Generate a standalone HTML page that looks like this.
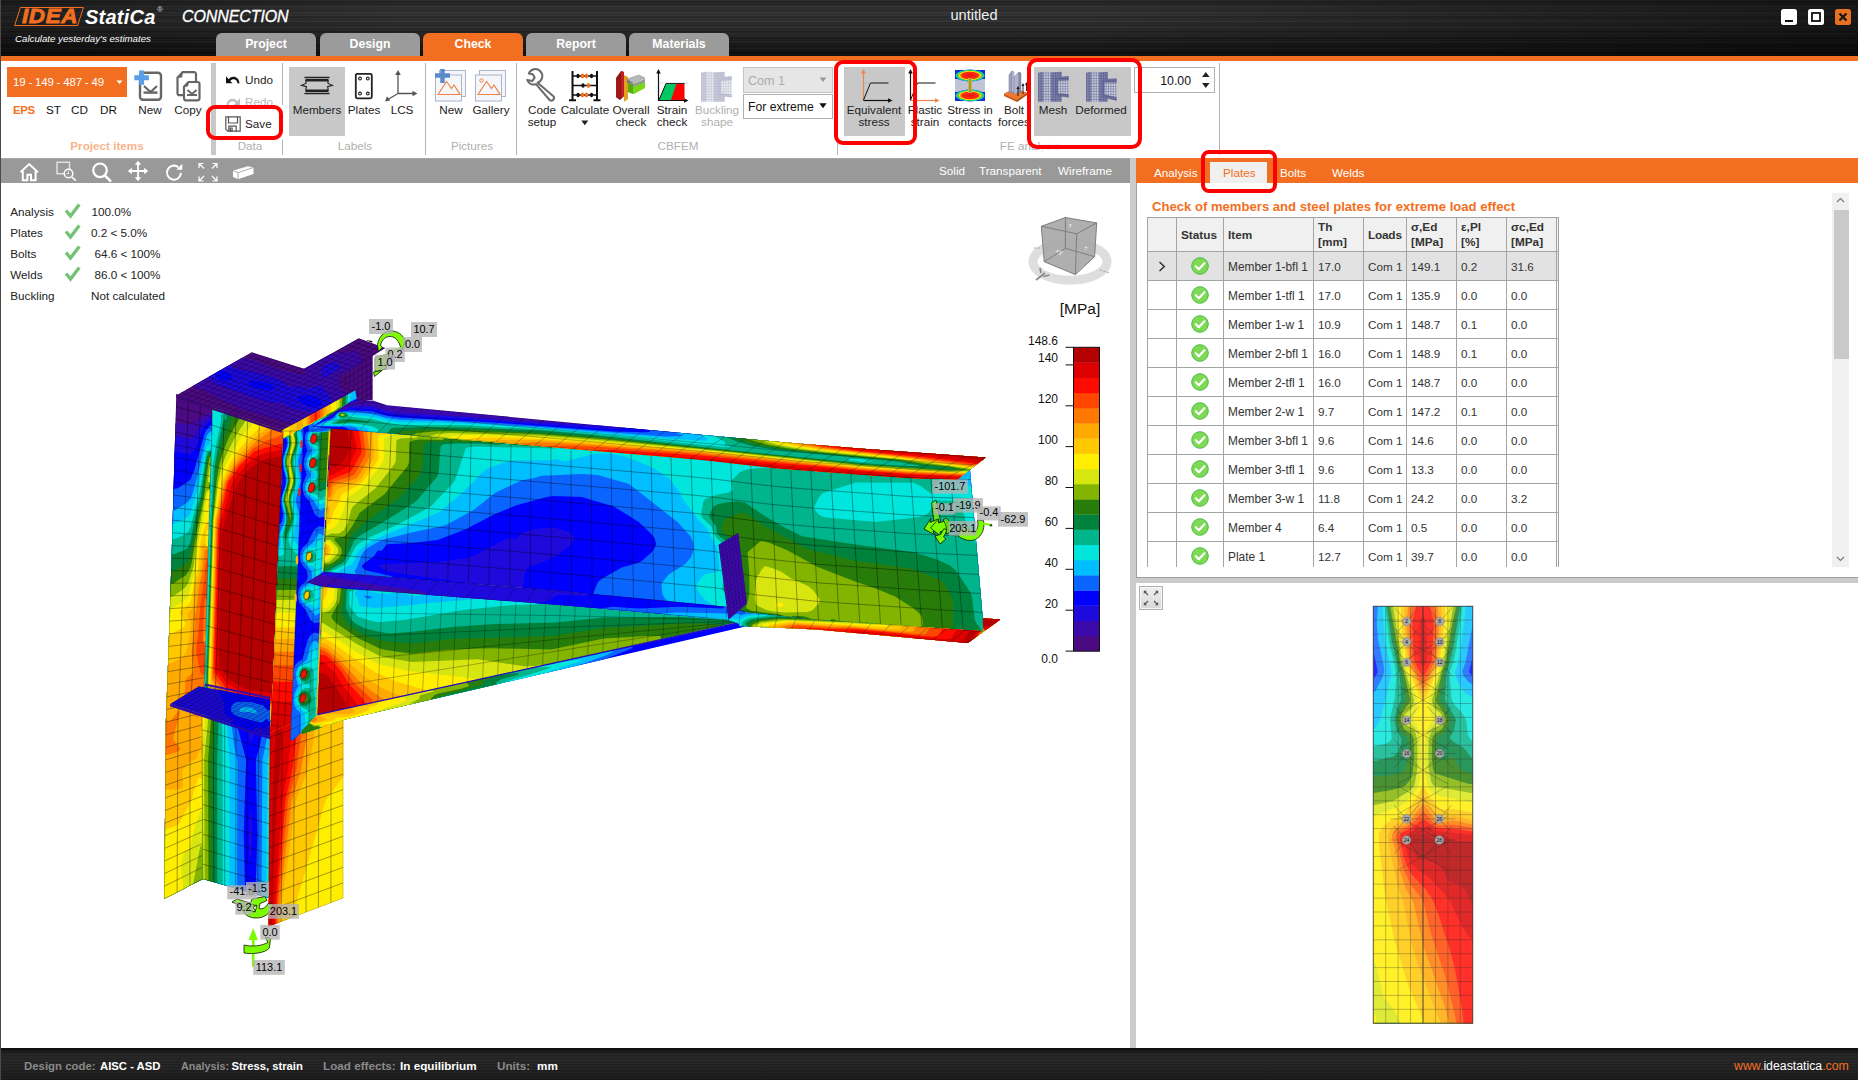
<!DOCTYPE html>
<html><head><meta charset="utf-8"><title>IDEA StatiCa Connection</title>
<style>
*{box-sizing:border-box;margin:0;padding:0}
html,body{width:1858px;height:1080px;overflow:hidden;background:#fff;font-family:"Liberation Sans",sans-serif;font-size:11.7px;color:#222}
.abs,.a{position:absolute}
svg{position:absolute;overflow:visible}
#titlebar{position:absolute;left:0;top:0;width:1858px;height:57px;background:
 linear-gradient(90deg,rgba(0,0,0,.35) 0,rgba(0,0,0,0) 22%,rgba(0,0,0,0) 58%,rgba(0,0,0,.5) 100%),
 repeating-linear-gradient(180deg,rgba(255,255,255,.05) 0,rgba(255,255,255,0) 1px,rgba(0,0,0,.16) 2px,rgba(255,255,255,.03) 3px),
 repeating-linear-gradient(180deg,rgba(255,255,255,.03) 0,rgba(0,0,0,.1) 3.5px,rgba(255,255,255,.04) 7px),
 linear-gradient(180deg,#222 0,#303030 18%,#2a2a2a 45%,#1b1b1b 70%,#080808 100%)}
#oline{position:absolute;left:0;top:56px;width:1858px;height:5px;background:#f26f21}
.mtab{position:absolute;top:33px;width:100px;height:24px;border-radius:6px 6px 0 0;background:#9b9b9b;color:#fff;font-weight:bold;font-size:12.3px;text-align:center;line-height:23px}
.mtab.act{background:#f26f21}
#ribbon{position:absolute;left:0;top:61px;width:1858px;height:97px;background:#fff}
#vtool{position:absolute;left:0;top:158px;width:1130px;height:25px;background:#999;border-top:1px solid #a8a8a8}
#view{position:absolute;left:0;top:183px;width:1130px;height:865px;background:#fff;overflow:hidden}
#vsplit{position:absolute;left:1130px;top:158px;width:6px;height:890px;background:#cbcbcb}
#rtabs{position:absolute;left:1136px;top:158px;width:722px;height:25px;background:#f26f21}
#rpanel{position:absolute;left:1136px;top:183px;width:722px;height:394px;background:#fff;border-left:1px solid #a0a0a0;overflow:hidden}
#hsplit{position:absolute;left:1136px;top:577px;width:722px;height:6px;background:#cbcbcb;border-top:1px solid #a0a0a0}
#rbottom{position:absolute;left:1136px;top:583px;width:722px;height:465px;background:#fff}
#status{position:absolute;left:0;top:1048px;width:1858px;height:32px;background:
 repeating-linear-gradient(180deg,rgba(255,255,255,.04) 0,rgba(255,255,255,0) 1px,rgba(0,0,0,.14) 2px,rgba(255,255,255,.03) 3px),
 linear-gradient(180deg,#0a0a0a 0,#262626 20%,#222 60%,#1a1a1a 100%)}
#leftedge{position:absolute;left:0;top:0;width:1px;height:1080px;background:#4a4a4a}
/* ribbon */
.lb{position:absolute;transform:translateX(-50%);text-align:center;white-space:nowrap;line-height:12px;font-size:11.7px;color:#222}
.gl{position:absolute;transform:translateX(-50%);white-space:nowrap;line-height:12px;font-size:11.7px;color:#b0b0b0;top:140px}
.vs{position:absolute;top:63px;width:1px;height:92px;background:#b4b4b4}
.pb{position:absolute;top:67px;height:69px;background:#c8c8c8}
.rbox{position:absolute;border:4px solid #fe0000;border-radius:9px}
.t{position:absolute;white-space:nowrap;line-height:12px}
</style></head><body>
<div id="titlebar"></div>
<div class="mtab" style="left:216px">Project</div>
<div class="mtab" style="left:320px">Design</div>
<div class="mtab act" style="left:423px">Check</div>
<div class="mtab" style="left:526px">Report</div>
<div class="mtab" style="left:629px">Materials</div>
<div id="oline"></div>
<div id="ribbon"></div>
<div id="vtool"></div>
<div id="view">
<!--VIEW-->
</div>
<div id="vsplit"></div>
<div id="rtabs"></div>
<div id="rpanel"></div>
<div id="hsplit"></div>
<div id="rbottom"></div>
<div id="status"></div>
<!-- title bar content -->
<div class="a" style="left:17px;top:7px;width:64px;height:19px;border:1.6px solid #f26f21;transform:skewX(-18deg);border-radius:1px"></div>
<div class="a" style="left:19px;top:5px;width:62px;height:22px;line-height:22px;font-size:20px;font-weight:bold;font-style:italic;color:#f26f21;letter-spacing:0.6px;text-align:center;-webkit-text-stroke:0.8px #f26f21;transform:scaleX(1.12);transform-origin:50% 50%">IDEA</div>
<div class="a" style="left:85px;top:5px;line-height:24px;font-size:20px;font-weight:bold;font-style:italic;color:#fff;white-space:nowrap;letter-spacing:0.25px">StatiCa</div>
<div class="a" style="left:157px;top:6px;line-height:8px;font-size:8px;color:#ddd">®</div>
<div class="a" style="left:182px;top:7px;line-height:20px;font-size:16px;font-style:italic;color:#fff;white-space:nowrap;letter-spacing:-0.1px;-webkit-text-stroke:0.3px #fff">CONNECTION</div>
<div class="a" style="left:15px;top:33px;line-height:12px;font-size:9.7px;font-style:italic;color:#fff;white-space:nowrap">Calculate yesterday's estimates</div>
<div class="a" style="left:924px;top:7px;width:100px;text-align:center;line-height:16px;font-size:14.6px;color:#f0f0f0">untitled</div>
<svg style="left:1780px;top:8px" width="74" height="18" viewBox="0 0 74 18">
<rect x="1" y="1" width="16" height="16" rx="2.5" fill="#fff"/><rect x="5" y="12" width="8" height="2" fill="#111"/>
<rect x="28" y="1" width="16" height="16" rx="2.5" fill="#fff"/><rect x="32" y="5" width="8" height="8" fill="none" stroke="#111" stroke-width="1.8"/>
<rect x="55" y="1" width="16" height="16" rx="2.5" fill="#e8701f"/><path d="M59.5 5.500l7 7M66.500 5.500l-7 7" stroke="#151515" stroke-width="2.200"/>
</svg>
<!-- ribbon: project items -->
<div class="a" style="left:7px;top:67px;width:120px;height:30px;background:#f26f21"></div>
<div class="t" style="left:13px;top:76px;color:#fff;font-size:11.4px;letter-spacing:-0.15px">19 - 149 - 487 - 49</div>
<svg style="left:116px;top:80px" width="8" height="5"><path d="M0.5 0.5h6l-3 3.6z" fill="#fff"/></svg>
<div class="t" style="left:13px;top:104px;color:#f26f21;font-weight:bold;font-size:11.3px;letter-spacing:-0.3px">EPS</div>
<div class="t" style="left:46px;top:104px;color:#111">ST</div>
<div class="t" style="left:71px;top:104px;color:#111">CD</div>
<div class="t" style="left:100px;top:104px;color:#111">DR</div>
<!-- New icon -->
<svg style="left:133px;top:69px" width="32" height="34" viewBox="0 0 32 34">
<rect x="7" y="3.8" width="21" height="27" rx="3" fill="#fff" stroke="#666" stroke-width="2.4"/>
<path d="M11 17l6.5 6 6.5-6" fill="none" stroke="#666" stroke-width="2.2"/><path d="M10.5 23.6h14" stroke="#666" stroke-width="2.4"/>
<path d="M1.3 8.7h14.6M8.6 1.6v14.2" stroke="#5b9ee8" stroke-width="5"/>
</svg>
<div class="lb" style="left:150px;top:104px">New</div>
<!-- Copy icon -->
<svg style="left:174px;top:69px" width="30" height="34" viewBox="0 0 30 34">
<path d="M8.5 3.2h11.5a2 2 0 0 1 2 2v19a2 2 0 0 1-2 2h-14.5a2 2 0 0 1-2-2v-15.5z" fill="#fff" stroke="#666" stroke-width="2.2" stroke-linejoin="round"/>
<path d="M3.5 8.7l5-5.5v3.5a2 2 0 0 1-2 2z" fill="#666"/>
<path d="M14.5 13h9a2 2 0 0 1 2 2v14.3a2 2 0 0 1-2 2h-11.5a2 2 0 0 1-2-2v-11.5z" fill="#fff" stroke="#666" stroke-width="2.2" stroke-linejoin="round"/>
<path d="M10 17.8l4.5-4.8v2.8a2 2 0 0 1-2 2z" fill="#666"/>
<path d="M13.5 21l4.5 4 4.5-4" fill="none" stroke="#666" stroke-width="1.8"/><path d="M13 26h10" stroke="#666" stroke-width="2"/>
</svg>
<div class="lb" style="left:188px;top:104px">Copy</div>
<div class="gl" style="left:107px;color:#f8b48c;font-weight:bold">Project items</div>
<div class="a" style="left:211px;top:63px;width:5px;height:92px;background:#c8c8c8"></div>
<!-- data -->
<svg style="left:225px;top:75px" width="16" height="10" viewBox="0 0 16 10"><path d="M1 1.2v7h6.6l-2.4-2.3c2.6-2.6 6.6-2.2 7.4 2.6l1.9-.2c-.6-7-7.4-8.200-10.800-4.100z" fill="#111"/></svg>
<div class="t" style="left:245px;top:74px">Undo</div>
<svg style="left:225px;top:97px" width="16" height="10" viewBox="0 0 16 10"><path d="M15 1.200v7h-6.600l2.400-2.300c-2.600-2.600-6.600-2.200-7.400 2.600l-1.900-.2c.6-7 7.400-8.200 10.800-4.100z" fill="#bdbdbd"/></svg>
<div class="t" style="left:245px;top:96px;color:#b8b8b8">Redo</div>
<div class="rbox" style="left:206px;top:105px;width:77px;height:35px"></div>
<svg style="left:225px;top:116px" width="16" height="16" viewBox="0 0 16 16"><path d="M.8.800h14.400v14.400h-12.400l-2-2z" fill="#fff" stroke="#555" stroke-width="1.200"/><path d="M3.500.8v6.200h9v-6.200M3.800 15.200v-5h7.400v5M5.300 12h1.800v3h-1.800z" fill="none" stroke="#555" stroke-width="1.200"/></svg>
<div class="t" style="left:245px;top:118px">Save</div>
<div class="gl" style="left:250px">Data</div>
<div class="vs" style="left:282px;top:140px;height:15px"></div>
<div class="vs" style="left:282px;height:42px"></div>
<!-- labels -->
<div class="pb" style="left:289px;width:56px"></div>
<svg style="left:300px;top:75px" width="34" height="22" viewBox="0 0 34 22"><path d="M4.500 2.500h25M4.500 18.500h25" stroke="#222" stroke-width="1.600"/><path d="M5.500 5.300h23M5.500 15.700h23" stroke="#222" stroke-width="2.600"/><path d="M6 5v3.500l-4.500 1.800 5 1.400-.5 1.500v2.500M28 5v3.500l4.500 1.800-5 1.400.5 1.500v2.500" fill="none" stroke="#222" stroke-width="1.100"/></svg>
<div class="lb" style="left:317px;top:104px">Members</div>
<svg style="left:354px;top:72px" width="20" height="28" viewBox="0 0 20 28"><rect x="1.800" y="1.800" width="16" height="24.500" rx="1.500" fill="#fff" stroke="#222" stroke-width="1.800"/><g fill="#fff" stroke="#222" stroke-width="1.100"><circle cx="6" cy="6.500" r="1.400"/><circle cx="13.800" cy="6.500" r="1.400"/><circle cx="6" cy="21.500" r="1.400"/><circle cx="13.800" cy="21.500" r="1.400"/></g></svg>
<div class="lb" style="left:364px;top:104px">Plates</div>
<svg style="left:384px;top:70px" width="34" height="32" viewBox="0 0 34 32"><path d="M14 3v20.500M14 23.500h17M14 23.500l-11 6.500" stroke="#555" stroke-width="1.300" fill="none"/><path d="M14 0l-2.800 5h5.600zM33.500 23.500l-5-2.800v5.600zM1 31.500l2-5.300 3.200 4.400z" fill="#555"/></svg>
<div class="lb" style="left:402px;top:104px">LCS</div>
<div class="gl" style="left:355px">Labels</div>
<div class="vs" style="left:425px"></div>
<!-- pictures -->
<svg style="left:434px;top:69px" width="34" height="34" viewBox="0 0 34 34"><rect x="5.500" y="1.500" width="26" height="26" fill="#f4f6fa" stroke="#aab4cc" stroke-width="1"/><rect x="1.500" y="6" width="26" height="26" fill="#f4f6fa" stroke="#aab4cc" stroke-width="1"/><path d="M4 25.500l8.500-13 5 7 2.500-3.500 6 9.500z" fill="none" stroke="#f0824a" stroke-width="1.200"/><path d="M1 6.500h15M8.500 0v14" stroke="#4d83c9" stroke-width="4.500" opacity=".92"/></svg>
<div class="lb" style="left:451px;top:104px">New</div>
<svg style="left:474px;top:69px" width="34" height="34" viewBox="0 0 34 34"><rect x="5.500" y="1.500" width="26" height="26" fill="#f4f6fa" stroke="#aab4cc" stroke-width="1"/><rect x="1.500" y="6" width="26" height="26" fill="#f4f6fa" stroke="#aab4cc" stroke-width="1"/><path d="M4 25.500l8.500-13 5 7 2.500-3.500 6 9.500z" fill="none" stroke="#f0824a" stroke-width="1.200"/><circle cx="7.500" cy="11.500" r="1.700" fill="none" stroke="#f0824a" stroke-width="1"/></svg>
<div class="lb" style="left:491px;top:104px">Gallery</div>
<div class="gl" style="left:472px">Pictures</div>
<div class="vs" style="left:516px"></div>
<svg width="0" height="0" style="left:0;top:0"><defs>
<pattern id="gm" width="1.700" height="2.650" patternUnits="userSpaceOnUse"><path d="M0 .2H1.700M.2 0V2.650" stroke="#474b76" stroke-width=".5" fill="none"/></pattern>
</defs></svg>
<!-- CBFEM -->
<svg style="left:526px;top:69px" width="34" height="34" viewBox="0 0 34 34"><path d="M2.800 4.500a7 7 0 1 1 8.800 9.200l15.800 13.500a2.700 2.700 0 0 1-3.800 3.800l-13.600-15.800a7 7 0 0 1-8.800-4.300l5.200 1 2.300-3.300-2-3.300z" fill="#fff" stroke="#6a6a6a" stroke-width="2" stroke-linejoin="round"/></svg>
<div class="lb" style="left:542px;top:104px">Code<br>setup</div>
<svg style="left:569px;top:70px" width="32" height="32" viewBox="0 0 32 32"><path d="M3.500 1v29M28 1v29M0 30.300h7M24.500 30.300h7" stroke="#111" stroke-width="2"/><path d="M3.500 6h24.500M3.500 15.500h24.500M3.500 25h24.500" stroke="#111" stroke-width="1.300"/><g fill="#111"><ellipse cx="9" cy="6" rx="1.600" ry="2.300"/><ellipse cx="22.500" cy="6" rx="1.600" ry="2.300"/><ellipse cx="14" cy="15.500" rx="1.600" ry="2.300"/><ellipse cx="9" cy="25" rx="1.600" ry="2.300"/><ellipse cx="22.500" cy="25" rx="1.600" ry="2.300"/></g><g fill="#f26f21"><ellipse cx="13.500" cy="6" rx="1.700" ry="2.400"/><ellipse cx="17.500" cy="6" rx="1.700" ry="2.400"/><ellipse cx="19.500" cy="15.500" rx="1.700" ry="2.400"/><ellipse cx="13.500" cy="25" rx="1.700" ry="2.400"/><ellipse cx="17.500" cy="25" rx="1.700" ry="2.400"/></g></svg>
<div class="lb" style="left:585px;top:104px">Calculate</div>
<svg style="left:581px;top:120px" width="8" height="6"><path d="M0.300 0.500h7l-3.500 4.800z" fill="#222"/></svg>
<svg style="left:615px;top:69px" width="32" height="34" viewBox="0 0 32 34"><path d="M1 9l5-7 3 1v24l-4 4-4-3z" fill="#8c1414"/><path d="M6 2l3 1v24l-3 3z" fill="#c02020"/><path d="M9 6l4 2v22l-4 3z" fill="#e0a020"/><path d="M1 9l4 2v20l-4-3z" fill="#a01818"/><path d="M12 10l12-4 6 3-12 5z" fill="#b8b8b8" stroke="#888" stroke-width=".5"/><path d="M13 14l5 1 12-5v9l-11 6-6-2z" fill="#78d818"/><path d="M13 14l5 1v10l-5-2z" fill="#58a810"/><path d="M18 15l12-5v3l-12 5z" fill="#999"/><path d="M12 10v4l6 1v-1z" fill="#7a7a7a"/></svg>
<div class="lb" style="left:631px;top:104px">Overall<br>check</div>
<svg style="left:655px;top:69px" width="34" height="34" viewBox="0 0 34 34"><path d="M3.500 3v28.500h28" fill="none" stroke="#111" stroke-width="1.200"/><path d="M3.500 0l-2.300 4.500h4.600zM33.500 31.500l-4.500-2.300v4.600z" fill="#111"/><path d="M4 31l7-16.500h18.500v16.500z" fill="#fe0000"/><path d="M4 31l7-16.500h10.500l-5.500 16.500z" fill="#00c864"/><path d="M4 31l7-16.500h18.500" fill="none" stroke="#111" stroke-width="1"/><path d="M3.500 14h30" stroke="#999" stroke-width=".7" stroke-dasharray="1 1"/></svg>
<div class="lb" style="left:672px;top:104px">Strain<br>check</div>
<svg style="left:701px;top:70px" width="32" height="32" viewBox="0 0 32 32" opacity=".42"><path d="M0 2.700L5.400 1.800V31.800H0z" fill="#8a8eb6"/><path d="M5.400 1.600L12.900 2V31.800H5.400z" fill="#cfd2e2"/><path d="M12.900 2.400L23.700 1.800V31.800H12.900z" fill="#8286b0"/><path d="M19.900 10.200H30.700V23.600H19.900z" fill="#d4d7e6"/><path d="M17.200 7.500L30.700 6V10.300L19.900 10.800V23.200L30.700 24.200V27.600L17.200 25.600z" fill="#7478a4"/><path d="M0 2.700L5.400 1.800L12.900 2.200L23.700 1.800V6.800L30.700 6V27.600L23.700 26.600V31.800H0z" fill="url(#gm)"/></svg>
<div class="lb" style="left:717px;top:104px;color:#b0b0b0">Buckling<br>shape</div>
<div class="a" style="left:743px;top:67px;width:90px;height:26px;background:#e6e6e6;border:1px solid #c4c4c4"></div>
<div class="t" style="left:748px;top:74px;font-size:12.6px;line-height:14px;color:#ababab">Com 1</div>
<svg style="left:819px;top:77px" width="9" height="6"><path d="M0.500 0.500h7l-3.500 4.500z" fill="#9a9a9a"/></svg>
<div class="a" style="left:743px;top:94px;width:90px;height:25px;background:#fff;border:1px solid #b0b0b0"></div>
<div class="t" style="left:748px;top:100px;font-size:12.200px;line-height:14px;color:#111">For extreme</div>
<svg style="left:819px;top:103px" width="9" height="6"><path d="M0.300 0.300h7.400l-3.700 5z" fill="#111"/></svg>
<div class="gl" style="left:678px">CBFEM</div>
<div class="vs" style="left:837px"></div>
<!-- FE analysis -->
<div class="gl" style="left:1030px">FE anal<span style="color:#ececec">ysis</span></div>
<svg style="left:906px;top:69px" width="34" height="34" viewBox="0 0 34 34"><path d="M4.500 3v28.500" stroke="#111" stroke-width="1.200"/><path d="M4.500 0l-2.300 4.500h4.600z" fill="#111"/><path d="M4.500 31.500h27" stroke="#f0824a" stroke-width="1.200"/><path d="M33.500 31.500l-4.500-2.300v4.600z" fill="#f0824a"/><path d="M4.500 31l7-17h18" fill="none" stroke="#111" stroke-width="1"/></svg>
<div class="lb" style="left:925px;top:104px">Plastic<br>strain</div>
<svg style="left:955px;top:70px" width="30" height="31" viewBox="0 0 30 31"><defs><radialGradient id="sc1" cx="50%" cy="50%" r="50%"><stop offset="0" stop-color="#f01010"/><stop offset=".55" stop-color="#f83010"/><stop offset=".7" stop-color="#f8e010"/><stop offset=".82" stop-color="#30d030"/><stop offset=".92" stop-color="#10c8e8"/><stop offset="1" stop-color="#1028d8"/></radialGradient></defs><rect width="30" height="31" fill="#1030d0"/><rect x="0" y="9" width="30" height="13" fill="#c0c4d4"/><ellipse cx="15" cy="5.500" rx="15" ry="6" fill="url(#sc1)"/><ellipse cx="15" cy="25.500" rx="15" ry="6" fill="url(#sc1)"/><rect x="13" y="8" width="4" height="15" fill="#40d8a0"/><rect x="13.700" y="8" width="2.600" height="15" fill="#f8e010"/><rect x="14.400" y="7" width="1.200" height="17" fill="#f03010"/></svg>
<div class="lb" style="left:970px;top:104px">Stress in<br>contacts</div>
<svg style="left:1003px;top:69px" width="26" height="34" viewBox="0 0 26 34"><path d="M1 25l10-5 13 4-10 7z" fill="#f07828" stroke="#c05010" stroke-width=".5"/><path d="M1 25v2l13 6v-2z" fill="#c85818"/><path d="M14 31v2l10-7v-2z" fill="#a84808"/><path d="M6 6l3-4v21l-3 1z" fill="#a0a4c0" stroke="#707490" stroke-width=".5"/><path d="M9 2l2 1v20l-2 .500z" fill="#c8cce0" stroke="#707490" stroke-width=".5"/><path d="M11 8l5-5v20l-5 3z" fill="#b0b4d0" stroke="#707490" stroke-width=".5"/><path d="M16 3l2 1v20l-2-1z" fill="#8c90b0" stroke="#707490" stroke-width=".5"/><path d="M15 27v-8M20 25v-9M23.500 22v-7" stroke="#111" stroke-width=".9"/><path d="M15 17l-1.500 3h3zM20 14l-1.500 3h3zM23.500 13l-1.500 3h3z" fill="#111"/></svg>
<div class="lb" style="left:1014px;top:104px">Bolt<br>forces</div>
<div class="a" style="left:1134px;top:67px;width:81px;height:26px;background:#fff;border:1px solid #b0b0b0"></div>
<div class="t" style="left:1150px;top:74px;width:41px;text-align:right;font-size:12.300px;line-height:14px;color:#111">10.00</div>
<svg style="left:1201px;top:70px" width="10" height="20"><path d="M1 7h7.600l-3.800-5zM1 13h7.600l-3.800 5z" fill="#222"/></svg>
<div class="vs" style="left:1219px"></div>
<!-- red boxes -->
<div class="rbox" style="left:834px;top:60px;width:83px;height:85px;border-radius:9px"></div>
<div class="pb" style="left:844px;width:61px"></div>
<svg style="left:859px;top:69px" width="34" height="34" viewBox="0 0 34 34"><path d="M4.500 3v28.500" stroke="#f0824a" stroke-width="1.200"/><path d="M4.500 0l-2.300 4.500h4.600z" fill="#f0824a"/><path d="M4.500 31.500h27" stroke="#111" stroke-width="1.200"/><path d="M33.500 31.500l-4.500-2.300v4.600z" fill="#111"/><path d="M4.500 31l7-17h18" fill="none" stroke="#111" stroke-width="1"/><path d="M4.500 14h8" stroke="#999" stroke-width=".7" stroke-dasharray="1 1"/></svg>
<div class="lb" style="left:874px;top:104px">Equivalent<br>stress</div>
<div class="rbox" style="left:1027px;top:58px;width:115px;height:91px;border-radius:10px"></div>
<div class="pb" style="left:1034px;width:97px"></div>
<svg style="left:1038px;top:70px" width="32" height="32" viewBox="0 0 32 32"><path d="M0 2.700L5.400 1.800V31.800H0z" fill="#8a8eb6"/><path d="M5.400 1.600L12.900 2V31.800H5.400z" fill="#cfd2e2"/><path d="M12.900 2.400L23.700 1.800V31.800H12.900z" fill="#8286b0"/><path d="M19.900 10.200H30.700V23.600H19.900z" fill="#d4d7e6"/><path d="M17.200 7.500L30.700 6V10.300L19.900 10.800V23.200L30.700 24.200V27.600L17.200 25.600z" fill="#7478a4"/><path d="M0 2.700L5.400 1.800L12.900 2.200L23.700 1.800V6.800L30.700 6V27.600L23.700 26.600V31.800H0z" fill="url(#gm)"/></svg>
<div class="lb" style="left:1053px;top:104px">Mesh</div>
<svg style="left:1086px;top:70px" width="32" height="32" viewBox="0 0 32 32"><path d="M0 2.700L5.400 1.800V31.800H0z" fill="#8a8eb6"/><path d="M5.400 1.600L12.900 2V31.800H5.400z" fill="#cfd2e2"/><path d="M12.900 2.400L22 1.800L21.500 31.800H12.900z" fill="#8286b0"/><path d="M18.400 12H30.700V27H18.400z" fill="#d4d7e6"/><path d="M15.500 9.500L30.700 8.500V12.800L18.400 12.500V24.500L30.700 27.200V30.700L15.700 27z" fill="#7478a4"/><path d="M0 2.700L5.400 1.800L12.900 2.200L22 1.800V8.800L30.700 8.500V30.700L21.600 28.500V31.800H0z" fill="url(#gm)"/></svg>
<div class="lb" style="left:1101px;top:104px">Deformed</div>
<!-- viewer toolbar -->
<svg style="left:0;top:158px" width="270" height="25" viewBox="0 158 270 25" fill="none" stroke="#fff">
<path d="M20.500 172.200l8.700-8.200 8.700 8.200M22.800 171v9.200h4.600v-5.400h3.600v5.400h4.600v-9.200" stroke-width="2"/>
<rect x="57" y="162.200" width="12.500" height="11.500" stroke-width="1.400" stroke="#e4e4e4"/><circle cx="68.500" cy="173.500" r="4.300" stroke-width="1.500" fill="#999"/><path d="M71.800 177l4 3.600" stroke-width="1.600"/><path d="M68.500 171.500v2.200h-2" stroke-width=".9"/>
<circle cx="100" cy="170.300" r="6.800" stroke-width="2.200"/><path d="M105 175.700l6 6" stroke-width="2.600"/>
<path d="M138 163.500v15M130.500 171h15" stroke-width="1.800"/><path d="M138 160.800l-3.200 4h6.400zM138 181.200l-3.200-4h6.400zM127.800 171l4-3.200v6.400zM148.200 171l-4-3.200v6.400z" fill="#fff" stroke="none"/>
<path d="M181 172.800a7 7 0 1 1-2.600-5.600" stroke-width="2"/><path d="M182.300 163.800v6h-6z" fill="#fff" stroke="none"/>
<path d="M199 168v-4.500h4.500M199.500 164l4.500 4.500M217 168v-4.500h-4.500M216.500 164l-4.500 4.500M199 176.500v4.500h4.500M199.500 180.500l4.500-4.500M217 176.500v4.500h-4.500M216.500 180.500l-4.500-4.500" stroke-width="1.200"/>
<path d="M233 170.500l15-4.200 5.500 1.200v6.500l-15.500 5.200-5-2.200z" fill="#fff" stroke="none"/><path d="M238 179.200v-6.500l-5-2.200M238 172.700l15.500-5.200" stroke="#999" stroke-width=".8"/>
</svg>
<div class="t" style="left:939px;top:165px;color:#fff">Solid</div>
<div class="t" style="left:979px;top:165px;color:#fff">Transparent</div>
<div class="t" style="left:1058px;top:165px;color:#fff">Wireframe</div>
<!-- right tabs -->
<div class="t" style="left:1154px;top:167px;color:#fff">Analysis</div>
<div class="a" style="left:1210px;top:162px;width:57px;height:21px;background:#f0f0f0"></div>
<div class="t" style="left:1223px;top:167px;color:#f26f21">Plates</div>
<div class="t" style="left:1280px;top:167px;color:#fff">Bolts</div>
<div class="t" style="left:1332px;top:167px;color:#fff">Welds</div>
<div class="rbox" style="left:1201px;top:150px;width:76px;height:43px;border-radius:8px"></div>
<!-- plates table -->
<div class="t" style="left:1152px;top:200px;color:#f26f21;font-weight:bold;font-size:13.1px;line-height:13px" id="hd">Check of members and steel plates for extreme load effect</div>
<div class="a" style="left:1147px;top:217px;width:412px;height:35px;background:#f0f0f0"></div>
<div class="a" style="left:1147px;top:252px;width:412px;height:29px;background:#e2e2e2"></div>
<div class="a" style="left:1140px;top:190px;width:430px;height:377px;overflow:hidden">
<div class="a" style="left:7px;top:27px;width:1px;height:400px;background:#a4a4a4"></div>
<div class="a" style="left:36px;top:27px;width:1px;height:400px;background:#a4a4a4"></div>
<div class="a" style="left:83px;top:27px;width:1px;height:400px;background:#a4a4a4"></div>
<div class="a" style="left:173px;top:27px;width:1px;height:400px;background:#a4a4a4"></div>
<div class="a" style="left:223px;top:27px;width:1px;height:400px;background:#a4a4a4"></div>
<div class="a" style="left:266px;top:27px;width:1px;height:400px;background:#a4a4a4"></div>
<div class="a" style="left:316px;top:27px;width:1px;height:400px;background:#a4a4a4"></div>
<div class="a" style="left:366px;top:27px;width:1px;height:400px;background:#a4a4a4"></div>
<div class="a" style="left:416px;top:27px;width:1px;height:400px;background:#a4a4a4"></div>
<div class="a" style="left:418px;top:27px;width:1px;height:400px;background:#a4a4a4"></div>
<div class="a" style="left:7px;top:27px;width:412px;height:1px;background:#a4a4a4"></div>
<div class="a" style="left:7px;top:61px;width:412px;height:1px;background:#a4a4a4"></div>
<div class="a" style="left:7px;top:90px;width:412px;height:1px;background:#a4a4a4"></div>
<div class="a" style="left:7px;top:119px;width:412px;height:1px;background:#a4a4a4"></div>
<div class="a" style="left:7px;top:148px;width:412px;height:1px;background:#a4a4a4"></div>
<div class="a" style="left:7px;top:177px;width:412px;height:1px;background:#a4a4a4"></div>
<div class="a" style="left:7px;top:206px;width:412px;height:1px;background:#a4a4a4"></div>
<div class="a" style="left:7px;top:235px;width:412px;height:1px;background:#a4a4a4"></div>
<div class="a" style="left:7px;top:264px;width:412px;height:1px;background:#a4a4a4"></div>
<div class="a" style="left:7px;top:293px;width:412px;height:1px;background:#a4a4a4"></div>
<div class="a" style="left:7px;top:322px;width:412px;height:1px;background:#a4a4a4"></div>
<div class="a" style="left:7px;top:351px;width:412px;height:1px;background:#a4a4a4"></div>
<div class="a" style="left:7px;top:380px;width:412px;height:1px;background:#a4a4a4"></div>
<div class="a" style="left:7px;top:409px;width:412px;height:1px;background:#a4a4a4"></div>
<div class="t" style="left:41px;top:38px;font-weight:bold;color:#333;font-size:11.800px;line-height:15px">Status</div>
<div class="t" style="left:88px;top:38px;font-weight:bold;color:#333;font-size:11.800px;line-height:15px">Item</div>
<div class="t" style="left:178px;top:30px;font-weight:bold;color:#333;font-size:11.800px;line-height:15px">Th<br>[mm]</div>
<div class="t" style="left:228px;top:38px;font-weight:bold;color:#333;font-size:11.800px;line-height:15px;letter-spacing:-0.2px">Loads</div>
<div class="t" style="left:271px;top:30px;font-weight:bold;color:#333;font-size:11.800px;line-height:15px">σ,Ed<br>[MPa]</div>
<div class="t" style="left:321px;top:30px;font-weight:bold;color:#333;font-size:11.800px;line-height:15px">ε,Pl<br>[%]</div>
<div class="t" style="left:371px;top:30px;font-weight:bold;color:#333;font-size:11.800px;line-height:15px">σc,Ed<br>[MPa]</div>
<svg style="left:18px;top:71px" width="9" height="11"><path d="M1.500 1l4.800 4.500-4.800 4.500" fill="none" stroke="#333" stroke-width="1.500"/></svg>
<svg style="left:51px;top:67px" width="18" height="18" viewBox="0 0 18 18"><circle cx="9" cy="9" r="8.300" fill="#7ed957" stroke="#3fb53a" stroke-width=".9"/><path d="M4.800 9.200l3 3 5.600-6" fill="none" stroke="#fff" stroke-width="2.200" stroke-linecap="round" stroke-linejoin="round"/></svg>
<div class="t" style="left:88px;top:71px;color:#333;font-size:11.9px">Member 1-bfl 1</div>
<div class="t" style="left:178px;top:71px;color:#333">17.0</div>
<div class="t" style="left:228px;top:71px;color:#333">Com 1</div>
<div class="t" style="left:271px;top:71px;color:#333">149.1</div>
<div class="t" style="left:321px;top:71px;color:#333">0.2</div>
<div class="t" style="left:371px;top:71px;color:#333">31.6</div>
<svg style="left:51px;top:96px" width="18" height="18" viewBox="0 0 18 18"><circle cx="9" cy="9" r="8.300" fill="#7ed957" stroke="#3fb53a" stroke-width=".9"/><path d="M4.800 9.200l3 3 5.600-6" fill="none" stroke="#fff" stroke-width="2.200" stroke-linecap="round" stroke-linejoin="round"/></svg>
<div class="t" style="left:88px;top:100px;color:#333;font-size:11.9px">Member 1-tfl 1</div>
<div class="t" style="left:178px;top:100px;color:#333">17.0</div>
<div class="t" style="left:228px;top:100px;color:#333">Com 1</div>
<div class="t" style="left:271px;top:100px;color:#333">135.9</div>
<div class="t" style="left:321px;top:100px;color:#333">0.0</div>
<div class="t" style="left:371px;top:100px;color:#333">0.0</div>
<svg style="left:51px;top:125px" width="18" height="18" viewBox="0 0 18 18"><circle cx="9" cy="9" r="8.300" fill="#7ed957" stroke="#3fb53a" stroke-width=".9"/><path d="M4.800 9.200l3 3 5.600-6" fill="none" stroke="#fff" stroke-width="2.200" stroke-linecap="round" stroke-linejoin="round"/></svg>
<div class="t" style="left:88px;top:129px;color:#333;font-size:11.9px">Member 1-w 1</div>
<div class="t" style="left:178px;top:129px;color:#333">10.9</div>
<div class="t" style="left:228px;top:129px;color:#333">Com 1</div>
<div class="t" style="left:271px;top:129px;color:#333">148.7</div>
<div class="t" style="left:321px;top:129px;color:#333">0.1</div>
<div class="t" style="left:371px;top:129px;color:#333">0.0</div>
<svg style="left:51px;top:154px" width="18" height="18" viewBox="0 0 18 18"><circle cx="9" cy="9" r="8.300" fill="#7ed957" stroke="#3fb53a" stroke-width=".9"/><path d="M4.800 9.200l3 3 5.600-6" fill="none" stroke="#fff" stroke-width="2.200" stroke-linecap="round" stroke-linejoin="round"/></svg>
<div class="t" style="left:88px;top:158px;color:#333;font-size:11.9px">Member 2-bfl 1</div>
<div class="t" style="left:178px;top:158px;color:#333">16.0</div>
<div class="t" style="left:228px;top:158px;color:#333">Com 1</div>
<div class="t" style="left:271px;top:158px;color:#333">148.9</div>
<div class="t" style="left:321px;top:158px;color:#333">0.1</div>
<div class="t" style="left:371px;top:158px;color:#333">0.0</div>
<svg style="left:51px;top:183px" width="18" height="18" viewBox="0 0 18 18"><circle cx="9" cy="9" r="8.300" fill="#7ed957" stroke="#3fb53a" stroke-width=".9"/><path d="M4.800 9.200l3 3 5.600-6" fill="none" stroke="#fff" stroke-width="2.200" stroke-linecap="round" stroke-linejoin="round"/></svg>
<div class="t" style="left:88px;top:187px;color:#333;font-size:11.9px">Member 2-tfl 1</div>
<div class="t" style="left:178px;top:187px;color:#333">16.0</div>
<div class="t" style="left:228px;top:187px;color:#333">Com 1</div>
<div class="t" style="left:271px;top:187px;color:#333">148.7</div>
<div class="t" style="left:321px;top:187px;color:#333">0.0</div>
<div class="t" style="left:371px;top:187px;color:#333">0.0</div>
<svg style="left:51px;top:212px" width="18" height="18" viewBox="0 0 18 18"><circle cx="9" cy="9" r="8.300" fill="#7ed957" stroke="#3fb53a" stroke-width=".9"/><path d="M4.800 9.200l3 3 5.600-6" fill="none" stroke="#fff" stroke-width="2.200" stroke-linecap="round" stroke-linejoin="round"/></svg>
<div class="t" style="left:88px;top:216px;color:#333;font-size:11.9px">Member 2-w 1</div>
<div class="t" style="left:178px;top:216px;color:#333">9.7</div>
<div class="t" style="left:228px;top:216px;color:#333">Com 1</div>
<div class="t" style="left:271px;top:216px;color:#333">147.2</div>
<div class="t" style="left:321px;top:216px;color:#333">0.1</div>
<div class="t" style="left:371px;top:216px;color:#333">0.0</div>
<svg style="left:51px;top:241px" width="18" height="18" viewBox="0 0 18 18"><circle cx="9" cy="9" r="8.300" fill="#7ed957" stroke="#3fb53a" stroke-width=".9"/><path d="M4.800 9.200l3 3 5.600-6" fill="none" stroke="#fff" stroke-width="2.200" stroke-linecap="round" stroke-linejoin="round"/></svg>
<div class="t" style="left:88px;top:245px;color:#333;font-size:11.9px">Member 3-bfl 1</div>
<div class="t" style="left:178px;top:245px;color:#333">9.6</div>
<div class="t" style="left:228px;top:245px;color:#333">Com 1</div>
<div class="t" style="left:271px;top:245px;color:#333">14.6</div>
<div class="t" style="left:321px;top:245px;color:#333">0.0</div>
<div class="t" style="left:371px;top:245px;color:#333">0.0</div>
<svg style="left:51px;top:270px" width="18" height="18" viewBox="0 0 18 18"><circle cx="9" cy="9" r="8.300" fill="#7ed957" stroke="#3fb53a" stroke-width=".9"/><path d="M4.800 9.200l3 3 5.600-6" fill="none" stroke="#fff" stroke-width="2.200" stroke-linecap="round" stroke-linejoin="round"/></svg>
<div class="t" style="left:88px;top:274px;color:#333;font-size:11.9px">Member 3-tfl 1</div>
<div class="t" style="left:178px;top:274px;color:#333">9.6</div>
<div class="t" style="left:228px;top:274px;color:#333">Com 1</div>
<div class="t" style="left:271px;top:274px;color:#333">13.3</div>
<div class="t" style="left:321px;top:274px;color:#333">0.0</div>
<div class="t" style="left:371px;top:274px;color:#333">0.0</div>
<svg style="left:51px;top:299px" width="18" height="18" viewBox="0 0 18 18"><circle cx="9" cy="9" r="8.300" fill="#7ed957" stroke="#3fb53a" stroke-width=".9"/><path d="M4.800 9.200l3 3 5.600-6" fill="none" stroke="#fff" stroke-width="2.200" stroke-linecap="round" stroke-linejoin="round"/></svg>
<div class="t" style="left:88px;top:303px;color:#333;font-size:11.9px">Member 3-w 1</div>
<div class="t" style="left:178px;top:303px;color:#333">11.8</div>
<div class="t" style="left:228px;top:303px;color:#333">Com 1</div>
<div class="t" style="left:271px;top:303px;color:#333">24.2</div>
<div class="t" style="left:321px;top:303px;color:#333">0.0</div>
<div class="t" style="left:371px;top:303px;color:#333">3.2</div>
<svg style="left:51px;top:328px" width="18" height="18" viewBox="0 0 18 18"><circle cx="9" cy="9" r="8.300" fill="#7ed957" stroke="#3fb53a" stroke-width=".9"/><path d="M4.800 9.200l3 3 5.600-6" fill="none" stroke="#fff" stroke-width="2.200" stroke-linecap="round" stroke-linejoin="round"/></svg>
<div class="t" style="left:88px;top:332px;color:#333;font-size:11.9px">Member 4</div>
<div class="t" style="left:178px;top:332px;color:#333">6.4</div>
<div class="t" style="left:228px;top:332px;color:#333">Com 1</div>
<div class="t" style="left:271px;top:332px;color:#333">0.5</div>
<div class="t" style="left:321px;top:332px;color:#333">0.0</div>
<div class="t" style="left:371px;top:332px;color:#333">0.0</div>
<svg style="left:51px;top:357px" width="18" height="18" viewBox="0 0 18 18"><circle cx="9" cy="9" r="8.300" fill="#7ed957" stroke="#3fb53a" stroke-width=".9"/><path d="M4.800 9.200l3 3 5.600-6" fill="none" stroke="#fff" stroke-width="2.200" stroke-linecap="round" stroke-linejoin="round"/></svg>
<div class="t" style="left:88px;top:361px;color:#333;font-size:11.9px">Plate 1</div>
<div class="t" style="left:178px;top:361px;color:#333">12.7</div>
<div class="t" style="left:228px;top:361px;color:#333">Com 1</div>
<div class="t" style="left:271px;top:361px;color:#333">39.7</div>
<div class="t" style="left:321px;top:361px;color:#333">0.0</div>
<div class="t" style="left:371px;top:361px;color:#333">0.0</div>
</div>
<div class="a" style="left:1832px;top:193px;width:17px;height:374px;background:#f0f0f0"></div>
<div class="a" style="left:1834px;top:210px;width:15px;height:149px;background:#c9c9c9"></div>
<svg style="left:1836px;top:197px" width="10" height="6"><path d="M1 5l3.500-3.500 3.500 3.500" fill="none" stroke="#777" stroke-width="1.100"/></svg>
<svg style="left:1836px;top:556px" width="10" height="6"><path d="M1 1l3.500 3.500 3.500-3.500" fill="none" stroke="#777" stroke-width="1.100"/></svg>
<div class="a" style="left:1139px;top:586px;width:24px;height:24px;border:1px solid #b0b0b0;background:linear-gradient(180deg,#f0f0f0,#d8d8d8);box-shadow:inset 0 0 0 1px #f6f6f6"></div>
<svg style="left:1139px;top:586px" width="24" height="24" viewBox="0 0 24 24" stroke="#555" stroke-width="1.200" fill="#555"><path d="M5.500 5.500l3.500 3.500M18.500 5.500l-3.500 3.500M5.500 18.500l3.500-3.500M18.500 18.500l-3.500-3.500" fill="none"/><path d="M4.800 4.800h3.200l-3.200 3.200zM19.200 4.800h-3.200l3.200 3.200zM4.800 19.200h3.200l-3.200-3.200zM19.200 19.200h-3.200l3.200-3.200z" stroke="none"/></svg>
<div class="t" style="left:24px;top:1060px;color:#8a8a8a;font-weight:bold;font-size:11.4px">Design code:</div>
<div class="t" style="left:100px;top:1060px;color:#fff;font-weight:bold;font-size:11.3px">AISC - ASD</div>
<div class="t" style="left:181px;top:1060px;color:#8a8a8a;font-weight:bold;font-size:10.8px">Analysis:</div>
<div class="t" style="left:231.5px;top:1060px;color:#fff;font-weight:bold;font-size:11.25px">Stress, strain</div>
<div class="t" style="left:323px;top:1060px;color:#8a8a8a;font-weight:bold;font-size:11.700px">Load effects:</div>
<div class="t" style="left:400px;top:1060px;color:#fff;font-weight:bold;font-size:11.700px">In equilibrium</div>
<div class="t" style="left:497px;top:1060px;color:#8a8a8a;font-weight:bold;font-size:11.700px">Units:</div>
<div class="t" style="left:537px;top:1060px;color:#fff;font-weight:bold;font-size:11.700px">mm</div>
<div class="t" style="left:1734px;top:1060px;color:#f26f21;font-size:12.3px">www.<span style="color:#fff">ideastatica</span>.com</div>
<!-- 3D model -->
<div class="a" style="left:0;top:183px;width:1130px;height:865px;overflow:hidden"><div class="a" style="left:0;top:-183px"><svg style="left:0;top:183px" width="1130" height="865" viewBox="0 183 1130 865" font-family="Liberation Sans, sans-serif"><clipPath id="c4"><path d="M176.3 394 171.5 560 167.8 670 165.9 720 164.2 898.9 202.8 879 201.9 714.5 204.4 683 212.6 405z"/></clipPath>
<g clip-path="url(#c4)">
<path d="M176.3 394 171.5 560 167.8 670 165.9 720 164.2 898.9 202.8 879 201.9 714.5 204.4 683 212.6 405z" fill="#4b0a82" stroke="#4b0a82" stroke-width=".6"/>
<path d="M205.6 414 210.2 412.9 220.2 413.2 220.2 906 158.2 906 158.2 420.1 170.2 420.8 171.2 422 176.2 423.5 190.2 423.7 194.2 422.5 202.2 415.9 205.6 414z" fill="#3c0aaa" fill-rule="evenodd"/>
<path d="M208.7 418 212.2 417 220.2 417 220.2 906 158.2 906 158.2 436 178.2 436 190.2 438.9 192.2 438.6 194.2 436.6 198.5 428 204.2 421.5 208.7 418z" fill="#1e0adc" fill-rule="evenodd"/>
<path d="M209.4 422 212.2 421 220.2 421 220.2 906 158.2 906 158.2 462 166.2 462 166.2 452 176.2 451.9 190.2 454.5 192.2 453.5 196.2 446.7 202.7 430 206.2 424.8 209.4 422z" fill="#0000ff" fill-rule="evenodd"/>
<path d="M209.9 426 212.2 425.1 220.2 425 220.2 906 158.2 906 158.2 492 164.2 492 166.2 490 174.2 489.1 178.2 488 190.2 479.9 194.2 470.4 204.5 434 206.2 430.6 209.9 426z" fill="#0a64ff" fill-rule="evenodd"/>
<path d="M209.7 432 214.2 430.1 220.2 430 220.2 906 158.2 906 158.2 509 166.2 509.1 166.9 510 170.2 510.8 174.2 510.7 186.2 503.3 190.2 499.2 192.2 494.7 198.2 473 206.2 437.6 207.7 434 209.7 432z" fill="#00beff" fill-rule="evenodd"/>
<path d="M210.2 436 212.2 435.2 220.2 435 220.2 906 158.2 906 158.2 524 170.2 523.9 176.2 522.9 186.2 517.8 188.2 516.4 190.2 513.5 196.9 492 200.2 477.8 205.2 450 206.2 446.8 210.2 444.1 209.2 440 209.2 438 210.2 436z" fill="#00e6dc" fill-rule="evenodd"/>
<path d="M214.2 442 216.2 440.1 220.2 440 220.2 906 158.2 906 158.2 539 174.2 539 184.2 534.9 188.2 532.3 190.2 528.1 199.8 492 206 454 206.8 452 210.8 450 212.2 445.3 214.2 442z" fill="#00b48c" fill-rule="evenodd"/>
<path d="M213.9 446 216.2 445 220.2 445 220.2 906 158.2 906 158.2 555 166.2 555 174.2 553.9 184.2 550.3 188.2 547.6 190.2 542.6 195.1 518 201 496 206.4 458 208.2 453.3 212.7 450 213.9 446z" fill="#00823c" fill-rule="evenodd"/>
<path d="M214.3 452 216.2 450.3 220.2 450 220.2 906 158.2 906 158.2 571 164.2 571.1 168.2 572.2 172.2 571.8 184.2 564.9 188.2 561.1 190.2 555.3 197 520 202.2 499 207.8 458 210.1 454 214.3 452zM212.2 485.7 211.2 486 212.2 487.2 212.9 486 212.2 485.7z" fill="#287d0a" fill-rule="evenodd"/>
<path d="M210.8 456 214.2 455 220.2 455 220.2 906 158.2 906 158.2 585 168.2 584.8 174.2 583.1 186.2 574.9 190.2 568 191.8 562 196.2 534 203.9 498 208.2 464.2 209.5 458 210.8 456zM210.2 484.2 208.8 486 209.1 488 210.2 488.9 214.2 488 215.2 486 214.2 485 210.2 484.2z" fill="#82b400" fill-rule="evenodd"/>
<path d="M214.2 462 220.2 461.4 220.2 844.6 202.2 845 200.9 846 200 848 193 884 204.8 906 158.2 906 158.2 597 170.2 597 174.2 595.6 184.2 588.5 188.2 583.5 193.6 566 195.9 546 206.2 491.9 208.2 489.7 210.2 490.3 214.2 489 216.9 486 216.2 484.5 214.2 483.3 208.2 482.1 207.8 480 209.5 468 210.2 466.1 214.2 462z" fill="#d8e610" fill-rule="evenodd"/>
<path d="M220.1 484 220.2 794 212.2 794 212.2 806 210.2 806.8 210.1 808 208.2 808.5 207.4 810 200.2 811.2 194 830 190.2 847.7 188.2 849.7 184.3 852 183 856 181.1 866 182.9 886 184.2 891.8 190.2 902 190.2 906 158.2 906 158.2 612 164.2 611.7 165.1 610 174.2 607.1 186.2 598.9 188.2 595.9 195.7 568 197.8 546 202.9 522 207.5 494 208.7 492 212.2 491.1 216.2 488.9 220.1 484zM208.2 537.1 207.5 542 207.5 544 208.2 544.9 208.7 544 208.2 537.1zM210.2 511.9 208.7 514 208.6 516 209.2 518 210.2 518.6 213.5 516 213.1 514 210.2 511.9z" fill="#ffee00" fill-rule="evenodd"/>
<path d="M217.2 490 220.2 488.2 220.2 764 216.2 764 214.2 766 212.2 766 212.2 776 210.2 776.6 210 778 208.2 778.4 207.3 780 204.2 781 202.2 780.1 200.2 777.3 198.2 778.6 193.4 792 192 800 178.8 824 175.7 826 166.2 829.4 158.2 830.2 158.2 640 160.2 640 160.2 636 162.2 634.1 168.2 633.9 172.2 633 182.2 628 184.6 626 185 624 184.6 622 180.1 614 179.8 612 181.3 610 188.2 605.1 190.6 602 194.5 582 197.8 570 199.9 546 204.2 527.7 205.5 526 206.2 523.2 210.2 520.8 215.8 516 215.9 514 214.1 512 212.2 510.2 208.2 508.9 207.7 508 209.4 496 210.2 493.8 217.2 490zM204.2 727.6 202.2 736 202.8 738 204.2 739.2 206 738 206.5 736 204.2 727.6zM208.2 528.5 206.4 532 205.7 542 206.2 544.7 208.2 546.5 209.8 544 209.8 542 209.7 536 208.2 528.5z" fill="#ffc800" fill-rule="evenodd"/>
<path d="M218.2 516 220.2 514.4 220.2 726 218.2 726 216.2 728 214.2 728 214.2 726 212.2 725.1 212.1 724 210.2 723.6 209.4 722 208.2 721.8 204.2 717.6 202.2 722 199.5 738 202.2 742.3 204.2 743.7 208.2 744.7 214.2 744 214.2 742 218.2 746 214.2 746 213.8 748 212.2 749.2 211.2 752 209.4 754 206.2 756.3 204.2 756.6 202.9 756 201.4 754 201.1 752 202.8 748 202.2 746.9 200.2 747.9 196.2 758.7 190.2 762 182.5 770 182 772 183 786 182.2 788.2 178.2 789.2 164.2 789.4 158.2 788 158.2 674 160.2 674 160.2 666 162.2 664.3 168.2 663.9 174.2 661.7 184.2 655.8 186.2 651.9 188.2 644.3 191.2 626 190.9 622 187.5 616 187.2 614 192.2 608.8 193.9 604 196.6 584 199.9 572 202.4 546 204.2 542.9 205 546 206.2 546.9 208.2 547.6 210.2 546 211.2 536 210.2 524 211.3 522 218.2 516zM206.2 634.2 205 640 206.2 642.4 207.6 640 206.2 634.2z" fill="#ffaa00" fill-rule="evenodd"/>
<path d="M217.8 532 218.2 530 220.2 530 220.2 717 212.2 717.1 208.2 717.9 206.2 715.3 204.2 701.1 202.2 705.5 200.2 714.1 198.2 717.5 196.2 717 194.2 714.8 184.2 702 185.5 682 186.4 678 192.2 673.4 193.3 670 193 662 191.5 652 195.2 624 194.3 616 196.2 610 199.5 584 202 574 204.7 550 210.2 547.8 211.5 546 212.2 538.8 214.2 534.9 215.9 534 216.2 532.3 217.8 532zM206.2 624.3 203.8 640 204.3 642 206.2 643.7 208.2 642.8 208.9 640 206.2 624.3zM177.6 712 178.2 711.1 180.2 710.9 180.2 712.1 173.1 738 173.3 740 179.8 748 180.1 750 176.6 752 168.2 754.8 158.2 755 158.2 719.8 165.6 720 170.2 721.2 177.6 712z" fill="#ff7800" fill-rule="evenodd"/>
<path d="M210.2 556 214.2 554.1 220.2 554 220.2 684 214.2 684 204.2 675.4 202.2 675.5 200.2 672 196.1 652 199.1 624 200.2 606.1 204.4 578 205.4 566 206.2 562.1 208.2 558.2 209.1 558 210.2 556zM206.2 596.1 205 600 204.2 608 202.7 640 202.9 642 206.2 645.6 208.2 645.4 210.5 642 209 634 206.2 596.1z" fill="#ff4600" fill-rule="evenodd"/>
<path d="M176.3 394L212.6 405M175.9 406.6L212.3 416.9M175.6 419.2L211.9 428.7M175.2 431.9L211.6 440.6M174.8 444.5L211.2 452.4M174.5 457.1L210.9 464.3M174.1 469.7L210.5 476.1M173.7 482.4L210.2 488M173.4 495L209.8 499.8M173 507.6L209.5 511.7M172.7 520.2L209.1 523.5M172.3 532.8L208.8 535.4M171.9 545.5L208.4 547.2M171.6 558.1L208.1 559.1M171.1 570.7L207.7 570.9M170.7 583.3L207.4 582.8M170.3 595.9L207 594.6M169.9 608.6L206.7 606.5M169.4 621.2L206.3 618.3M169 633.8L206 630.2M168.6 646.4L205.6 642M168.2 659L205.3 653.9M167.7 671.7L204.9 665.7M167.3 684.3L204.6 677.6M166.8 696.9L203.9 689.4M166.3 709.5L203 701.2M165.9 722.1L202 713M165.8 734.8L202 724.9M165.6 747.4L202 736.7M165.5 760L202.1 748.6M165.4 772.6L202.2 760.4M165.3 785.3L202.2 772.3M165.2 797.9L202.3 784.2M165 810.5L202.3 796M164.9 823.1L202.4 807.9M164.8 835.8L202.5 819.7M164.7 848.4L202.5 831.6M164.6 861L202.6 843.4M164.4 873.6L202.7 855.3M164.3 886.3L202.7 867.1M164.2 898.9L202.8 879M176.3 394L171.6 558.1L165.9 722.1L164.2 898.9M188.4 397.7L180.5 657.3L179.7 682L177.9 719.1L177.1 892.3M200.5 401.3L192.1 679.8L190 716.1L189.9 885.6M212.6 405L204.6 677.6L202 713L202.8 879" fill="none" stroke="#000" stroke-opacity="0.6" stroke-width="0.6"/>
</g>
<clipPath id="c5"><path d="M212.6 405 204.4 683 201.9 706 270.5 722 272.2 702 279.6 520 283 429z"/></clipPath>
<g clip-path="url(#c5)">
<path d="M212.6 405 204.4 683 201.9 706 270.5 722 272.2 702 279.6 520 283 429z" fill="#00e6dc" stroke="#00e6dc" stroke-width=".6"/>
<path d="M231.6 399 289.9 399 289.9 728 195.9 728 195.9 686 199.9 686 199.9 695 200.9 695.9 202.9 695.2 203.9 693.5 203.9 691 204.9 689.4 205.2 687 205.6 678 205.1 672 206.9 642.4 208.9 585.4 210.3 518 211.7 496 211.2 492 211.9 488.1 213 465 216.5 443 220.9 422 221.1 417 220.3 415 223.9 414.2 228.9 409.2 230.6 405 231.6 399zM206.9 443 208.9 443 208.9 463 207.9 464 207.9 490 206.9 492 205.9 491 200.9 491 199.9 490 195.9 490 195.9 445 202.9 445 206.9 443zM205.9 507 206.9 507 206.9 516 205.9 517 205.9 542 204.9 543 204.9 568 203.9 569 203.9 594 202.9 595 202.9 613 201.9 612 195.9 612 195.9 509 204.9 508 205.9 507zM195.9 627 201.9 627 201.9 647 200.9 648 200.9 673 195.9 673 195.9 627z" fill="#00b48c" fill-rule="evenodd"/>
<path d="M232.3 399 289.9 399 289.9 728 202.7 728 208.6 706 208.8 703 208.8 702 205.8 700 205 698 206.2 691 211.6 520 214.7 467 219.9 436.7 223.3 422 223.9 420.4 226.7 418 226 415 227.9 413.8 228.9 411.8 231.1 406 232.3 399z" fill="#00823c" fill-rule="evenodd"/>
<path d="M232.9 399 289.9 399 289.9 728 203.2 728 209 707 209.6 702 207.3 699 206.7 697 207.4 693 206.9 689 212.3 520 215.1 480 216.8 465 220.8 448 225.3 433 229.4 423 232.3 419 230.5 416 230.4 411 232.7 402 232.9 399z" fill="#287d0a" fill-rule="evenodd"/>
<path d="M235.9 399 289.9 399 289.9 728 203.6 728 209.4 707 209.8 703 211 701 208.5 697 208.7 693 207.5 689 212.8 521 214.6 501 216.6 481 219.4 464 223.8 450 229 437 239.8 418 238.9 415 237.9 414 235.9 414 233.9 413 233.9 410 234.9 409 234.9 406 235.9 405 235.9 399z" fill="#82b400" fill-rule="evenodd"/>
<path d="M246.9 399 289.9 399 289.9 728 204.2 728 206.9 719 210.2 704 210.9 702.7 212.9 703.3 214.4 703 210.3 696 208.1 689 213.4 521 217.9 483 221.6 466 227.6 452 236.4 435 246.7 419 245.9 416 245.9 407 246.9 406 246.9 399z" fill="#d8e610" fill-rule="evenodd"/>
<path d="M257.9 399 289.9 399 289.9 728 207.9 728 207.9 726 209.9 722 209.9 719 210.9 718 210.9 715 211.9 714 211.9 711 212.9 710 212.9 708 214.9 708 215.9 709 217.9 709 218.9 710 220.9 710 221.9 711 223.9 711 224.9 712 226.9 712 230.9 714 234.9 714 235 713 234.3 710 217.9 703 212.8 696 209 689 214 521 218.9 486.6 219.9 480.9 224.9 466.4 232.9 451.2 241.9 435.8 254.4 422 254.9 419 253.9 419 254.9 418 254.9 415 255.9 414 255.9 410 256.9 409 256.9 406 257.9 405 257.9 399z" fill="#ffee00" fill-rule="evenodd"/>
<path d="M270.9 399 289.9 399 289.9 714.6 269.9 713 245.9 709.3 221.9 700.9 219.9 699.9 218.3 698 210.9 687.8 210.1 685 214.7 521 221.4 483 228.3 467 237.9 451 249.8 437 260.6 427 261.9 422.9 263.9 422 264.9 417 266.9 414 266.9 412 267.9 411 267.9 409 268.9 408 268.9 406 270.9 402 270.9 399z" fill="#ffc800" fill-rule="evenodd"/>
<path d="M275.4 399 289.9 399 289.9 713.3 275.9 710.5 271.9 710.4 244.9 705.9 221.9 697.8 219.9 696 212.8 686 210.8 680 215.5 521 223.1 483 231.5 466 239.9 453.9 253.5 439 266.9 427.9 275.4 399z" fill="#ffaa00" fill-rule="evenodd"/>
<path d="M278.9 399 289.9 399 289.9 709 286.9 709 285.9 708 274.9 707.5 245.9 703.1 222.9 695.1 215.8 686 212 679 216.5 521 224.7 483 234 466 244.9 453 257.1 441 271.2 430 272.9 427.3 273.9 427 273.9 426 275.9 426 274.9 425 272.9 425 272.9 421 273.9 420 273.9 418 275.9 414 275.9 411 276.9 410 276.9 408 278.9 404 278.9 399z" fill="#ff7800" fill-rule="evenodd"/>
<path d="M289.9 424 289.9 704.5 272.9 704.4 244.9 699.9 224.9 691.8 223 690 214.4 678 212.9 673 212.8 670 217.1 529 218 520 226.5 482 235.8 467 252.9 448.6 267.9 440 277.9 436.7 280.9 435 280.9 434.4 283.9 434 282.9 432 283.9 430 289.9 424z" fill="#ff4600" fill-rule="evenodd"/>
<path d="M289.9 441 289.9 701.5 274.9 701.5 244.9 696.8 227.9 688.9 224.9 686.6 214.4 672 214.2 660 218.1 531 222.9 504.5 228 483 238.9 466.6 254.8 451 268.9 446.7 284.9 442.9 286.9 443 289.9 441z" fill="#ff0a00" fill-rule="evenodd"/>
<path d="M280.5 450 289.9 449.5 289.9 698.5 272.9 698.4 243.9 693 226.9 683.7 217.9 671.9 215.8 666 215.6 663 219.5 530 225.1 507 231.7 484 233.6 480 242.4 469 248.1 463 256.9 456.5 265.9 452.8 280.5 450zM272.9 681.5 272.3 685 272.9 686.3 273.6 685 272.9 681.5zM273.9 660.6 273.9 662.6 273.9 660.6z" fill="#dc0000" fill-rule="evenodd"/>
<path d="M286.9 453 289.9 453 289.9 695 275.9 695 274.9 694 246.1 689 240.2 686 228.9 678.9 221.9 670.1 219.1 665 218.9 632.1 221.9 533.6 223.9 524.2 229.9 505.2 236.9 484.9 239.9 480 249.9 468.6 253 466 265.9 458.9 281.4 456 285.9 456.5 286.9 456 286.9 453zM274.9 611.9 274.4 617 275.9 617.8 276.8 617 276.7 614 275.9 611 274.9 611.9zM279.9 523.7 278.8 525 278.9 526 279.9 526.3 279.9 523.7zM274.9 632.8 273.8 634 273.2 639 273.9 640.8 274.9 640.9 276 639 274.9 632.8zM278.9 545.5 277.8 547 277.9 548 278.9 548.3 278.9 545.5zM273.9 654.6 272.8 656 272.2 662 272.9 663.9 273.9 664 275.1 662 273.9 654.6zM277.9 567.3 276.9 568.3 276.6 570 276.9 571.3 277.9 571.6 278.6 570 277.9 567.3zM273.9 674.6 272.9 675.1 271.6 678 271 686 272.9 688.6 274.9 689 275.9 690 276.9 689 276.9 676 273.9 674.6zM276.9 589.2 275.9 590.1 275.4 593 275.9 594.5 276.9 594.7 277.8 593 276.9 589.2z" fill="#b40000" fill-rule="evenodd"/>
<path d="M212.6 405L283 429M212 425.1L282.3 448.5M211.4 445.2L281.5 468.1M210.8 465.2L280.8 487.6M210.2 485.3L280.1 507.2M209.6 505.4L279.3 526.7M209 525.5L278.5 546.2M208.5 545.5L277.7 565.8M207.9 565.6L276.9 585.3M207.3 585.7L276.2 604.8M206.7 605.8L275.4 624.4M206.1 625.8L274.6 643.9M205.5 645.9L273.8 663.4M204.9 666L273 683M204.1 686L272.2 702.5M201.9 706L270.5 722M212.6 405L204.9 666L204.1 686L201.9 706M224.3 409L216.2 668.8L215.4 688.8L213.3 708.7M236.1 413L227.6 671.6L226.8 691.5L224.8 711.3M247.8 417L238.9 674.5L238.1 694.3L236.2 714M259.5 421L250.3 677.3L249.5 697L247.6 716.7M271.3 425L261.6 680.1L260.8 699.8L259.1 719.3M283 429L279.3 526.7L272.2 702.5L270.5 722" fill="none" stroke="#000" stroke-opacity="0.6" stroke-width="0.6"/>
</g>
<clipPath id="c6"><path d="M201.9 700 202.8 879 268.6 898 270 737 270.3 720z"/></clipPath>
<g clip-path="url(#c6)">
<path d="M201.9 700 202.8 879 268.6 898 270 737 270.3 720z" fill="#1e0adc" stroke="#1e0adc" stroke-width=".6"/>
<path d="M195.9 694 244.3 694 244.3 719.5 249.9 739.5 251.4 742.4 259.2 719.5 259.2 694 276.9 694 276.9 904 195.9 904 195.9 694zM249.9 813.4 249 836.5 249.9 859.5 251.4 853.9 252.1 833.5 251.4 812.9 249.9 813.4z" fill="#0000ff" fill-rule="evenodd"/>
<path d="M195.9 694 235.9 694 236.1 721 246.1 760 243.7 833.5 245.3 904 195.9 904 195.9 694zM265.2 694 276.9 694 276.9 904 255.1 904 257.4 833.5 255.8 760 258.9 749.8 265 721 265.2 694z" fill="#0a64ff" fill-rule="evenodd"/>
<path d="M195.9 694 231.1 694 231.5 724 234.3 746.5 237.4 760 237 904 195.9 904 195.9 694zM270.6 721 270.9 719.5 276.9 719.5 276.9 904 261.4 904 262.4 760 270.6 721z" fill="#00beff" fill-rule="evenodd"/>
<path d="M195.9 694 226.5 694 226.6 721 229.5 760 229.4 904 195.9 904 195.9 694zM270.3 748 270.9 746.7 276.9 746.7 276.9 904 266.3 904 267.5 760 270.3 748z" fill="#00e6dc" fill-rule="evenodd"/>
<path d="M195.9 694 222.4 694 222.9 904 195.9 904 195.9 694z" fill="#00b48c" fill-rule="evenodd"/>
<path d="M195.9 694 218.4 694 218.5 721 217.1 760 217.3 904 195.9 904 195.9 694z" fill="#00823c" fill-rule="evenodd"/>
<path d="M195.9 694 214.6 694 214.6 721 211.8 760 212.1 904 195.9 904 195.9 694z" fill="#287d0a" fill-rule="evenodd"/>
<path d="M195.9 694 210.9 694 211 719.5 208.1 760 208.5 904 195.9 904 195.9 694z" fill="#82b400" fill-rule="evenodd"/>
<path d="M195.9 694 208 694 208 721 204.2 760 204.8 904 195.9 904 195.9 694z" fill="#d8e610" fill-rule="evenodd"/>
<path d="M195.9 694 205.1 694 205.1 719.5 201.9 746.7 195.9 746.7 195.9 694z" fill="#ffee00" fill-rule="evenodd"/>
<path d="M201.9 700L270.3 720M202 714.9L270.2 734.8M202.1 729.8L270 749.7M202.1 744.8L269.9 764.5M202.2 759.7L269.7 779.3M202.3 774.6L269.6 794.2M202.4 789.5L269.5 809M202.4 804.4L269.3 823.8M202.5 819.3L269.2 838.7M202.6 834.2L269 853.5M202.7 849.2L268.9 868.3M202.7 864.1L268.7 883.2M202.8 879L268.6 898M201.9 700L202.8 879M213.3 703.3L213.8 882.2M224.7 706.7L224.7 885.3M236.1 710L235.7 888.5M247.5 713.3L246.7 891.7M258.9 716.7L257.6 894.8M270.3 720L268.6 898" fill="none" stroke="#000" stroke-opacity="0.6" stroke-width="0.6"/>
</g>
<clipPath id="c7"><path d="M283.5 428 302 417.5 304.5 417 303.3 431 301.2 482 293.6 665 290.5 740 270 737 272.2 702 279.6 520z"/></clipPath>
<g clip-path="url(#c7)">
<path d="M283.5 428 302 417.5 304.5 417 303.3 431 301.2 482 293.6 665 290.5 740 270 737 272.2 702 279.6 520z" fill="#1e0adc" stroke="#1e0adc" stroke-width=".6"/>
<path d="M264 411 310.8 411 310.8 747 264 747 264 508 279.6 507.9 279.7 497.4 283.3 485.4 283.9 480.6 283.5 475.8 281.4 468.6 280.3 461.4 281.4 455.4 284.5 445.8 284.4 438.6 283.2 438.6 280.8 441 279.6 441 273.6 444.6 272.4 444.6 268.8 447 267.6 447 265.2 449.4 264 449.4 264 411z" fill="#0000ff" fill-rule="evenodd"/>
<path d="M264 411 310.8 411 310.8 747 264 747 264 524 279.6 524 280.8 523.5 282.2 520.2 283 514.2 281.2 503.4 281.2 498.6 285.6 484.2 285.8 480.6 285.6 476.4 283.3 468.6 282.5 461.4 283.3 456.6 286.5 447 287 442.2 286.4 437.4 285.6 437.3 284.4 438.5 283.2 438.5 280.8 440.9 277.2 442.1 273.6 444.5 272.4 444.5 268.8 446.9 267.6 446.9 265.2 449.3 264 449.3 264 411z" fill="#0a64ff" fill-rule="evenodd"/>
<path d="M264 411 310.8 411 310.8 424.1 309.6 424.1 307.2 426.5 306 426.5 304.8 427.7 301.2 429 300.9 430.2 303.1 438.6 303.4 443.4 302.4 448.2 298.9 457.8 298.2 462.6 301 480.6 295.8 499.8 296.6 504.6 300.3 516.6 300 526.7 310.8 526.7 310.8 747 264 747 264 539.8 276 539.8 277.2 539.3 284.5 521.4 284.7 514.2 282.6 505.8 282 499.8 282.7 495 286 485.4 286.7 479.4 283.7 466.2 283.5 461.4 283.9 457.8 288 445.1 288.2 442.2 287.5 437.4 285.6 437.2 284.4 438.4 283.2 438.3 280.8 440.7 279.6 440.7 273.6 444.3 272.4 444.3 268.8 446.7 267.6 446.7 265.2 449.1 264 449.1 264 411z" fill="#00beff" fill-rule="evenodd"/>
<path d="M264 411 310.8 411 310.8 424 309.6 424 307.2 426.4 306 426.4 300 430.1 298.8 430.2 300.6 438.6 300.8 443.4 296.4 457.8 295.7 462.6 298.6 480.6 293.5 499.8 294 504.6 296.6 514.2 296.9 519 292.7 537 293.5 540.6 297.6 544.7 310.8 545 310.8 747 264 747 264 548 278.4 548 280.8 545.4 281.1 534.6 285 522.6 285.7 517.8 285.2 513 282.8 503.4 282.6 498.6 286.5 485.4 287.3 480.6 286.9 475.8 284.4 466.2 284.1 461.4 285 456.6 288.2 447 288.8 442.2 288 436.6 285.6 437.1 284.4 438.2 283.2 438.2 280.8 440.6 279.6 440.6 273.6 444.2 272.4 444.2 268.8 446.6 267.6 446.6 265.2 449 264 449 264 411z" fill="#00e6dc" fill-rule="evenodd"/>
<path d="M264 411 310.8 411 310.8 423.9 309.6 423.9 307.2 426.3 306 426.3 304.8 427.5 303.6 427.5 302.4 428.7 301.2 428.7 300 430 296.7 431.4 298.5 438.6 298.8 443.4 297.8 448.2 294.4 457.8 293.7 462.6 296.6 480.6 295.7 485.4 292.3 495 291.5 499.8 291.8 504.6 293.8 513 294 519 293.4 522.6 289.2 533.4 288.4 539.4 290.4 546.8 295.2 552.7 300 555 310.8 555 310.8 747 264 747 264 556 280.8 555.8 283.2 554.9 284 552.6 282.3 535.8 285.9 522.6 286.5 517.8 283.1 499.8 287.9 480.6 287.4 475.8 284.9 466.2 284.6 461.4 285.5 456.6 288.7 447 289.3 442.2 288 436.1 284.4 438.1 283.2 438.1 280.8 440.5 279.6 440.5 271.2 445.3 270 445.3 268.8 446.5 267.6 446.5 265.2 448.9 264 448.9 264 411z" fill="#00b48c" fill-rule="evenodd"/>
<path d="M264 411 310.8 411 310.8 423.8 309.6 423.8 307.2 426.2 306 426.1 302.4 428.6 301.2 428.6 300 429.9 296.4 431.2 295.2 432.6 297 439.8 297.1 443.4 295.8 449.4 292.8 457.2 292.2 462.6 292.8 468.6 294.8 475.8 295 481.8 290.1 499.8 292.9 517.8 292 522.6 287.7 533.4 285.6 540.9 284.4 536.4 284.4 532.2 287.1 521.4 287.4 517.8 283.7 499.8 284.4 495 288.3 481.8 288.2 477 285.1 462.6 285.7 457.8 289.5 445.8 289.5 438.6 289 436.2 288 435.9 286.8 436.9 285.6 436.8 284.4 438 283.2 438 280.8 440.4 277.2 441.6 273.6 444 272.4 444 268.8 446.4 267.6 446.4 265.2 448.8 264 448.8 264 411zM264 567 264 566.2 310.8 566.2 310.8 747 264 747 264 567z" fill="#00823c" fill-rule="evenodd"/>
<path d="M264 411 310.8 411 310.8 423.7 309.6 423.7 307.2 426.1 306 426 300 429.7 298.8 429.8 297.6 431 296.4 431.1 294.7 433.8 296.1 439.8 296 444.6 292.3 456.6 291.3 462.6 294.2 477 294.3 481.8 290.2 495 289.5 499.8 291.9 517.8 290.9 522.6 288 529.3 287.4 528.6 288.5 517.8 284.2 499.8 285.3 493.8 288.9 481.8 288.6 475.8 285.7 462.6 286.6 456.6 290.2 444.6 289.6 436.2 288 435.7 284.4 437.9 283.2 437.8 280.8 440.2 279.6 440.2 273.6 443.8 272.4 443.8 268.8 446.2 267.6 446.2 265.2 448.6 264 448.6 264 411zM264 579 310.8 578.8 310.8 747 264 747 264 579z" fill="#287d0a" fill-rule="evenodd"/>
<path d="M264 411 310.8 411 310.8 423.6 309.6 423.6 307.2 425.9 306 425.9 300 429.6 296.4 430.9 294 433.8 295.4 439.8 295.4 444.6 291.3 457.8 290.6 462.6 293.5 477 293.6 481.8 289.6 495 288.8 499.8 291 514.2 290.4 520.2 289.7 515.4 285.9 504.6 285.1 499.8 285.8 495 289 485.4 289.8 480.6 286.5 462.6 286.9 457.8 291 444.6 290.2 436.2 288 435.5 286.8 436.6 285.6 436.6 284.4 437.7 283.2 437.7 280.8 440.1 277.2 441.3 273.6 443.7 272.4 443.7 268.8 446.1 267.6 446.1 265.2 448.5 264 448.5 264 411zM264 591 264 590 310.8 590 310.8 747 264 747 264 591z" fill="#82b400" fill-rule="evenodd"/>
<path d="M264 411 310.8 411 310.8 423.5 309.6 423.5 307.2 425.8 306 425.8 300 429.5 296.4 430.7 293.4 433.8 294.7 439.8 294.7 444.6 290.6 457.8 290 462.6 293.1 480.6 292.2 485.4 288.8 495 288 506.8 286.6 502.2 286.3 498.6 290.4 484.2 290.9 479.4 287.9 466.2 287.6 461.4 292 444.6 291.3 436.2 290.4 434.8 288 435.3 284.4 437.6 283.2 437.6 280.8 440 279.6 440 273.6 443.6 272.4 443.6 268.8 446 267.6 446 265.2 448.4 264 448.4 264 411zM264 600.6 264 600 310.8 600 310.8 747 264 747 264 600.6z" fill="#d8e610" fill-rule="evenodd"/>
<path d="M264 411 310.8 411 310.8 423.4 309.6 423.4 307.2 425.7 306 425.6 300 429.4 296.4 430.5 292.7 433.8 292.8 437.7 292.2 435 290.4 434.3 289.2 435.3 288 435.2 284.4 437.5 283.2 437.5 280.8 439.9 277.2 441.1 273.6 443.5 272.4 443.5 268.8 445.9 267.6 445.9 265.2 448.3 264 448.3 264 411zM293.7 439.8 294 444.9 293.7 439.8zM292.8 447 292.8 449.6 292.8 447zM291.2 451.8 291.6 450.8 291.6 452.7 291.2 451.8zM290.4 454.2 290.4 456.2 290.4 454.2zM289 459 289.2 466.7 289 459zM290.3 469.8 290.4 471.2 290.3 469.8zM291.4 474.6 291.6 475.7 291.4 474.6zM264 613.8 264 612.7 310.8 612.7 310.8 747 264 747 264 613.8z" fill="#ffee00" fill-rule="evenodd"/>
<path d="M289 411 310.8 411 310.8 423.3 309.6 423.3 307.2 425.6 303.6 426.7 300 429.2 296.4 430.4 294 432.7 291.6 434 290.4 433.9 289 435 289 411zM264 628.2 264 627.4 310.8 627.4 310.8 747 264 747 264 628.2z" fill="#ffc800" fill-rule="evenodd"/>
<path d="M296.7 411 302.8 411 302.8 426.6 302.4 427.8 301.2 427.9 297.6 430.2 296.7 430.2 296.7 411zM306.4 411 310.8 411 310.8 423.2 309.6 423.2 307.2 425.5 306.4 425.4 306.4 411zM264 640.2 264 639.1 310.8 639.1 310.8 747 264 747 264 640.2z" fill="#ffaa00" fill-rule="evenodd"/>
<path d="M264 652.2 264 651.7 310.8 651.7 310.8 747 264 747 264 652.2z" fill="#ff7800" fill-rule="evenodd"/>
<path d="M264 665.4 310.8 665.1 310.8 747 264 747 264 665.4z" fill="#ff4600" fill-rule="evenodd"/>
<path d="M264 682.2 264 681.7 310.8 681.7 310.8 747 264 747 264 682.2z" fill="#ff0a00" fill-rule="evenodd"/>
<path d="M264 701.4 310.8 701.4 310.8 747 264 747 264 701.4z" fill="#dc0000" fill-rule="evenodd"/>
<path d="M264 732.6 264 731.7 310.8 731.7 310.8 747 264 747 264 732.6z" fill="#b40000" fill-rule="evenodd"/>
<path d="M283.5 431L303.3 431M283 442.8L302.8 442.9M282.5 454.5L302.3 454.8M282 466.3L301.8 466.7M281.4 478.1L301.3 478.5M280.9 489.8L300.9 490.4M280.4 501.6L300.4 502.3M279.9 513.4L299.9 514.2M279.4 525.2L299.4 526.1M278.9 536.9L298.9 538M278.4 548.7L298.4 549.8M278 560.5L297.9 561.7M277.5 572.2L297.4 573.6M277 584L296.9 585.5M276.5 595.8L296.4 597.4M276 607.6L295.9 609.3M275.6 619.3L295.4 621.2M275.1 631.1L294.9 633M274.6 642.9L294.4 644.9M274.1 654.6L293.9 656.8M273.6 666.4L293.4 668.7M273.2 678.2L293 680.6M272.7 690L292.5 692.5M272.2 701.7L292 704.3M271.5 713.5L291.5 716.2M270.7 725.2L291 728.1M270 737L290.5 740M283.5 431L272.2 701.7L270 737M290.1 431L278.8 702.6L276.8 738M296.7 431L285.4 703.5L283.7 739M303.3 431L290.5 740" fill="none" stroke="#000" stroke-opacity="0.6" stroke-width="0.5"/>
</g>
<clipPath id="c8"><path d="M270 733 318 712 343.3 712 343.3 898.3 268.6 926.5z"/></clipPath>
<g clip-path="url(#c8)">
<path d="M270 733 318 712 343.3 712 343.3 898.3 268.6 926.5z" fill="#ffee00" stroke="#ffee00" stroke-width=".6"/>
<path d="M262.6 706 349.6 706 349.6 768.4 325.5 800.5 297.2 899.5 292.4 925 292.3 932.5 262.6 932.5 262.6 706z" fill="#ffc800" fill-rule="evenodd"/>
<path d="M262.6 706 314.4 706 314.2 737.5 307.4 770.5 297.1 797.4 295.6 803.5 282.1 901 280.6 917.5 280.2 932.5 262.6 932.5 262.6 706z" fill="#ffaa00" fill-rule="evenodd"/>
<path d="M262.6 706 306.7 706 306.6 737.5 300.9 770.5 291.7 800.5 280.6 895 278 932.5 262.6 932.5 262.6 706z" fill="#ff7800" fill-rule="evenodd"/>
<path d="M262.6 706 300.9 706 300.8 737.5 296.3 769 288.1 800.5 278.3 899.5 276.5 932.5 262.6 932.5 262.6 706z" fill="#ff4600" fill-rule="evenodd"/>
<path d="M262.6 706 296.4 706 296.3 737.5 292.1 770.5 285.4 800.5 276.9 899.5 275.3 932.5 262.6 932.5 262.6 706z" fill="#ff0a00" fill-rule="evenodd"/>
<path d="M262.6 706 291.3 706 291.2 737.5 287.8 770.5 282.3 800.5 275.3 899.5 274 932.5 262.6 932.5 262.6 706z" fill="#dc0000" fill-rule="evenodd"/>
<path d="M275.3 706 281.5 706 281.4 737.5 279.5 770.5 276.4 800.5 271.3 932.5 270 932.5 272.7 800.5 275.3 737.5 275.3 706z" fill="#b40000" fill-rule="evenodd"/>
<path d="M270 737L343.3 712M269.9 752.8L343.3 727.5M269.8 768.6L343.3 743M269.6 784.4L343.3 758.6M269.5 800.2L343.3 774.1M269.4 816L343.3 789.6M269.3 831.8L343.3 805.1M269.2 847.5L343.3 820.7M269.1 863.3L343.3 836.2M269 879.1L343.3 851.7M268.8 894.9L343.3 867.2M268.7 910.7L343.3 882.8M268.6 926.5L343.3 898.3M270 737L268.6 926.5M282.2 732.8L281.1 921.8M294.4 728.7L293.5 917.1M306.6 724.5L306 912.4M318.9 720.3L318.4 907.7M331.1 716.2L330.9 903M343.3 712L343.3 898.3" fill="none" stroke="#000" stroke-opacity="0.6" stroke-width="0.6"/>
</g>
<clipPath id="c9"><path d="M170.2 704 198.9 686.3 270 699.6 270 737z"/></clipPath>
<g clip-path="url(#c9)">
<path d="M170.2 704 198.9 686.3 270 699.6 270 737z" fill="#1e0adc" stroke="#1e0adc" stroke-width=".6"/>
<path d="M219.5 680.3 276.7 680.3 276.7 723.1 268.6 725.3 264.7 728.8 257.2 727.7 254.2 728.2 253.6 732.8 249.2 743.3 225.7 743.3 230.9 723.8 231.7 722.5 235.5 720.8 227.2 716.1 224.4 713.3 224.6 702.8 222 698.3 220.9 693.8 218.2 691.3 217.6 689.3 219.5 680.3zM236.2 721.6 235.5 722.3 238.6 722.3 236.2 721.6z" fill="#0000ff" fill-rule="evenodd"/>
<path d="M234.2 702.8 237.7 702.1 251.2 702 263.2 705.5 267.4 710.3 270.7 709.9 276.7 711.2 276.7 720.5 270.7 721.7 268.2 720.8 266.2 718.4 263.2 722 260.2 722.4 239.2 717.1 234.4 714.8 231.3 711.8 231 708.8 231.7 706 234.2 702.8z" fill="#0a64ff" fill-rule="evenodd"/>
<path d="M243.3 707.3 251.2 707.2 255.3 710.3 257.9 713.3 255.7 713.8 249.7 712.1 240.7 711.9 239.4 710.3 239.9 708.8 243.3 707.3zM271.7 716.3 272.2 715.2 273.7 715 276.7 715.6 276.7 716.9 273.7 717.9 272.1 717.8 271.7 716.3z" fill="#00beff" fill-rule="evenodd"/>
<path d="M142.6 749L270.1 791.1M143.4 746.8L270.9 788.8M144.1 744.5L271.6 786.6M144.8 742.3L272.3 784.4M145.6 740.1L273.1 782.2M146.3 737.9L273.8 780M147 735.7L274.5 777.8M147.8 733.5L275.3 775.5M148.5 731.2L276 773.3M149.2 729L276.7 771.1M149.9 726.8L277.5 768.9M150.7 724.6L278.2 766.7M151.4 722.4L278.9 764.5M152.1 720.2L279.7 762.2M152.9 717.9L280.4 760M153.6 715.7L281.1 757.8M154.3 713.5L281.9 755.6M155.1 711.3L282.6 753.4M155.8 709.1L283.3 751.2M156.5 706.9L284 748.9M157.3 704.6L284.8 746.7M158 702.4L285.5 744.5M158.7 700.2L286.2 742.3M159.5 698L287 740.1M160.2 695.8L287.7 737.9M160.9 693.6L288.4 735.6M161.6 691.3L289.2 733.4M162.4 689.1L289.9 731.2M163.1 686.9L290.6 729M163.8 684.7L291.4 726.8M164.6 682.5L292.1 724.6M165.3 680.3L292.8 722.3M166 678L293.6 720.1M166.8 675.8L294.3 717.9M167.5 673.6L295 715.7M168.2 671.4L295.7 713.5M169 669.2L296.5 711.3M169.7 667L297.2 709M170.4 664.7L297.9 706.8M171.2 662.5L298.7 704.6M171.9 660.3L299.4 702.4M172.6 658.1L300.1 700.2M173.4 655.9L300.9 698M174.1 653.7L301.6 695.7M174.8 651.4L302.3 693.5M175.5 649.2L303.1 691.3M176.3 647L303.8 689.1M177 644.8L304.5 686.9M177.7 642.6L305.3 684.7M178.5 640.4L306 682.4M179.2 638.1L306.7 680.2M179.9 635.9L307.5 678M180.7 633.7L308.2 675.8M181.4 631.5L308.9 673.6M182.1 629.3L309.6 671.4M182.9 627.1L310.4 669.1M183.6 624.8L311.1 666.9M184.3 622.6L311.8 664.7M136.3 687L250.7 616.7M138.4 690.5L252.8 620.1M140.5 693.9L254.9 623.5M142.7 697.3L257 626.9M144.8 700.7L259.1 630.4M146.9 704.2L261.2 633.8M149 707.6L263.3 637.2M151.1 711L265.5 640.7M153.2 714.5L267.6 644.1M155.3 717.9L269.7 647.5M157.4 721.3L271.8 650.9M159.5 724.7L273.9 654.4M161.6 728.2L276 657.8M163.8 731.6L278.1 661.2M165.9 735L280.2 664.7M168 738.5L282.3 668.1M170.1 741.9L284.4 671.5M172.2 745.3L286.6 674.9M174.3 748.7L288.7 678.4M176.4 752.2L290.8 681.8M178.5 755.6L292.9 685.2M180.6 759L295 688.7M182.7 762.5L297.1 692.1M184.8 765.9L299.2 695.5M187 769.3L301.3 698.9M189.1 772.7L303.4 702.4M191.2 776.2L305.5 705.8M193.3 779.6L307.6 709.2M195.4 783L309.8 712.7M197.5 786.5L311.9 716.1M199.6 789.9L314 719.5M201.7 793.3L316.1 722.9M203.8 796.7L318.2 726.4" fill="none" stroke="#000" stroke-opacity="0.55" stroke-width="0.45"/>
</g>
<path d="M170.2 704L270 737l0 2.3L170 706.3z" fill="#2408b0"/><path d="M205 684.500L270 698" stroke="#3c0aaa" stroke-width="2" fill="none"/>
<clipPath id="c10"><path d="M302 417.5 357.3 386.5 357.3 403 331 428.5 323.7 572 323 587 317.7 714.7 293.5 740.3 290.5 740 293.6 665 301.2 482 303.3 431z"/></clipPath>
<g clip-path="url(#c10)">
<path d="M302 417.5 357.3 386.5 357.3 403 331 428.5 323.7 572 323 587 317.7 714.7 293.5 740.3 290.5 740 293.6 665 301.2 482 303.3 431z" fill="#0000ff" stroke="#0000ff" stroke-width=".6"/>
<path d="M284.5 380.5 363.5 380.5 363.5 395.3 360.5 396.3 358.5 398.3 349.5 402.3 345.7 405.5 345.7 410.5 347.5 411 349.5 409 363.5 402 363.5 516.3 326.5 516.3 319.5 517.8 316.5 516 314.4 513.5 309 500.5 305.8 497.5 303.9 494.5 302.6 488.5 303 483.5 306.6 474.5 304.3 467.5 303.7 463.5 304.3 458.5 307.4 450.5 305.1 442.5 304.9 436.5 305.9 432.5 308.6 431.5 309 425.5 307.5 425.5 303.5 427.4 301.5 429.4 292.5 433.4 290.5 435.4 284.5 438.4 284.5 380.5zM318.5 526.5 319.5 526.2 326.5 527.7 363.5 527.7 363.5 621.7 321.5 621.7 314.5 623.2 310.5 619.9 305.2 609.5 299.3 602.5 297.8 596.5 298.7 589.5 301 585.5 305.8 581.5 307.3 578.5 307.7 575.5 306.1 569.5 302.6 565.5 300.7 561.5 299.9 557.5 300.4 552.5 302.6 547.5 306.5 544.2 308.3 541.5 313.6 530.5 315.5 528.4 318.5 526.5zM312.7 633.5 314.5 632.6 321.5 634.3 363.5 634.3 363.5 746.5 284.5 746.5 284.5 680 287.5 679.8 289.5 678.9 294.9 665.5 297.5 662.4 301.5 660.1 302.6 658.5 307.9 639.5 310.3 635.5 312.7 633.5z" fill="#0a64ff" fill-rule="evenodd"/>
<path d="M284.5 380.5 363.5 380.5 363.5 395 360.5 396 356.5 399 353.5 399.6 352.5 400.7 349.5 402 347.5 404.1 344.5 405.4 343.2 406.5 343.2 412.5 336.5 417.4 327.5 421.4 325.5 423.3 315.5 427.9 314 427.5 314 422.5 313.5 422.5 303.5 427.4 301.5 429.4 292.5 433.3 290.5 435.3 284.5 438.3 284.5 380.5zM361.6 409.5 363.5 408.6 363.5 506.8 327.5 506.8 320.5 510.8 318.5 508.9 313.5 500.3 307 494.5 305 489.5 305.1 485.5 306 482.5 311 475.5 310.6 473.5 307.3 468.5 306.2 464.5 306.9 458.5 311.2 452.5 311.8 450.5 307.4 441.5 307.2 437.5 307.8 434.5 308.8 432.5 310.5 431.9 326.5 431.6 330.5 428.6 331.5 428.6 333.5 426.6 336.5 425.6 341.5 421.6 349.5 417.6 351.5 415.6 357.5 412.6 361.6 409.5zM318.7 533.5 320.5 533.8 325.5 537.2 363.5 537.2 363.5 611.2 322.5 611.2 315.5 615.8 310 608.5 305.5 605.4 301.8 601.5 300.2 596.5 301.1 590.5 303.5 587.1 310.5 582.4 311.7 579.5 312.1 575.5 311.2 570.5 303.4 561.5 302.4 557.5 302.7 553.5 305.5 548.5 312.2 543.5 318.7 533.5zM314.2 640.5 321.5 644.8 363.5 644.8 363.5 746.5 300.6 746.5 300.9 716.5 299.5 711.8 296.7 709.5 295 706.5 293.7 700.5 294.3 694.5 298.1 685.5 295.9 677.5 295.9 672.5 298.5 666.2 307 659.5 310 647.5 311.8 643.5 314.2 640.5z" fill="#00beff" fill-rule="evenodd"/>
<path d="M284.5 380.5 350.2 380.5 350.2 401.5 347.5 403.8 342.4 406.5 341.8 407.5 341.6 413.5 338.5 415.1 336.5 417.2 327.5 421.1 325.5 423 319.5 425.7 318 425.5 318 420.5 316.5 420.5 312.5 423.4 303.5 427.3 301.5 429.3 292.5 433.2 290.5 435.2 284.5 438.2 284.5 380.5zM356 380.5 363.5 380.5 363.5 394.7 360.5 395.7 356.5 398.6 356 398.5 356 380.5zM361.8 409.5 363.5 408.8 363.5 501.6 327.5 501.6 320.5 504.5 318.2 502.5 315.1 497.5 309.5 494.5 307.5 491.9 306.7 489.5 306.8 485.5 308.1 482.5 311.5 479.4 314.5 478.7 315.6 475.5 314.6 472.5 311.5 470.9 309.5 468.5 307.8 464.5 308 460.5 309.5 457.5 312.5 454.7 315.5 453.8 316.6 451.5 316.5 449.2 312.5 446.7 309.5 442.5 308.7 438.5 309.5 434.9 311.3 432.5 312.5 432.2 326.5 431.8 330.5 428.8 331.5 428.8 333.5 426.8 339.5 423.8 341.5 421.8 349.5 417.8 354.5 413.8 357.5 412.8 361.8 409.5zM318.3 540.5 319.5 540.5 321.1 542.5 321.1 557.5 319.5 574.5 318.4 605.5 315.5 608.6 312.5 605.2 307.5 604 304.5 601.9 302.3 598.5 301.8 594.5 303.1 590.5 305.5 588 307.5 587 313.3 586.5 314.8 584.5 315.8 575.5 315.2 568.5 313.5 566.5 308.5 564.9 306.5 563.1 304.4 559.5 304 555.5 304.8 552.5 307.5 549.2 309.5 548 314.5 547.4 315.9 546.5 318.3 540.5zM313.6 648.5 314.5 648.2 316.4 650.5 319.5 674.6 363.5 675 363.5 746.5 305.2 746.5 305.1 714.5 304.3 712.5 297.8 705.5 296 700.5 296.9 693.5 301.1 687.5 301.5 685.5 298 678.5 297.5 673.5 298.5 669.5 300.5 666.8 303.5 664.7 308.6 663.5 310.5 661.9 313.6 648.5z" fill="#00e6dc" fill-rule="evenodd"/>
<path d="M284.5 380.5 348 380.5 348 402.5 347.5 403.6 340.5 407.5 340.5 413.5 336.5 416.9 327.5 420.8 323.5 423.6 322 423.5 322 418.5 320.5 418.5 315.5 421.4 314.5 421.3 312.5 423.3 303.5 427.2 301.5 429.2 292.5 433.1 290.5 435.1 284.5 438.1 284.5 380.5zM362 409.5 363.5 409 363.5 494.9 327.5 494.9 320.5 499.4 316.5 494.6 310.5 493.3 309.1 491.5 308 488.5 308.5 485.1 310.5 482.3 312.5 481.4 314.5 481.8 315.5 481.3 317 475.5 316.2 470.5 315.5 469.6 313.5 469.6 311.5 468.5 309.3 464.5 309.3 461.5 310.1 459.5 312.5 457 316.5 456.6 318.1 451.5 317.8 447.5 316.9 445.5 313.5 444.9 310.7 441.5 310.2 438.5 311 435.5 312.5 433.5 314.5 432.5 326.5 432 328.5 431 333.5 427 336.5 426 341.5 422 349.5 418 351.5 416 357.5 413 362 409.5zM308.6 550.5 310.5 550.1 312.5 550.6 314.9 552.5 316.1 554.5 316 559.5 312.5 562.9 308.5 562.7 306.5 560.6 305.7 558.5 306 553.5 308.6 550.5zM306.4 589.5 308.5 589.1 310.5 589.8 312.4 591.5 313.6 594.5 313.7 596.5 312.4 599.5 310.5 601.2 308.5 601.8 305.5 600.7 303.3 596.5 303.8 592.5 306.4 589.5zM303.8 666.5 307.1 666.5 312.5 668.4 313.8 671.5 313.5 686.5 315 697.5 315.5 709.5 315.2 746.5 309 746.5 309.2 717.5 308.5 711.5 306.9 709.5 302.5 707.7 300.5 706 298.1 702.5 297.4 699.5 298.1 694.5 301.5 690 304.5 688.2 309.5 688 310.6 686.5 310.5 685.1 309.5 684.2 305.5 684.2 303.5 683.4 300.8 680.5 299.2 677.5 298.8 673.5 299.5 670.7 301 668.5 303.8 666.5z" fill="#00b48c" fill-rule="evenodd"/>
<path d="M284.5 380.5 346 380.5 346 403.5 345.5 404.6 342.5 405.9 339.2 408.5 339.2 414.5 336.5 416.7 328.5 420.6 327 420.5 327 415.5 326.5 415.5 315.5 421.3 314.5 421.3 312.5 423.2 303.5 427.1 301.5 429.1 292.5 433 290.5 435 284.5 438 284.5 380.5zM362.2 409.5 363.5 409.2 363.5 488.1 328.5 488.1 324.5 489.3 320.5 491.7 319.5 491.3 317.5 487.5 313.8 491.5 311.5 491.7 309.6 488.5 310.7 484.5 312.5 483.6 316.5 486.5 317.5 486.3 318.5 472.5 317.5 467 316.5 466.4 313.5 467.3 312.5 466.9 311.3 465.5 310.7 462.5 312.5 459.2 314.5 459 316.5 460.3 318 459.5 319.2 455.5 319.7 449.5 318.5 442.1 317.5 441.8 314.5 442.9 312.4 441.5 311.7 438.5 312.5 436 314.5 434.7 318.5 436.4 320.2 432.5 326.5 432.2 328.5 431.2 333.5 427.2 336.5 426.2 341.5 422.2 349.5 418.2 351.5 416.2 357.5 413.2 362.2 409.5zM308.9 552.5 311.5 552.8 313.3 555.5 312.6 559.5 310.5 560.9 308.5 560.5 306.9 557.5 307.2 554.5 308.9 552.5zM306.8 591.5 308.5 591.4 309.5 592.1 310.8 594.5 310.4 597.5 308.5 599.4 306.5 599.1 304.9 596.5 305.1 593.5 306.8 591.5zM303 668.5 305.5 668 307.5 668.9 309 670.5 310.2 673.5 309.3 678.5 307.5 680.5 305.5 681.3 302.5 680.3 300 675.5 300.5 671.5 303 668.5zM302.1 691.5 304.5 690.8 307.5 692 309.9 694.5 311.4 697.5 311.1 702.5 306.5 705.9 303.5 706 301.5 705 298.8 700.5 299.1 695.5 302.1 691.5z" fill="#00823c" fill-rule="evenodd"/>
<path d="M284.5 380.5 344 380.5 344 404.5 343.5 405.6 338.5 408.4 336.5 410.5 327.5 414.3 325.5 416.3 314.5 421.2 312.5 423.1 303.5 427 301.5 429 292.5 432.9 290.5 434.9 284.5 437.9 284.5 380.5zM362.5 409.5 363.5 409.5 363.5 481.4 320.5 481.8 320.2 474.5 322.1 432.5 326.5 432.5 328.5 431.5 333.5 427.5 336.5 426.5 341.5 422.5 349.5 418.5 351.5 416.5 357.5 413.5 362.5 409.5zM309.5 555.5 310.5 556.5 309.5 557.6 309.5 555.5zM302.7 670.5 305.5 669.9 307.9 672.5 307.9 676.5 305.5 679.2 303.5 679 301.5 676.5 301.2 673.5 302.7 670.5zM301.9 693.5 303.5 692.7 305.5 693.1 308.1 696.5 308.2 700.5 307.2 702.5 305.5 703.9 302.5 703.8 300.1 700.5 300 696.5 301.9 693.5z" fill="#287d0a" fill-rule="evenodd"/>
<path d="M284.5 380.5 342 380.5 342 405.5 341.5 406.6 338.5 408 336.5 410.1 327.5 414.2 323.5 417.2 314.5 421.1 312.5 423 303.5 426.9 301.5 428.9 292.5 432.8 290.5 434.8 284.5 437.8 284.5 380.5zM303.2 672.5 304.5 671.8 306.2 673.5 306.1 675.5 304.5 677 302.8 675.5 303.2 672.5zM302 695.5 303.5 694.5 304.5 694.7 306.2 696.5 306.5 699.5 304.5 702.1 302.5 701.8 301.4 700.5 301.1 697.5 302 695.5z" fill="#82b400" fill-rule="evenodd"/>
<path d="M284.5 380.5 339.8 380.5 339.5 407.5 338.5 407.6 334.5 410.9 327.5 414 325.5 416 314.5 421 312.5 423 303.5 426.8 301.5 428.8 292.5 432.7 290.5 434.7 284.5 437.7 284.5 380.5zM303.3 698.5 303.5 698 303.3 698.5z" fill="#d8e610" fill-rule="evenodd"/>
<path d="M284.5 380.5 336 380.5 336 409.5 327.5 413.8 325.5 415.9 314.5 420.9 312.5 422.9 303.5 426.7 301.5 428.7 292.5 432.6 290.5 434.6 284.5 437.6 284.5 380.5z" fill="#ffee00" fill-rule="evenodd"/>
<path d="M289 380.5 331 380.5 331 411.5 330.5 412.5 327.5 413.6 323.5 416.8 314.5 420.8 312.5 422.8 303.5 426.6 301.5 428.6 292.5 432.5 290.5 434.5 289 434.5 289 380.5z" fill="#ffc800" fill-rule="evenodd"/>
<path d="M296.7 380.5 302.8 380.5 302.8 426.5 301.5 428.5 297.5 430.5 296.7 430.5 296.7 380.5zM306.4 380.5 326.5 380.5 326.5 414.5 306.5 425.5 306.4 380.5z" fill="#ffaa00" fill-rule="evenodd"/>
<path d="M308.2 380.5 323.5 380.5 323.5 416.5 314.5 420.7 312.5 422.6 308.5 424.5 308.2 380.5z" fill="#ff7800" fill-rule="evenodd"/>
<path d="M310.2 380.5 320.3 380.5 320.3 417.5 310.5 423.5 310.2 380.5z" fill="#ff4600" fill-rule="evenodd"/>
<path d="M314.6 380.5 317 380.5 317 419.5 315.5 420.5 314.6 420.5 314.6 380.5z" fill="#ff0a00" fill-rule="evenodd"/>
<path d="M303.3 431L331 428.5M302.9 441.3L330.5 438.5M302.5 451.6L330 448.4M302 461.9L329.5 458.4M301.6 472.2L329 468.3M301.2 482.5L328.5 478.3M300.8 492.8L328 488.2M300.3 503.1L327.5 498.2M299.9 513.4L327 508.1M299.5 523.7L326.4 518.1M299 534L325.9 528M298.6 544.3L325.4 538M298.2 554.6L324.9 547.9M297.8 564.9L324.4 557.9M297.3 575.2L323.9 567.8M296.9 585.5L323.5 577.8M296.5 595.8L323 587.7M296 606.1L322.6 597.7M295.6 616.4L322.2 607.6M295.2 626.7L321.8 617.6M294.8 637L321.4 627.6M294.3 647.3L320.9 637.5M293.9 657.6L320.5 647.5M293.5 667.9L320.1 657.4M293.1 678.2L319.7 667.4M292.6 688.5L319.3 677.3M292.2 698.8L318.9 687.3M291.8 709.1L318.4 697.2M291.4 719.4L318 707.2M290.9 729.7L317.4 717.1M290.5 740L316 727M303.3 431L290.5 740M312.5 430.2L300.2 715.3L299 735.7M321.8 429.3L315.1 570.3L309.1 711.3L308.6 721.3L307.5 731.3M331 428.5L323.9 567.8L318 707.2L317.4 717.1L316 727" fill="none" stroke="#000" stroke-opacity="0.5" stroke-width="0.45"/>
</g>
<path d="M329.500 431L322.800 571" stroke="#e8d800" stroke-width="1.600" fill="none"/><path d="M329.500 455L328 487M326 520l-.8 22" stroke="#1010e0" stroke-width="1.800" fill="none"/>
<path d="M321.600 588L316.800 714" stroke="#e8c000" stroke-width="1.300" fill="none"/>
<clipPath id="c2"><path d="M334 376 372.7 353 372.7 399.8 357.3 402.6 355 389z"/></clipPath>
<g clip-path="url(#c2)">
<path d="M334 376 372.7 353 372.7 399.8 357.3 402.6 355 389z" fill="#4b0a82" stroke="#4b0a82" stroke-width=".6"/>
<path d="M316 339.8L316 428.3M320.2 339.8L320.2 428.3M324.4 339.8L324.4 428.3M328.6 339.8L328.6 428.3M332.8 339.8L332.8 428.3M337 339.8L337 428.3M341.2 339.8L341.2 428.3M345.4 339.8L345.4 428.3M349.6 339.8L349.6 428.3M353.8 339.8L353.8 428.3M358 339.8L358 428.3M362.2 339.8L362.2 428.3M366.4 339.8L366.4 428.3M370.6 339.8L370.6 428.3M374.8 339.8L374.8 428.3M379 339.8L379 428.3M383.2 339.8L383.2 428.3M387.4 339.8L387.4 428.3M391.6 339.8L391.6 428.3M395.8 339.8L395.8 428.3M400 339.8L400 428.3M298.7 370.3L374.7 325.1M301.3 374.7L377.3 329.5M303.9 379.2L380 333.9M306.6 383.6L382.6 338.4M309.2 388L385.2 342.8M311.9 392.5L387.9 347.2M314.5 396.9L390.5 351.6M317.1 401.3L393.2 356.1M319.8 405.8L395.8 360.5M322.4 410.2L398.4 364.9M325 414.6L401.1 369.4M327.7 419.1L403.7 373.8M330.3 423.5L406.3 378.2M332.9 427.9L409 382.7M335.6 432.3L411.6 387.1M338.2 436.8L414.2 391.5M340.9 441.2L416.9 395.9" fill="none" stroke="#000" stroke-opacity="0.6" stroke-width="0.5"/>
</g>
<clipPath id="c3"><path d="M176.1 395.6 251.7 352.2 304.1 368.7 358.7 338.2 385.3 348 372.7 356 337 377.5 357.3 389.3 281.7 430.6z"/></clipPath>
<g clip-path="url(#c3)">
<path d="M176.1 395.6 251.7 352.2 304.1 368.7 358.7 338.2 385.3 348 372.7 356 337 377.5 357.3 389.3 281.7 430.6z" fill="#4b0a82" stroke="#4b0a82" stroke-width=".6"/>
<path d="M170.1 332.2 226.5 332.2 227.3 336.2 230.1 342.2 236.1 351.1 242.1 357.6 254.1 360.1 276.1 368.4 302.1 374.8 304.9 374.2 306.3 372.2 305.7 370.2 296.2 364.2 297.1 362.2 304.1 359.8 334.1 353.4 346.1 352.7 354.1 350.3 356.1 350.9 360.1 355.1 361.5 360.2 360.5 364.2 356.1 374.9 354.1 377.9 352.1 379.2 344.1 378.7 340.3 380.2 338.8 382.2 338.5 384.2 340.1 387.5 346.2 392.2 358.1 416.2 372.3 436.2 373.2 438.2 306.1 438.2 300.1 429.3 296.1 425.4 292.1 422.9 280.1 420.6 244.1 409.8 232.1 404.7 202.1 389.5 194.1 387.5 192.1 386.4 188.9 382.2 182.7 378.2 170.1 364.6 170.1 332.2zM295.9 332.2 315.7 332.2 320.2 340.2 320.8 342.2 320.3 344.2 318.1 345.8 316.1 346.3 304.1 347.3 302.1 346.8 300.1 345.2 298.5 342.2 295.9 332.2z" fill="#3c0aaa" fill-rule="evenodd"/>
<path d="M202.1 356.2 204.1 354.2 214.1 354.3 221.9 362.2 228.4 366.2 242.1 370.2 256.1 372.4 274.1 377.7 280.4 380.2 283.5 382.2 288.1 387.2 296.1 386.1 306.1 388.2 310.1 388.3 320.1 385.1 322.1 386.5 331.4 398.2 334.1 413.4 335.1 414.2 336.1 418 337.8 418.2 338.1 420 340 420.2 340.1 424.2 334.1 424 332.1 422.2 330.1 421.5 329.9 420.2 328.1 419.7 327.7 418.2 326.1 417.8 325 416.2 321.3 414.2 294.1 409 286.7 406.2 282.1 402.9 274.1 403 258.1 398.9 246.1 395 238.1 391.4 218.1 385.1 210.9 380.2 202.3 366.2 202.1 364.5 200.4 364.2 200.1 358.2 202.1 356.2zM326.7 364.2 334.1 362.3 339 364.2 340.1 366.2 339.4 368.2 334.4 372.2 324.1 377.4 322.1 377.4 321.3 372.2 321.9 368.2 326.7 364.2z" fill="#1e0adc" fill-rule="evenodd"/>
<path d="M220.1 370.2 224.1 370.9 230.2 374.2 231.6 376.2 231.3 378.2 228.1 380 224.1 380.7 220.1 380.1 218.1 378.9 216.3 376.2 216.2 374.2 218.1 371 220.1 370.2zM248.8 382.2 250.1 380.9 252.1 380.4 264.7 382.2 271.5 384.2 273.5 386.2 273.6 388.2 272.1 389.9 270.1 390.3 256.1 388.2 250.4 386.2 248.8 384.2 248.8 382.2zM299.3 396.2 308.1 395.4 314.1 396.5 320.5 400.2 322 402.2 322 404.2 319.6 406.2 316.1 407.3 312.1 407.5 308.1 406.6 298 400.2 297.7 398.2 299.3 396.2z" fill="#0000ff" fill-rule="evenodd"/>
<path d="M125.1 466.7L409.2 560.9M126.6 462.3L410.6 556.5M128.1 457.9L412.1 552M129.5 453.5L413.5 547.6M131 449.1L415 543.2M132.4 444.7L416.5 538.8M133.9 440.3L417.9 534.4M135.4 435.9L419.4 530M136.8 431.5L420.8 525.6M138.3 427.1L422.3 521.2M139.7 422.7L423.8 516.8M141.2 418.3L425.2 512.4M142.7 413.9L426.7 508M144.1 409.5L428.1 503.6M145.6 405L429.6 499.2M147 400.6L431.1 494.8M148.5 396.2L432.5 490.4M150 391.8L434 486M151.4 387.4L435.4 481.6M152.9 383L436.9 477.1M154.3 378.6L438.4 472.7M155.8 374.2L439.8 468.3M157.3 369.8L441.3 463.9M158.7 365.4L442.7 459.5M160.2 361L444.2 455.1M161.6 356.6L445.7 450.7M163.1 352.2L447.1 446.3M164.6 347.8L448.6 441.9M166 343.4L450 437.5M167.5 339L451.5 433.1M168.9 334.6L453 428.7M170.4 330.1L454.4 424.3M171.9 325.7L455.9 419.9M173.3 321.3L457.3 415.5M174.8 316.9L458.8 411.1M176.3 312.5L460.3 406.7M177.7 308.1L461.7 402.3M179.2 303.7L463.2 397.8M180.6 299.3L464.6 393.4M182.1 294.9L466.1 389M183.6 290.5L467.6 384.6M185 286.1L469 380.2M186.5 281.7L470.5 375.8M187.9 277.3L471.9 371.4M189.4 272.9L473.4 367M190.9 268.5L474.9 362.6M192.3 264.1L476.3 358.2M193.8 259.7L477.8 353.8M195.2 255.2L479.2 349.4M196.7 250.8L480.7 345M198.2 246.4L482.2 340.6M199.6 242L483.6 336.2M201.1 237.6L485.1 331.8M202.5 233.2L486.5 327.4M204 228.8L488 322.9M205.5 224.4L489.5 318.5M206.9 220L490.9 314.1M208.4 215.6L492.4 309.7M209.8 211.2L493.8 305.3M211.3 206.8L495.3 300.9M212.8 202.4L496.8 296.5M214.2 198L498.2 292.1M215.7 193.6L499.7 287.7M217.1 189.2L501.1 283.3M218.6 184.8L502.6 278.9M110.2 318.7L369.7 169.7M112.3 322.3L371.8 173.3M114.3 325.9L373.8 176.9M116.4 329.5L375.9 180.5M118.5 333.1L378 184.1M120.5 336.7L380 187.7M122.6 340.3L382.1 191.3M124.7 343.8L384.2 194.9M126.7 347.4L386.2 198.5M128.8 351L388.3 202.1M130.9 354.6L390.3 205.7M132.9 358.2L392.4 209.3M135 361.8L394.5 212.9M137.1 365.4L396.5 216.5M139.1 369L398.6 220.1M141.2 372.6L400.7 223.7M143.2 376.2L402.7 227.2M145.3 379.8L404.8 230.8M147.4 383.4L406.9 234.4M149.4 387L408.9 238M151.5 390.6L411 241.6M153.6 394.2L413.1 245.2M155.6 397.8L415.1 248.8M157.7 401.4L417.2 252.4M159.8 405L419.2 256M161.8 408.6L421.3 259.6M163.9 412.2L423.4 263.2M166 415.8L425.4 266.8M168 419.4L427.5 270.4M170.1 423L429.6 274M172.1 426.6L431.6 277.6M174.2 430.2L433.7 281.2M176.3 433.7L435.8 284.8M178.3 437.3L437.8 288.4M180.4 440.9L439.9 292M182.5 444.5L442 295.6M184.5 448.1L444 299.2M186.6 451.7L446.1 302.8M188.7 455.3L448.1 306.4M190.7 458.9L450.2 310M192.8 462.5L452.3 313.6M194.9 466.1L454.3 317.1M196.9 469.7L456.4 320.7M199 473.3L458.5 324.3M201 476.9L460.5 327.9M203.1 480.5L462.6 331.5M205.2 484.1L464.7 335.1M207.2 487.7L466.7 338.7M209.3 491.3L468.8 342.3M211.4 494.9L470.9 345.9M213.4 498.5L472.9 349.5M215.5 502.1L475 353.1M217.6 505.7L477 356.7M219.6 509.3L479.1 360.3M221.7 512.9L481.2 363.9M223.8 516.5L483.2 367.5M225.8 520.1L485.3 371.1M227.9 523.6L487.4 374.7M229.9 527.2L489.4 378.3M232 530.8L491.5 381.9M234.1 534.4L493.6 385.5M236.1 538L495.6 389.1M238.2 541.6L497.7 392.7M240.3 545.2L499.8 396.3M242.3 548.8L501.8 399.9M244.4 552.4L503.9 403.5M246.5 556L505.9 407M248.5 559.6L508 410.6M250.6 563.2L510.1 414.2M252.7 566.8L512.1 417.8M254.7 570.4L514.2 421.4M256.8 574L516.3 425" fill="none" stroke="#000" stroke-opacity="0.55" stroke-width="0.5"/>
</g>
<path d="M176.1 395.6L281.7 430.6L281.7 432.8L176.6 398.1z" fill="#3a0870"/>
<clipPath id="c11"><path d="M323 584 560 602 726.7 616.5 737.5 622 317.7 714.7z"/></clipPath>
<g clip-path="url(#c11)">
<path d="M323 584 560 602 726.7 616.5 737.5 622 317.7 714.7z" fill="#0a64ff" stroke="#0a64ff" stroke-width=".6"/>
<path d="M311.7 578 363.2 578 360.5 586 361.7 588.2 373.7 587.1 375.7 586.4 377.1 584 378.6 578 743.7 578 743.7 722 311.7 722 311.7 578zM363.7 595.8 366 598 367.7 598.4 372.4 598 369.6 596 363.7 595.8z" fill="#00beff" fill-rule="evenodd"/>
<path d="M311.7 578 356.5 578 356 582 358.3 588 357.8 590 355.5 592 355 594 357.8 598 358.7 604 361.7 606.4 375.7 608 407.7 605.6 429.7 603 473.7 599.2 479 598 480.1 596 487.7 592.6 489.6 594 487.9 598 494.1 598 500.6 596 501.7 594.4 503.2 594 505.7 588 509.7 588 511.7 586 511.7 584 513.7 582 513.7 580 515.7 578 743.7 578 743.7 722 311.7 722 311.7 578zM377.9 588 381.7 586.9 385.7 586.9 388.8 588 391.7 591 395.7 591.6 401.7 591.2 409.7 589.4 419.7 589.2 421.7 589.6 424.3 592 424.5 594 421.7 595.5 413.7 595.7 409.7 595.3 399.7 592.8 393.7 592.8 387.7 593.9 379.7 593.4 371.8 592 369.8 590 373.7 589.8 377.9 588zM432.9 590 433.7 589.1 443.7 592.2 453.7 592.2 456.7 594 453.7 596.5 451.7 596.9 437.7 596.4 431.5 594 431.1 592 432.9 590zM467.3 594 467.9 594 467.3 594z" fill="#00e6dc" fill-rule="evenodd"/>
<path d="M311.7 578 350.7 578 350.7 584 355.7 586.8 356.3 588 354 590 349.4 592 349.2 604 350.7 608 357.7 616.6 368.1 620 377.7 622.2 403.7 619.9 463.7 610 507.7 605.4 549.7 603.7 553.7 603 573.7 606 603.7 609.2 649.7 611 665.3 610 668.3 608 669.6 606 669.7 604.3 671 604 671.7 602 685.7 602 688.7 606 689.7 606.1 693.9 610 697 612 701.7 613 705.5 612 709.6 610 711.7 608.1 713.6 610 715.7 610 716.4 610 717.7 608 721.2 608 721.7 606 723.7 604 723.7 602 725.7 600 725.7 598 729.7 594 729.7 592 731.7 590 731.7 588 735.7 584 743.7 584 743.7 722 311.7 722 311.7 578zM379.7 590 383.7 589.2 387.5 590 385.7 591.1 379.7 590zM415 592 419.8 592 415 592z" fill="#00b48c" fill-rule="evenodd"/>
<path d="M311.7 578 347.7 578 347.5 584 349 588 347.7 589.1 346.5 592 346 608 351.7 620.1 355.7 623.6 363.7 628.1 377.7 631.6 389.7 633.5 411.7 631.7 451.7 627 493.7 624.1 555.7 622.4 603.7 617.5 681.7 617 727.7 620.2 730.6 618 741.7 598.1 743.7 596 743.7 722 311.7 722 311.7 578z" fill="#00823c" fill-rule="evenodd"/>
<path d="M311.7 578 344.7 578 343.3 600 341 610 342 614 346.2 622 349.7 626 361.7 634 379.7 640 387.7 641.5 411.7 643.4 449.7 639.1 553.7 635.7 603.7 628 681.7 623.2 713.7 623.7 726.3 626 727.7 627.9 728.6 628 729.7 631.6 735.7 632 733.7 634 725.7 634 723.7 636 721.7 636 723.7 638 723.7 644 725.7 646 725.7 650 727.7 652 727.7 658 729.7 660 729.7 668 731.7 670 731.7 678 733.7 680 733.7 688 735.7 690 735.7 702 737.7 704 737.7 722 311.7 722 311.7 578z" fill="#287d0a" fill-rule="evenodd"/>
<path d="M311.7 578 341.7 578 341.6 584 339.4 602 331.3 616 331.8 618 334.9 622 337.4 624 357.7 638.1 379.7 648.4 385.5 650 411.7 653.7 447.7 649.7 477.7 648.6 493.7 648.3 551.7 649.6 603.7 638.4 647.7 635.9 660.4 636 661.7 641.7 663.7 643.6 667.7 645.4 671.6 646 671.7 646.7 673.7 648 673.7 650 675.7 652 675.7 656 677.7 658 677.7 662 679.7 664 679.7 668 681.7 670 681.7 674 683.7 676 683.7 682 685.7 684 685.7 690 687.7 692 687.7 698 689.7 700 689.7 706 691.7 708 691.7 722 311.7 722 311.7 578zM567.7 670 565.7 672 569.7 676 569.7 678 571.7 680 571.7 670 567.7 670z" fill="#82b400" fill-rule="evenodd"/>
<path d="M311.7 578 338.7 578 338.5 586 337 600 333.7 606.3 329.7 610.5 323.7 612.9 311.7 613 311.7 578zM313.7 624 317.7 624 321.7 622.7 323.7 623.4 357.7 644.6 377.7 655.1 383.7 657.3 411.7 662.1 477.7 659.3 525.7 666.5 529.7 665.8 535.7 666.3 539.7 664.8 542.6 666 542.8 672 541.7 676 540.5 676 539.7 678 531.7 678 529.7 680 523.7 680 521.7 682 513.7 682 511.7 684 511.7 686 513.7 688 513.7 690 515.7 692 515.7 696 517.7 698 517.7 702 519.7 704 519.7 708 521.7 710 521.7 722 311.7 722 311.7 624 313.7 624zM603.3 652 611.7 652 613.7 653.9 621.8 666 630.1 682 632.9 692 633.1 696 638.9 722 569.7 722 569.9 716 573.7 715.6 577.7 713.3 580.1 710 580.7 706 581 692 582.7 686 583 680 584.4 676 585.5 668 589.7 656 595.7 653.4 599.7 653.5 603.3 652z" fill="#d8e610" fill-rule="evenodd"/>
<path d="M311.7 578 333.6 578 334.5 588 334 598 331.7 603 329.7 605.9 327.7 607.5 323.7 608.4 311.7 606.7 311.7 578zM313.7 632 323.7 631.8 325.7 632.6 337.7 639.6 355.7 651.4 375.7 662.8 379.7 664.4 411.7 671.5 461.7 676.9 477.7 679.4 479.4 680 481.4 682 481.7 683.6 483.2 684 483.7 686 486 680 487.7 679.6 489 682 487.7 688 486.1 688 485.7 690 479.7 690 477.7 692 469.7 692 467.7 694 463.7 694 463.7 696 465.7 698 465.7 700 467.7 702 467.7 704 469.7 706 469.7 710 471.7 712 471.7 722 311.7 722 311.7 632 313.7 632z" fill="#ffee00" fill-rule="evenodd"/>
<path d="M311.7 578 326.6 578 328.2 586 326.8 594 323.7 600.2 321.7 600.6 315.7 599 311.7 598.9 311.7 578zM311.7 638 321.7 637.9 325.7 638.8 335.7 645 353.7 658.1 375.7 672.6 397.7 681.9 425.6 690 429 694 429.7 697.9 431.7 700 433.7 700 431.7 702 423.7 702 425.7 704 425.7 708 427.7 710 427.7 722 311.7 722 311.7 638z" fill="#ffc800" fill-rule="evenodd"/>
<path d="M311.7 644 311.7 643 321.7 643 325.7 643.7 334.7 650 363.7 675.9 369.7 680.2 381.7 687.7 397.7 695.1 403.7 695.1 405.3 696 406 698 405.7 701.7 404 704 403.7 706 402.7 706 403.7 708 403.7 712 405.7 714 405.7 722 311.7 722 311.7 644z" fill="#ffaa00" fill-rule="evenodd"/>
<path d="M311.7 648 311.7 646.5 321.7 646.7 327.7 649.3 339.6 660 359.7 681.5 371.7 691.3 384.6 700 385.8 704 384.6 708 385.9 718 387.3 722 311.7 722 311.7 648z" fill="#ff7800" fill-rule="evenodd"/>
<path d="M311.7 650 311.7 649.1 321.7 649.5 329.7 654.5 342.9 668 353.7 682.3 371.7 699.1 373.7 702.7 376.2 710 376.8 718 378 722 311.7 722 311.7 650z" fill="#ff4600" fill-rule="evenodd"/>
<path d="M311.7 656 311.7 655 321.7 654.6 325.7 655.6 331.1 660 337.7 667.1 341.7 672 349.1 684 358.6 694 365 702 367.2 708 369.2 722 311.7 722 311.7 656z" fill="#ff0a00" fill-rule="evenodd"/>
<path d="M311.7 662 311.7 661 319.7 661 323.7 661.9 334.4 672 343.7 687 351.1 696 356.6 704 360.2 716 360.7 722 311.7 722 311.7 662z" fill="#dc0000" fill-rule="evenodd"/>
<path d="M311.7 670 311.7 669.5 313.7 669.5 317.7 670.6 319 672 325.7 674.2 329.7 678.2 342.7 698 345.5 704 347.7 716 349.7 716 347.7 718 347.7 722 311.7 722 311.7 670z" fill="#b40000" fill-rule="evenodd"/>
<path d="M323 587L317.7 714.7M337.8 588.1L332.7 711.4M352.7 589.1L347.7 708.2M367.5 590.2L362.7 704.9M382.4 591.2L377.7 701.7M397.2 592.3L392.7 698.4M412.1 593.3L407.7 695.2M426.9 594.4L422.6 691.9M441.8 595.4L437.6 688.6M456.6 596.5L452.6 685.4M471.4 597.5L467.6 682.1M486.3 598.6L482.6 678.9M501.1 599.6L497.6 675.6M516 600.7L512.6 672.4M530.8 601.7L527.6 669.1M545.7 602.8L542.6 665.8M560.5 603.8L557.6 662.6M575.3 605.1L572.6 659.3M590.2 606.4L587.6 656.1M605 607.7L602.6 652.8M619.8 609L617.6 649.6M634.6 610.3L632.5 646.3M649.4 611.6L647.5 643M664.3 612.9L662.5 639.8M679.1 614.2L677.5 636.5M693.9 615.5L692.5 633.3M708.7 616.8L707.5 630M723.6 618.1L722.5 626.8M737.5 623L737.5 623.5M323 587L560.5 603.8L723.6 618.1L737.5 623M321.9 612.5L559.9 615.6L723.4 619.9L737.5 623.1M320.9 638.1L559.3 627.3L723.1 621.6L737.5 623.2M319.8 663.6L558.8 639.1L722.9 623.3L737.5 623.3M318.8 689.2L558.2 650.8L722.7 625L737.5 623.4M317.7 714.7L737.5 623.5" fill="none" stroke="#000" stroke-opacity="0.55" stroke-width="0.5"/>
</g>
<clipPath id="c12"><path d="M301.5 731 317.7 714.7 737.5 623 745.5 626.5 343.8 719.8 302 734z"/></clipPath>
<g clip-path="url(#c12)">
<path d="M301.5 731 317.7 714.7 737.5 623 745.5 626.5 343.8 719.8 302 734z" fill="#0000ff" stroke="#0000ff" stroke-width=".6"/>
<path d="M295.5 617 615.7 617 617.1 625 619.1 631.4 619.5 635.8 623.1 646.9 625.5 647.7 629.1 646.9 633 647 631.5 648.4 625.5 651.1 605.3 659 602.7 661.1 601 661.4 599.1 665 597.9 665 597.9 666.2 600.3 666.2 601.5 665 605.1 665 606.3 663.8 611.1 663.8 612.3 662.6 615.9 662.6 617.1 661.4 621.9 661.4 621.9 663.8 623.1 665 623.1 667.4 625.5 671 625.5 674.6 626.7 675.8 626.7 679.4 627.9 680.6 627.9 685.4 629.1 686.6 629.1 690.2 630.3 691.4 630.3 695 631.5 696.2 631.5 701 632.7 702.2 632.7 705.8 633.9 707 633.9 710.6 635.1 711.8 635.1 715.4 636.3 716.6 636.3 721.4 637.5 722.6 637.5 726.2 638.7 727.4 638.7 731 639.9 732.2 639.9 737 641.1 738.2 641.1 740.6 295.5 740.6 295.5 617z" fill="#0a64ff" fill-rule="evenodd"/>
<path d="M295.5 617 611.1 617 611.1 623 612.3 624.2 612.3 629 613.5 630.2 613.5 633.8 614.7 635 614.7 639.8 615.9 639.8 615.9 641 619.5 642.6 620.7 644 621.5 647 619.5 649 613.5 651 611.1 652.8 605.5 655.4 582.3 664 579.9 664.3 578.4 666.2 573.9 668.9 564.3 673 562.8 674.6 565.2 687.8 569.4 703.4 573.6 723.8 578.1 740.6 295.5 740.6 295.5 617zM596.7 648.2 595.5 649.4 591.9 649.4 590.7 650.6 593.1 650.6 593.3 651.8 594.3 651.9 595 653 597.9 651.8 599.1 653 601 653 599.1 648.2 596.7 648.2z" fill="#00beff" fill-rule="evenodd"/>
<path d="M295.5 617 549.3 617 553.2 636.2 555 642.2 555.6 647 557.4 653 558 657.8 559.5 662.3 576.7 660.2 583.5 660.2 558.2 668.6 558.4 669.8 560.6 672.2 558.3 675.8 558.3 680.6 559.5 681.8 559.5 685.4 560.7 686.6 560.7 691.4 561.9 692.6 561.9 696.2 563.1 697.4 563.1 701 564.3 702.2 564.3 705.8 565.5 707 565.5 711.8 566.7 713 566.7 716.6 567.9 717.8 567.9 721.4 569.1 722.6 569.1 727.4 570.3 728.6 570.3 732.2 571.5 733.4 571.5 737 572.7 738.2 572.7 740.6 295.5 740.6 295.5 617zM554.7 669.6 546.3 672.9 543.4 673.4 542.7 674.4 539.7 674.6 537.9 677 534.5 677 534.3 680.6 539.1 680.6 540.3 679.4 543.9 679.4 545.1 678.2 548.7 678.2 549.9 677 553.5 677 554.7 675.8 555.9 675.8 556.4 669.8 554.7 669.6z" fill="#00e6dc" fill-rule="evenodd"/>
<path d="M295.5 617 545.1 617 545.1 623 546.3 624.2 546.3 629 547.5 630.2 547.5 633.8 548.7 635 548.7 639.8 549.9 641 549.9 644.6 551.1 645.8 551.1 650.6 552.3 651.8 552.3 655.4 553.5 656.6 553.5 657.8 552.3 659 547.5 659 546.3 660.2 542.7 660.2 541.5 661.4 536.7 661.4 535.5 662.6 530.7 662.6 529.5 663.8 530.7 663.8 530.7 665 531.8 666.2 534.3 667.7 545.1 667.1 551.6 667.4 529.9 674.6 515.9 678.2 498.9 684.2 498.2 693.8 505.8 725 506.4 729.8 509.4 740.6 295.5 740.6 295.5 617zM525.9 663.8 524.7 665 530 665 529.5 663.8 525.9 663.8z" fill="#00b48c" fill-rule="evenodd"/>
<path d="M295.5 617 483.7 617 485.9 625.4 487.3 635 489.5 642.2 489.7 645.8 491.9 653 492.1 656.6 494.3 663.8 496 674.6 498.3 675.4 513.9 673.3 519 673.4 518.3 674.6 500.6 679.4 495.5 683 497.5 685.4 497.7 692.6 495.9 696.2 494.7 697.4 493.5 697.4 494.7 698.6 494.7 702.2 495.9 703.4 495.9 707 497.1 708.2 497.1 711.8 498.3 713 498.3 717.8 499.5 719 499.5 722.6 500.7 723.8 500.7 727.4 501.9 728.6 501.9 733.4 503.1 734.6 503.1 738.2 504.3 739.4 504.3 740.6 295.5 740.6 295.5 617zM468.3 693.8 468.3 696.2 471.9 696.2 473.1 695 470.7 695 470.6 693.8 468.3 693.8zM492.3 684.2 493.6 684.2 492.3 684.2z" fill="#00823c" fill-rule="evenodd"/>
<path d="M295.5 617 482.9 617 486.5 632.6 486.7 636.2 488.9 643.4 489.1 647 491.3 654.2 491.5 657.8 493.7 665 495.2 675.8 494.7 677.1 484.7 680.6 483 681.8 483.6 683 482.9 684.2 479.9 685.4 464.7 690.1 449.8 693.8 433.5 699.5 433.6 705.8 434.8 709.4 435.7 719 440.3 735.8 440.5 740.6 295.5 740.6 295.5 617zM433.5 687.8 435.1 687.8 433.5 687.8zM494.6 685.4 495.9 685.1 497.1 686.6 497.3 691.4 495.9 693.4 492.3 692.3 482.7 692.2 474.4 690.2 477.9 689.3 479.1 688.3 483.9 688.1 485.1 687.3 494.6 685.4z" fill="#287d0a" fill-rule="evenodd"/>
<path d="M295.5 617 479.1 617 479.1 623 480.3 624.2 480.3 627.8 481.5 629 481.5 633.8 482.7 635 482.7 639.8 483.9 641 483.9 644.6 485.1 645.8 485.1 650.6 486.3 651.8 486.3 655.4 487.5 656.6 487.5 661.4 488.7 662.6 488.7 666.2 489.9 667.4 489.9 672.2 487.5 672.2 486.3 673.4 481.5 673.4 480.3 674.6 476.7 674.6 475.5 675.8 470.7 675.8 469.5 677 465.9 677 464.7 678.2 465.5 681.8 469.2 685.4 468.1 686.6 459.9 689 437.4 693.8 434.8 695 430.9 698.6 432.7 701 432.9 705.8 434.2 709.4 434.1 714.2 435.1 720.2 439.7 737 439.7 740.6 332.9 740.6 331.9 738.2 331.5 733.9 329.7 732.2 321.9 728.9 318.3 726.2 313.5 726.4 312.3 724.9 295.5 717.5 295.5 617zM433.5 686.5 432.3 687.8 433.5 689.6 441.2 687.8 439.5 686.5 433.5 686.5zM489.2 687.8 495.9 686.9 496.4 690.2 495.9 692.1 492.3 691.2 482.7 691 480.5 690.2 489.2 687.8z" fill="#82b400" fill-rule="evenodd"/>
<path d="M295.5 617 417.3 617 420 630.2 421.8 636.2 423.6 647 425.4 653 426 657.8 427.8 663.8 429.6 674.6 431.8 681.8 432 685.4 431.4 687.8 432.3 690.1 433.8 691.4 420.8 695 419.2 696.2 419.8 698.6 409.9 703.4 411.9 703.7 413.1 702.7 415.5 703.4 417.9 702.4 427.5 701.5 429.9 700.5 431.6 701 433.7 711.8 432.3 716.3 431.2 716.6 431.1 717.8 429.9 717.8 431.1 719 431.1 723.8 432.3 725 432.3 728.6 433.5 729.8 433.5 733.4 434.7 734.6 434.7 738.2 435.9 739.4 435.9 740.6 333.7 740.6 332.5 737 332.3 733.4 331.1 732.2 321.9 728.3 319.5 725.4 313.5 725.3 311.5 723.8 295.5 716.9 295.5 617zM404.7 706.4 403.5 708.2 401.1 709.4 401.1 711.8 404.7 711.8 404.7 706.4z" fill="#d8e610" fill-rule="evenodd"/>
<path d="M295.5 617 413.1 617 413.1 623 414.3 624.2 414.3 627.8 415.5 629 415.5 633.8 416.7 635 416.7 638.6 417.9 639.8 417.9 644.6 419.1 645.8 419.1 650.6 420.3 651.8 420.3 655.4 421.5 656.6 421.5 661.4 422.7 662.6 422.7 666.2 423.9 667.4 423.9 672.2 425.1 673.4 425.1 678.2 426.3 679.4 426.3 683 427.5 684.2 427.5 685.4 426.3 685.4 425.1 686.6 421.5 686.6 420.3 687.8 415.5 687.8 414.3 689 410.7 689 409.5 690.2 404.7 690.2 403.5 691.4 399.9 691.4 398.7 692.6 399.9 692.6 401.1 693.8 402.3 696.2 405.8 699.8 405.2 701 399.9 703.5 386.3 707 382.4 709.4 375.6 711.8 375 713 375.7 715.4 375.6 726.2 373.5 729.7 372.3 729.8 372.3 731 371.1 731 372.3 732.2 372.3 735.8 373.5 737 373.5 740.6 337.5 740.6 337.5 735.8 336.3 734.6 336.3 729.8 335.1 728.6 335.1 729.8 333.9 731 330.3 731.3 326.7 730.3 321.9 727.8 320.5 726.2 320.7 725.5 324.9 723.8 324.3 723.4 313.5 724.5 295.5 716.4 295.5 617zM339.9 721.4 337.5 722.4 335.1 721.9 332 722.6 335.1 727.4 338.7 727.4 339.9 726.2 343.5 726.2 344.7 725 343.5 725 342.1 722.6 339.9 721.4zM347.1 723.8 346.4 723.8 347.1 725 348.3 725 349.5 723.8 347.1 723.8zM377.1 698.6 375.8 699.8 377.1 701.5 379.5 701.3 380.9 699.8 377.1 698.6zM415.8 704.6 423.9 703.5 429.9 703.7 432.4 708.2 432.7 711.8 432.3 712.6 428.7 712 417.9 708.6 410.2 707 410.9 705.8 415.8 704.6z" fill="#ffee00" fill-rule="evenodd"/>
<path d="M295.5 617 358.5 617 358.5 620.6 360 627.8 361.8 633.8 362.4 638.6 366.6 655.4 368.4 666.2 370.2 672.2 370.8 677 375.5 696.2 375.1 701 375.9 702.8 379 703.4 377.9 704.6 370.1 707 368.6 708.2 368.5 710.6 361.5 713.3 348.3 716.9 335.2 717.8 335.4 719 334.3 720.2 314.7 723.8 309.9 722.6 295.5 716 295.5 617zM371.9 714.2 373.5 713.7 374.9 715.4 374.7 725.9 373.5 726 361.5 722 355.4 719 356.7 717 371.9 714.2zM329.6 723.8 330.3 723.4 331.4 725 331.3 729.8 330.3 730.7 324.3 728.6 322 727.4 321.3 726.2 325.5 724.4 329.6 723.8z" fill="#ffc800" fill-rule="evenodd"/>
<path d="M295.5 617 354.3 617 354.3 625.4 355.5 626.6 355.5 631.4 356.7 632.6 356.7 636.2 357.9 637.4 357.9 642.2 359.1 643.4 359.1 647 360.3 648.2 360.3 653 361.5 654.2 361.5 657.8 362.7 659 362.7 663.8 363.9 665 363.9 669.8 365.1 671 365.1 674.6 366.3 675.8 366.3 680.6 367.5 681.8 367.5 685.4 368.7 686.6 368.7 691.4 369.9 692.6 369.9 698.6 366.3 698.6 365.1 699.8 361.5 699.8 360.3 701 355.5 701 354.3 702.2 349.5 702.2 348.3 703.4 349.5 703.4 350.7 704.6 351.6 707 354.5 710.6 354.6 711.8 352.7 713 348.3 714.3 327.9 714.2 319.5 712.6 319.2 714.2 319.9 715.4 325.8 719 325.4 720.2 313.5 723.1 295.5 715.5 295.5 617zM365.3 716.6 367.5 716.2 372.3 716.6 373.5 717.4 374.1 722.6 373.5 724.8 358.1 719 362.7 716.9 365.3 716.6zM326 725 330.3 724.7 330.4 729.8 327.9 729.7 323 727.4 322.8 726.2 326 725z" fill="#ffaa00" fill-rule="evenodd"/>
<path d="M295.5 709.4 315.7 717.8 316.9 719 316.8 720.2 313.5 722 310 721.4 296.7 715.4 295.5 714.6 295.5 709.4zM325.3 726.2 329.1 725.7 329.6 726.2 329.6 728.6 326.8 728.6 324.6 727.4 325.3 726.2z" fill="#ff7800" fill-rule="evenodd"/>
</g>
<path d="M317.700 714.700L737.500 623" stroke="#2808c0" stroke-width="1.300" fill="none"/>
<clipPath id="c1"><path d="M331.1 428.3 445 438 560 447.8 700 459.4 780 468.5 860 474.5 910 478 957.2 479.6 970 470 983.9 631.5 816.7 619.9 744.7 612 727 607 560 591 323.7 571.9z"/></clipPath>
<g clip-path="url(#c1)">
<path d="M331.1 428.3 445 438 560 447.8 700 459.4 780 468.5 860 474.5 910 478 957.2 479.6 970 470 983.9 631.5 816.7 619.9 744.7 612 727 607 560 591 323.7 571.9z" fill="#1e0adc" stroke="#1e0adc" stroke-width=".6"/>
<path d="M317.7 422.3 991.7 422.3 991.7 638.3 539.7 638.3 539.7 632.3 537.7 630.3 537.7 622.3 535.7 620.3 535.7 614.3 533.7 612.3 533.7 610.3 531.7 608.3 531.7 606.3 529.7 604.3 519.7 604.3 518.3 602.3 517.7 602.3 516.9 600.3 515.7 600.2 515.3 598.3 513.7 597.6 513.2 596.3 507.7 594.1 503.7 590.6 491.7 592.6 489.7 592.1 485.7 588.9 473.7 590.6 471.7 590.2 467.7 587.5 455.7 588.7 449.7 585.9 447.7 585.8 437.7 586.8 431.7 586.1 425.7 589.3 413.7 582.5 401.7 582.9 393.7 580.6 387.7 581.1 377.3 584.3 373.7 586.3 371.7 586.3 371.3 620.3 372.1 626.3 371.5 638.3 317.7 638.3 317.7 422.3zM543.7 528.2 533.7 529 523.5 532.3 519.9 534.3 515.7 539.7 512.9 538.3 509.7 538 505.7 538.9 473.7 555.7 467.7 558 437.7 562.1 385.7 563.9 381.7 564.4 377 566.3 379.7 567.1 385.7 570.7 405.1 574.3 479.7 584.6 485.7 586 495.7 586.5 505.7 588.6 521.7 589 523 588.3 524.8 574.3 527.7 566.9 537.7 564.5 557.7 555.3 571.2 544.3 573.9 540.3 574.6 538.3 573.4 536.3 569.5 532.3 565.7 530.4 553.7 527.4 543.7 528.2z" fill="#0000ff" fill-rule="evenodd"/>
<path d="M317.7 422.3 991.7 422.3 991.7 638.3 617.7 638.3 617.7 614.3 607.7 614.3 605.7 612.3 589.7 612.3 587.7 610.3 577.7 610 577.6 608.3 575.8 604.3 576 602.3 576.9 600.3 579.7 598.1 581.7 597.6 585.7 598.3 588.2 600.3 589.7 610.3 590.7 608.3 591.7 608.3 592.4 604.3 594.5 600.3 595 598.3 593.1 594.3 597.7 582.3 602.8 578.3 621.7 567.4 637.7 563 641.7 560.9 651.6 552.3 654.5 548.3 656.2 544.3 654.6 538.3 651.6 534.3 639.1 522.3 613.7 506.4 581.7 497.1 553.7 496.1 547.7 496.8 515.7 505.6 494.5 514.3 465.7 529.2 437.7 540.1 411.7 543.1 386.9 544.3 381.7 550.8 377.7 550.6 373.9 556.3 363.7 563.7 361.7 566.3 363.7 568.9 367.7 570.8 392.2 576.3 389 578.3 383.7 579.2 381.7 578.9 377.7 576.8 363.7 577.3 361.3 578.3 360.8 582.3 362.6 588.3 362.8 596.3 364.6 602.3 364.8 610.3 366.6 616.3 366.8 622.3 368.6 628.3 368.7 638.3 317.7 638.3 317.7 422.3zM398.5 578.3 401.7 577.4 406 578.3 403.9 580.3 401.7 580.5 398.5 578.3zM417.6 580.3 421.8 580.3 423.3 582.3 419.7 582.8 418.6 582.3 417.6 580.3zM562.6 598.3 563.7 597.7 565.7 598.3 563.7 598.8 562.6 598.3z" fill="#0a64ff" fill-rule="evenodd"/>
<path d="M317.7 422.3 991.7 422.3 991.7 638.3 697.7 638.3 697.7 636.3 695.7 634.3 695.7 628.3 693.7 626.3 693.7 624.3 691.7 622.3 683.7 622.3 682 620.3 683.7 620.3 683.7 616.3 683 612.3 681.8 610.3 669.5 602.3 664.6 598.3 662.5 594.3 661.7 588.3 661.6 584.3 662.3 582.3 669 574.3 684.9 564.3 690.4 558.3 692.2 554.3 693.7 548.3 693.1 542.3 690.5 536.3 677.7 522.2 629.7 484.6 625.7 482.9 597.7 474.9 581.7 474 541.7 475.8 533.7 478.2 521.7 480.3 495.7 492.4 473.2 510.3 447.6 524.3 441.7 526.2 411.7 532.6 381.7 540 367.7 547.8 363.7 551.6 361.7 555 356.6 568.3 354.9 570.3 354.6 572.3 356.6 574.3 355.6 582.3 356.5 598.3 359.9 622.3 361.4 628.3 362.3 638.3 317.7 638.3 317.7 422.3zM641.7 616.3 647.8 616.3 647.7 618.3 643.7 618.3 641.7 616.3z" fill="#00beff" fill-rule="evenodd"/>
<path d="M317.7 422.3 581.1 422.3 580.6 436.3 579.4 440.3 580.6 442.3 585.7 445.6 587.7 445.8 596.6 444.3 597.7 442.9 599.4 442.3 599.7 440.8 601.4 440.3 601.7 438.4 617.7 438.3 619.7 440.3 641.7 440.3 641.7 434.3 639.7 432.3 639.7 422.3 950.1 422.3 950.3 438.3 952.1 446.3 952.1 464.3 950.9 472.3 951.7 473.4 956.9 476.3 955.6 480.3 955.7 483 957.3 484.3 959.7 484.8 965.7 484.1 971.7 486.4 973.7 486.5 991.7 476 991.7 493.6 975.7 493.9 972.8 496.3 971.9 500.3 974.4 506.3 976.7 508.3 979.7 508.4 983.7 507.1 991.7 507 991.7 638.3 727.7 638.3 727.7 624.3 725.7 624.3 725 622.3 725 616.3 724.1 612.3 721.7 610 705.7 600.5 698.7 592.3 696.6 588.3 696.4 586.3 697.7 582.3 703.7 574.8 705.7 573.9 717.7 571.7 719.4 568.3 717.1 548.3 707.7 530.2 704.7 526.3 698.4 520.3 693.7 513.2 686.4 504.3 682.4 498.3 679.6 492.3 669 478.3 655.7 469.5 647.7 465.4 624.4 456.3 611.7 453.7 601.7 453.5 592.9 454.3 565.7 461.3 561.7 460.7 557.7 459 551.7 460.2 513.7 460.4 505.7 462.1 489.7 467.4 483.7 471.3 463.7 491.6 439.3 512.3 371.7 540.8 359.3 550.3 356.5 554.3 353.1 562.3 351.5 564.3 340.3 570.3 335.1 574.3 331.7 582.3 329.7 582.3 327.7 584.3 317.7 584.3 317.7 422.3z" fill="#00e6dc" fill-rule="evenodd"/>
<path d="M317.7 422.3 463.7 422.3 463.7 428.3 473.7 428.3 475.7 430.4 476 432.3 477.6 434.3 480.5 436.3 499.7 436.6 505.7 439.6 513.7 438.8 527.7 438.7 531.7 441.2 537.7 441.9 555.7 440.7 559.7 443.8 561.7 444.1 575.7 442.9 581.7 444.7 583.3 446.3 583.2 448.3 581.7 449.3 577.7 449.7 559.7 447.6 553.7 448.5 473.7 446.5 469.7 446.9 465.8 448.3 455 480.3 452 484.3 431.7 505.6 424.2 510.3 398.1 524.3 369.7 537.2 359.7 543 355.7 546.4 347 562.3 345.3 564.3 331.7 571.2 317.7 576.1 317.7 422.3zM766.6 422.3 947.3 422.3 947.4 438.3 949.3 446.3 949.1 466.3 947.7 470.3 945.7 471.9 939.7 470.3 923.7 471.1 919.7 469.6 911.7 462.5 910.1 462.3 909.7 460.8 905.7 460.3 905.7 458.3 903.7 456.3 903.7 454.3 901.7 452.3 901.7 446.3 899.7 444.3 899.7 438.3 897.7 436.3 897.7 432.3 897.7 436.3 895.7 438.3 895.7 440.3 893.7 442.3 893.7 446.3 891.7 448.3 891.7 452.3 889.7 454.3 889.7 456.3 887.7 458.3 883.7 458.7 878.7 462.3 869.7 466.1 861.7 466.5 849.7 464.3 831.7 464.6 825.7 462.1 801.7 463.2 789.7 460.4 781.7 460.6 775.7 461.9 759.7 458.4 753.7 458.6 749.7 459.8 745.7 459.7 741.5 458.3 744.6 456.3 749.8 454.3 761.2 432.3 764.2 428.3 766.6 422.3zM600 446.3 607.7 445.7 609.7 446.3 611.3 448.3 610 450.3 607.7 450.8 597.7 450.1 592.7 448.3 600 446.3zM630.1 448.3 635.7 447.9 637.7 448.6 639 450.3 637.7 452.3 635.7 452.8 625.7 451.7 621.6 450.3 630.1 448.3zM707.4 448.3 709.7 449 710.4 450.3 714.6 452.3 721.7 454.1 722.9 456.3 721.7 457.6 719.7 458.3 713.7 457.7 708.7 456.3 706.6 454.3 706 452.3 705.8 450.3 707.4 448.3zM655.5 450.3 663.7 449.1 666.7 450.3 667.4 452.3 665.7 454.3 663.7 454.9 657.1 454.3 651.5 452.3 655.5 450.3zM683.6 452.3 691.7 451.3 694.5 452.3 695.2 454.3 693.7 456 691.7 456.7 685.7 456 680.1 454.3 683.6 452.3zM755.5 468.3 789.7 467.7 831.7 469.3 899.7 473.6 921.7 473.7 937.7 476.3 939.6 478.3 939.1 480.3 933.7 492.7 931.7 494 919.7 485.4 913.7 482.8 855.7 482.4 823.7 492.7 821.4 494.3 818.2 498.3 813.8 508.3 814.7 510.3 815.7 510.5 816.4 512.3 817.7 512.9 818.4 514.3 821.5 516.3 825.7 517.5 875.7 522 913.7 517.8 922.2 516.3 926.8 514.3 929.1 512.3 933.7 503.8 935.7 501.3 937.7 500.4 957.7 501 959.7 502.4 964.5 516.3 967.7 530.3 969.7 535.2 975.7 543 979.7 547.1 983.7 548.4 987.7 548.7 989.7 550.3 989.7 554.3 991.7 554.3 991.7 638.3 736.4 638.3 735.4 634.3 735.2 614.3 730 608.3 728.7 604.3 727.7 597.2 722.7 590.3 722 588.3 722.9 584.3 727.6 572.3 724.5 546.3 723.3 544.3 717.7 539.3 715.7 536.5 713.4 532.3 711.4 526.3 702.9 518.3 701.6 516.3 701.5 512.3 703.2 502.3 704 500.3 705.7 498.8 717.7 494.6 729.4 492.3 732.4 490.3 732.8 488.3 731 482.3 731.8 480.3 739.7 472.4 743.7 470.2 755.5 468.3z" fill="#00b48c" fill-rule="evenodd"/>
<path d="M317.7 422.3 443.7 422.3 443.7 426.3 445.7 426.3 447.7 428.4 448.4 430.3 449.7 430.8 450.2 432.3 451.7 432.8 453 434.3 455.7 435.2 469.7 435.1 471.7 435.5 475.7 438 481.7 438.7 497.7 437.8 499.7 438.3 503.7 441.7 505.7 442.1 525.7 439.9 527.7 440.5 529.7 442.3 530.2 444.3 525.7 445.7 511.7 444.8 505.7 443.5 497.7 444.7 475.7 443.5 457.7 443.6 443.7 444.3 441.7 445.4 440.7 446.3 440.4 448.3 438.7 472.3 437.6 476.3 417.7 499.6 413.7 503 389.5 518.3 357.7 537.1 353.7 541.3 350.1 550.3 343.5 562.3 329.7 569.9 317.7 574.3 317.7 422.3zM551.3 442.3 555.7 442.7 557.2 444.3 556.4 446.3 553.7 447 544.5 446.3 538.3 444.3 551.3 442.3zM569.8 446.3 575.7 445.1 579.7 445.5 581.1 446.3 579.7 447.6 577.7 447.7 569.8 446.3zM604.2 448.3 608.3 448.3 604.2 448.3zM728.1 502.3 737.7 501.3 745.7 503 765.1 516.3 782.2 526.3 802.1 536.3 853.3 544.3 913.7 552.2 935.7 559 949.7 565.3 955.7 570.2 970.3 592.3 971.8 596.3 974.9 620.3 977.7 625 979.1 626.3 981.7 632.3 982.8 632.3 983.7 634.3 985.7 634.3 983.7 636.3 973.7 636.3 973.7 638.3 738 638.3 736.8 634.3 736.8 618.3 739.4 612.3 735.7 609.3 734.3 606.3 735.7 598.3 735.8 592.3 734.8 588.3 732.5 584.3 732.4 582.3 735.2 572.3 731.8 548.3 730.1 544.3 728.2 542.3 719.7 536.5 717.7 534.3 716.3 530.3 716.1 526.3 710 518.3 709.3 516.3 710.4 512.3 713.8 506.3 717.7 504.3 728.1 502.3z" fill="#00823c" fill-rule="evenodd"/>
<path d="M317.7 422.3 426.2 422.3 425.9 428.3 427.7 428.8 428.1 430.3 429.7 430.8 431 432.3 435.7 433.3 443.7 433.6 447.7 436.1 455.7 437.1 469.7 436.4 471.7 436.9 475.5 440.3 473.7 441.4 469.7 442.1 447.7 441.3 429.7 442 427 442.3 423.8 444.3 422.2 468.3 420.3 474.3 417.5 478.3 398.6 498.3 367.7 520.3 353.7 533.1 349.8 538.3 346.6 544.3 344.9 554.3 341.5 560.3 329.7 567.2 317.7 569 317.7 422.3zM483 440.3 497.7 439 500.5 440.3 500.8 442.3 497.7 443.3 487.7 442.6 485.3 442.3 483 440.3zM515.9 442.3 525.7 441.3 528 442.3 525.7 444.4 515.9 442.3zM549.4 444.3 553.7 443.8 555 444.3 553.7 445.1 549.4 444.3zM736 514.3 741.7 513 745.7 513.3 769.7 529.1 807.7 549 855.7 560.8 911.7 568.7 939.7 579.7 943 582.3 945.7 585.9 953 600.3 953.7 606.3 952.9 628.3 953.7 633.6 955.3 634.3 955.7 638.3 739.5 638.3 738.1 632.3 738.4 618.3 739.7 616.2 748.6 614.3 747.6 612.3 742.4 610.3 740.3 608.3 740.1 606.3 742 600.3 743 592.3 742.6 574.3 741.7 564.3 739 550.3 736.7 544.3 733.7 540.9 722.2 532.3 721.3 530.3 722.3 524.3 723.9 520.3 727.7 517.4 736 514.3zM759.7 614.1 758 614.3 758.6 616.3 765.3 616.3 761.7 614.3 759.7 614.1z" fill="#287d0a" fill-rule="evenodd"/>
<path d="M317.7 422.3 411.7 422.3 411.8 426.3 419.7 434.2 441.7 434.6 443.7 435.1 446.9 438.3 441.7 439.9 419.7 439.6 413.8 440.3 409.4 442.3 408.9 462.3 407.5 466.3 384.4 494.3 359.7 512.7 352.2 526.3 345.7 535.3 343.7 536.4 334.4 538.3 334.8 540.3 341.2 548.3 341.8 552.3 341.2 554.3 338.7 558.3 333.5 562.3 329.7 564.2 317.7 564.1 317.7 422.3zM459.9 438.3 469.7 437.5 471.8 438.3 471.9 440.3 469.7 440.8 461.5 440.3 459.9 438.3zM494.3 440.3 498.1 440.3 497.7 441 494.3 440.3zM759.3 542.3 761.7 540.9 769.7 543 787.2 550.3 817.7 567.1 855.7 581.7 875.7 588.6 894.6 596.3 913.4 608.3 920.3 614.3 921.7 616.6 922.5 620.3 922.9 632.3 921.7 634.3 917.7 634.3 917.7 638.3 745.8 638.3 745.3 628.3 744.1 622.3 745.7 621.3 745.8 620.3 747.8 618.3 751 616.3 753.7 615.9 757.7 618 761.7 618.6 775.7 617.8 784.4 616.3 778.7 614.3 751.7 610.8 746.4 608.3 746.3 606.3 748.8 596.3 749.4 590.3 749.2 572.3 747.6 552.3 759.3 542.3zM793.7 615.7 792.2 616.3 792.3 618.3 795.7 620 810.6 618.3 803.3 616.3 793.7 615.7zM831.7 619 829.9 620.3 831.7 621 837.7 620.3 831.7 619zM865.7 622 864.9 622.3 865.7 622.8 869.2 622.3 865.7 622z" fill="#82b400" fill-rule="evenodd"/>
<path d="M317.7 422.3 397.7 422.3 397.3 426.3 398.1 428.3 399.7 428.9 400.4 430.3 405.7 432.3 413.7 431.7 415.7 432.7 418.5 436.3 415.7 437.8 401.4 438.3 396.4 440.3 395.8 460.3 395.4 462.3 393 466.3 375.5 488.3 353 506.3 351 510.3 347.7 522.7 343.7 530.3 339.7 533 335.7 533.8 331.7 533.2 325.7 536.1 323.7 536.3 317.7 536.3 317.7 422.3zM434.3 436.3 441.7 435.8 443.3 436.3 443 438.3 441.7 438.6 436.8 438.3 434.3 436.3zM326.2 540.3 329.7 539.8 331.7 541.1 338 548.3 338.3 552.3 335.6 556.3 329.7 561.6 327.6 562.3 317.7 562.5 317.7 541.3 326.2 540.3zM763.5 568.3 763.7 566.4 765.7 566.3 773.7 568.5 781.7 572.1 790.7 578.3 808.3 586.3 813.2 590.3 817.6 596.3 817.7 597.8 819.3 598.3 819.6 602.3 812.7 610.3 807.7 611.9 785.7 612.6 773.7 611.6 767.2 610.3 758.4 606.3 755.7 604 754.7 598.3 755.7 581.6 757.7 575.4 759.1 574.3 761.7 569.3 763.5 568.3z" fill="#d8e610" fill-rule="evenodd"/>
<path d="M317.7 422.3 383.8 422.3 384 424.3 385.7 424.8 386.1 426.3 387.7 426.9 391.7 433.6 393.1 434.3 384.3 438.3 383.8 440.3 383.8 458.3 382.7 462.3 381.3 464.3 366 484.3 347 498.3 342.8 512.3 337.4 524.3 332.9 528.3 325.7 530.9 322.3 530.3 317.7 526.3 317.7 422.3zM396.8 434.3 401.5 434.3 396.8 434.3zM406.9 434.3 411.7 433.5 415.4 434.3 413.7 436.5 410.7 436.3 406.9 434.3zM323.6 542.3 328.5 542.3 331.5 544.3 334 548.3 333.9 552.3 331.4 556.3 327.7 559.2 317.7 560.4 317.7 542.6 323.6 542.3zM775.9 604.3 779.7 602.6 781.7 602.4 783.7 604.3 782.6 606.3 777.7 607.4 774.6 606.3 775.9 604.3z" fill="#ffee00" fill-rule="evenodd"/>
<path d="M317.7 422.3 377.5 422.3 376.5 428.3 377.7 431.2 379.7 431.6 385.7 430.5 388.5 432.3 387.3 434.3 379.7 434.8 378.1 436.3 378.6 456.3 378.4 458.3 376.6 462.3 362.3 482.3 357.7 485.5 341.6 494.3 338 504.3 333.7 510.6 330.2 522.3 327.7 524.9 325.5 520.3 325.3 506.3 323.7 505.2 317.7 507.6 317.7 422.3zM317.7 544.3 317.7 543.5 321.7 543.4 327.7 544.3 330 546.3 330.7 548.3 330.6 552.3 329.6 554.3 327.7 555.9 321.7 558 317.7 558.4 317.7 544.3z" fill="#ffc800" fill-rule="evenodd"/>
<path d="M317.7 422.3 375.9 422.3 372.4 436.3 374 454.3 373.8 458.3 361.4 478.3 356.8 482.3 337.7 489.3 335.7 491.7 331.7 500.7 329.7 501.7 325.7 502.1 317.7 505.6 317.7 422.3zM327.1 508.3 327.7 506.6 329.7 506.9 330.1 508.3 327.7 519.5 327.1 508.3zM317.7 546.3 317.7 544.5 323.7 544.7 325.7 545.4 327.1 546.3 328.3 548.3 328.1 552.3 325.7 554.7 321.7 556.3 317.7 556.9 317.7 546.3z" fill="#ffaa00" fill-rule="evenodd"/>
<path d="M317.7 422.3 369.7 422.3 368.8 426.3 367.7 427.8 367.1 432.3 369.7 454.3 369.6 456.3 368 460.3 359.7 474.3 356.6 478.3 351.8 480.3 335.7 484.4 333.4 486.3 332.1 492.3 330.3 496.3 329.7 497.3 327.7 498.1 321.7 496.3 319.7 494.3 319.7 490.3 317.7 490.3 317.7 422.3zM317.7 546.3 323.7 546.5 325.7 548.8 325.1 552.3 321.7 554.4 317.7 555 317.7 546.3z" fill="#ff7800" fill-rule="evenodd"/>
<path d="M317.7 422.3 362.7 422.3 362.9 432.3 365.8 452.3 365 456.3 354.6 474.3 351.2 476.3 333.7 481.7 330.5 486.3 329.7 490.7 328.2 484.3 326.7 482.3 323.7 481.3 317.7 481.3 317.7 422.3z" fill="#ff4600" fill-rule="evenodd"/>
<path d="M317.7 422.3 358.7 422.3 358.5 428.3 361.8 450.3 360.8 454.3 351.7 470.5 349.3 472.3 333.7 478.4 329.7 481.1 325.7 478.6 317.7 478.3 317.7 422.3z" fill="#ff0a00" fill-rule="evenodd"/>
<path d="M317.7 422.3 354.6 422.3 353 428.3 356.4 446.3 356.3 450.3 355.6 452.3 347.7 466.5 341.6 470.3 329.7 475.9 317.7 475.3 317.7 422.3z" fill="#dc0000" fill-rule="evenodd"/>
<path d="M317.7 422.3 345.9 422.3 349.7 444.3 349.7 448.3 343.7 460.8 340 464.3 333.7 467.9 329.7 463.7 325.2 466.3 323.7 468 317.7 468.2 317.7 422.3z" fill="#b40000" fill-rule="evenodd"/>
<path d="M331.1 428.3L323.7 571.9M351.1 430L344.4 573.6M371.1 431.7L365 575.2M391.1 433.4L385.7 576.9M411.1 435.1L406.3 578.6M431.1 436.8L427 580.2M451.1 438.5L447.7 581.9M471.1 440.2L468.3 583.6M491 441.9L489 585.3M511 443.6L509.6 586.9M531 445.3L530.3 588.6M551 447L551 590.3M571 448.7L571.6 592.1M591 450.4L592.2 594.1M611 452L612.9 596.1M631 453.7L633.5 598M651 455.3L654.1 600M671 457L674.8 602M691 458.7L695.4 604M711 460.6L716 605.9M730.9 462.9L736.3 609.6M750.8 465.2L756.7 613.3M770.8 467.5L777.3 615.6M790.7 469.3L797.9 617.8M810.8 470.8L818.5 620M830.8 472.3L839.2 621.5M850.8 473.8L859.8 622.9M870.8 475.3L880.5 624.3M890.8 476.7L901.2 625.8M910.8 478L921.9 627.2M930.9 478.5L942.5 628.6M950.9 479.1L963.2 630.1M971 479.6L983.9 631.5M331.1 428.3L691 458.7L711 460.6L770.8 467.5L790.7 469.3L910.8 478L971 479.6M330.2 446.2L691.5 476.8L711.6 478.8L771.6 486L791.6 487.9L912.2 496.7L972.6 498.6M329.2 464.2L692.1 495L712.2 497L752.3 502.2L772.4 504.5L812.7 508.1L913.6 515.3L974.2 517.6M328.3 482.1L551 500.7L692.6 513.1L712.9 515.1L753 520.7L773.2 523L813.7 526.8L915 534L975.8 536.6M327.4 500.1L551 518.7L693.2 531.3L713.5 533.3L753.8 539.2L794.3 543.6L814.6 545.4L916.3 552.6L977.5 555.5M326.5 518L551 536.6L693.7 549.5L714.1 551.5L754.5 557.8L815.6 564.1L917.7 571.3L979.1 574.5M325.6 536L551 554.5L694.3 567.6L714.8 569.6L755.2 576.3L816.6 582.7L919.1 589.9L980.7 593.5M324.6 554L551 572.4L694.8 585.8L715.4 587.8L755.9 594.8L817.5 601.4L920.5 608.5L982.3 612.5M323.7 571.9L551 590.3L716 605.9L756.7 613.3L818.5 620L983.9 631.5" fill="none" stroke="#000" stroke-opacity="0.6" stroke-width="0.6"/>
</g>
<clipPath id="c13"><path d="M323.7 571.9 560 591 727 607 744.7 612 745.5 626 727 619.5 560 605 320 586.5 306.7 582.3z"/></clipPath>
<g clip-path="url(#c13)">
<path d="M323.7 571.9 560 591 727 607 744.7 612 745.5 626 727 619.5 560 605 320 586.5 306.7 582.3z" fill="#3c0aaa" stroke="#3c0aaa" stroke-width=".6"/>
<path d="M314 565.9 374.1 565.9 372.9 573.4 374.2 574.9 378.7 575.4 381.7 576.5 395.2 576.6 401.2 578.1 403.3 577.9 404.5 576.4 395 565.9 752.2 565.9 752.2 633.4 464 633.4 431.2 601.2 426.7 598 425.6 595.9 426.7 592.9 419.2 590.6 380.8 585.4 321.7 574.9 318 571.9 314 565.9zM327.5 585.4 333.7 584.8 338.2 586.2 347.2 586.2 351.7 587.6 362.2 587.6 367.9 589.9 368.4 591.4 367.8 595.9 363.7 610.9 363.3 615.4 359.2 630.4 359 633.4 355 633.4 347.6 619.9 342.3 612.4 328.8 589.9 327.2 586.9 327.5 585.4z" fill="#1e0adc" fill-rule="evenodd"/>
<path d="M590.1 565.9 752.2 565.9 752.2 633.4 577.1 633.4 577.2 630.4 579 625.9 579.2 621.4 581.2 611.9 575.2 610.7 572.2 609.3 561.7 609.3 557.2 607.4 546.7 607.5 542.2 605.3 531.7 606 529.5 604.9 530.2 603.2 540.7 602.4 548.5 600.4 551.9 598.9 555.1 595.9 558.7 594.9 586.8 595.9 588.4 586.9 588.7 580.9 590 576.4 590.1 565.9z" fill="#0000ff" fill-rule="evenodd"/>
<path d="M730.6 567.4 731.2 565.9 752.2 565.9 752.2 633.4 579.7 633.4 581.4 625.9 581.6 621.4 584.3 610.9 585.7 608.9 600.7 608.4 612.7 606.8 638.2 608.6 680.2 606.8 722.2 608.6 723.7 608 725.7 598.9 725.8 594.4 728.7 582.4 730.6 567.4z" fill="#0a64ff" fill-rule="evenodd"/>
<path d="M677.4 612.4 729.7 613.6 746.2 614.6 752.2 614 752.2 633.4 666.7 633.4 668.2 624.4 667.9 619.9 666.7 617.6 663.7 616.8 656.2 616.6 654.1 615.4 662.2 613.5 677.4 612.4z" fill="#00beff" fill-rule="evenodd"/>
<path d="M701.4 618.4 708.7 617.4 744.7 619.3 752.2 618.5 752.2 633.4 669.3 633.4 670.6 628.9 671.2 620.7 674.2 620 680.2 620 686.2 620.9 699.7 620.3 701.4 619.9 701.4 618.4z" fill="#00e6dc" fill-rule="evenodd"/>
<path d="M323.7 571.9L306.7 582.3M342.9 573.4L326.1 587M362.1 575L346.1 588.5M381.2 576.5L366.2 590.1M400.4 578.1L386.2 591.6M419.6 579.6L406.2 593.1M438.8 581.2L426.3 594.7M457.9 582.7L446.3 596.2M477.1 584.3L466.3 597.8M496.3 585.8L486.3 599.3M515.5 587.4L506.4 600.9M534.6 588.9L526.4 602.4M553.8 590.5L546.4 604M573 592.2L566.4 605.6M592.1 594.1L586.4 607.3M611.3 595.9L606.5 609M630.4 597.7L626.5 610.8M649.6 599.6L646.5 612.5M668.7 601.4L666.5 614.2M687.9 603.2L686.5 616M707 605.1L706.5 617.7M726.2 606.9L726.5 619.5M744.7 612L745.5 626M323.7 571.9L573 592.2L726.2 606.9L744.7 612M306.7 582.3L326.1 587L566.4 605.6L726.5 619.5L745.5 626" fill="none" stroke="#000" stroke-opacity="0.5" stroke-width="0.5"/>
</g>
<clipPath id="c14"><path d="M312.5 426.4 351 401.2 373 400.5 387 405.2 600 425.4 780 442 860 448.5 985.8 457.5 957.2 479.6 910 478 860 474.5 780 468.5 700 459.4 560 447.8 445 438 331.1 428.3z"/></clipPath>
<g clip-path="url(#c14)">
<path d="M312.5 426.4 351 401.2 373 400.5 387 405.2 600 425.4 780 442 860 448.5 985.8 457.5 957.2 479.6 910 478 860 474.5 780 468.5 700 459.4 560 447.8 445 438 331.1 428.3z" fill="#3c0aaa" stroke="#3c0aaa" stroke-width=".6"/>
<path d="M306.5 394.5 325.2 394.5 325.2 417.3 325.7 417.4 331.3 414.9 336.5 411.5 344.7 408.9 350.9 405.8 367.7 406.1 372.5 406.3 386.9 410.8 400.1 412.7 462.5 416.4 537.1 422.1 590.9 424.9 599.6 424.5 599.6 394.5 992.9 394.5 992.9 485.7 306.5 485.7 306.5 394.5z" fill="#1e0adc" fill-rule="evenodd"/>
<path d="M306.5 394.5 317.5 394.5 317.5 422.1 318.5 422.3 332.9 416.1 337.7 411.9 352.1 408.3 372.5 409.2 386.9 413.7 400.1 415.6 461.3 418.8 614.9 429.4 622.1 428.5 625 426.9 625 394.5 992.9 394.5 992.9 485.7 338.9 485.7 338.9 430.5 334.1 430.5 332.9 429.3 328.1 429.3 327.5 428.1 318.5 428.1 317.3 426.9 313.7 426.9 312.5 428.1 306.5 428.1 306.5 394.5z" fill="#0000ff" fill-rule="evenodd"/>
<path d="M650 394.5 992.9 394.5 992.9 485.7 349.5 485.7 349.5 430.5 348.8 429.3 344.1 426.9 317.3 426.4 313.3 425.7 332.9 417.5 336.2 413.7 338.9 412 350.9 410.3 372.5 411.6 386.9 415.7 400.1 417.6 490.1 422.3 613.7 431.4 646.1 432.3 650 431.7 650 394.5z" fill="#0a64ff" fill-rule="evenodd"/>
<path d="M675 394.5 992.9 394.5 992.9 485.7 359 485.7 358.9 430.5 356.9 428.1 350.9 426.4 316.4 425.7 334.1 418.2 335.4 417.3 337.1 413.7 338.9 412.6 344.9 411.7 372.5 413.9 386.9 417.9 400.1 419.8 437.3 420.7 467.3 422.3 539.3 427 652.1 435.6 666.5 436.5 678.5 436.3 682.5 435.3 676.2 432.9 675 431.7 675 394.5z" fill="#00beff" fill-rule="evenodd"/>
<path d="M699.9 394.5 992.9 394.5 992.9 485.7 368.6 485.7 368.6 431.7 367.7 429.3 366.6 428.1 364.1 427.4 350.9 424.9 326.9 425 323.4 424.5 336.5 418.8 337.2 417.3 337.1 414.9 337.9 413.7 340.1 412.6 343.7 412.1 353.3 414.9 372.5 416.7 386.9 420.3 400.1 422.3 443.3 422.8 492.5 425.1 540.5 428.2 674.9 439.1 704.9 440.7 708.3 440.1 706.6 437.7 699.9 434.1 699.9 394.5z" fill="#00e6dc" fill-rule="evenodd"/>
<path d="M712 394.5 992.9 394.5 992.9 485.7 378.1 485.7 378.1 429.3 372.5 426.6 361.1 424.5 350.9 423.5 334.1 424.2 330.4 423.3 340.6 418.5 338.9 417.3 337.8 414.9 340.1 413 343.7 412.5 347.6 413.7 349.7 416.8 372.5 419.2 386.9 422.8 400.1 425 460.1 425 539.3 429.2 634.7 437.7 714.5 446.3 732.5 447.5 734.1 447.3 724.3 444.9 725.5 442.5 724.1 441.3 712 435.3 712 394.5zM738.5 448.2 742.4 448.5 738.5 448.2zM750.5 449.7 752.2 449.7 750.5 449.7zM848.9 458.1 848.6 460.5 856.1 460.8 862.1 461.9 873.3 461.7 861.1 459.3 851.3 459.1 848.9 458.1zM878.9 462.6 884.1 462.9 878.9 462.6z" fill="#00b48c" fill-rule="evenodd"/>
<path d="M724 394.5 992.9 394.5 992.9 485.7 387.6 485.7 387.7 432.9 390.5 428.7 394.1 427.8 424.1 427.1 462.5 427.4 542.4 430.5 595.7 435.3 714.5 448.5 859.7 462.9 905.3 465.9 918.5 465.9 919.7 465.3 911.3 464.3 899.3 461.7 779.3 450.3 751.9 446.1 737.3 441.8 724 436.5 724 394.5zM339.4 413.7 343.7 412.9 346.3 413.7 347.2 414.9 346.1 416.7 342.5 417.5 338.9 416.1 338.5 414.9 339.4 413.7zM347.3 419.7 350.9 419.4 371.9 422.1 366.5 422.7 350.9 422.2 336.5 423.6 334.7 423.3 340.1 420.8 347.3 419.7z" fill="#00823c" fill-rule="evenodd"/>
<path d="M736 394.5 992.9 394.5 992.9 485.7 397.1 485.7 397.1 434.1 399.6 431.7 401.3 431.3 422.9 429.4 478.1 430 547.7 433.3 600.5 437.5 860.2 464.1 911.3 467.9 957.6 470.1 951.4 467.7 920.9 464.3 900.5 461 779.3 448.7 758.1 444.9 739.7 439.2 736 437.7 736 394.5zM340.2 413.7 343.7 413.3 346.1 414.9 344.9 416.3 341.3 416.7 339.9 416.1 339.2 414.9 340.2 413.7z" fill="#287d0a" fill-rule="evenodd"/>
<path d="M748 394.5 992.9 394.5 992.9 485.7 412 485.7 412 435.3 417.1 432.9 436.1 431.3 460.1 431.2 540.5 434.3 599.3 438.8 700.1 448.4 859.7 464.8 949.7 470.7 968.6 470.1 949.7 466.5 928.1 464.2 899.3 459.9 820.1 452.3 788.3 448.5 768.5 445 751.2 440.1 748 438.9 748 394.5zM341.3 413.7 343.7 413.7 345.2 414.9 343.7 416 341.3 416.1 339.9 414.9 341.3 413.7z" fill="#82b400" fill-rule="evenodd"/>
<path d="M760 394.5 992.9 394.5 992.9 485.7 429.1 485.7 429.5 436.5 436.9 434.1 450.5 433.1 540.5 435.6 600.5 440.2 700.1 449.2 859.7 465.6 910.1 469.2 949.7 471.2 966.5 471.2 974.9 470.5 976.1 470.1 963 467.7 901 459.3 823.7 451.8 797.1 448.5 778.1 445.3 763.2 441.3 760 440.1 760 394.5zM341 414.9 342.5 414.3 344 414.9 342.5 415.4 341 414.9z" fill="#d8e610" fill-rule="evenodd"/>
<path d="M769.2 394.5 992.9 394.5 992.9 485.7 446.3 485.7 446.3 438.9 447.2 437.7 449.9 436.5 460.1 435.2 479.3 435.2 539.3 437.3 599.3 441.4 700.1 449.9 859.7 466.3 910.1 469.9 956.9 472 986.9 471.3 983.1 470.1 968.1 467.7 901.7 458.7 808.1 448.9 783.7 444.9 770.1 441.3 769.2 440.1 769.2 394.5z" fill="#ffee00" fill-rule="evenodd"/>
<path d="M778.5 394.5 992.9 394.5 992.9 470 985.7 469.6 900.5 457.9 820.1 449.6 796.9 446.1 780.8 442.5 778.5 441.3 778.5 394.5zM474.1 437.7 504.5 437.5 527.3 438.3 600.5 442.8 700.1 450.7 859.7 467 910.1 470.6 956.9 472.6 992.9 472.7 992.9 485.7 465 485.7 465 440.1 474.1 437.7z" fill="#ffc800" fill-rule="evenodd"/>
<path d="M787.7 394.5 992.9 394.5 992.9 469.3 986.3 468.9 902.9 457.5 820.1 448.8 803.3 446 787.7 442.5 787.7 394.5zM499.5 440.1 539.3 440.1 660.5 448.5 701.3 451.7 859.7 467.8 908.9 471.3 956.9 473.3 992.9 473.7 992.9 485.7 490 485.7 490 442.5 492.7 441.3 499.5 440.1z" fill="#ffaa00" fill-rule="evenodd"/>
<path d="M796.9 394.5 992.9 394.5 992.9 468.4 911.3 457.8 825.1 448.5 798.4 443.7 796.9 442.5 796.9 394.5zM525.2 442.5 540.5 442.2 574.1 443.7 700.1 452.6 859.7 468.5 902.9 471.6 956.9 474.1 992.9 474.4 992.9 485.7 515 485.7 515 444.9 516.7 443.7 525.2 442.5z" fill="#ff7800" fill-rule="evenodd"/>
<path d="M806.2 394.5 992.9 394.5 992.9 467.4 914.9 457.4 841.8 449.7 820.1 446.8 806.2 443.7 806.2 394.5zM540.4 446.1 570.5 445.7 596.9 446.8 691.7 453.2 859.7 469.4 910.1 472.9 956.9 474.8 992.9 475.2 992.9 485.7 540.2 485.7 540.4 446.1z" fill="#ff4600" fill-rule="evenodd"/>
<path d="M815.4 394.5 992.9 394.5 992.9 466.2 920.9 457 858.6 450.9 815.6 444.9 815.4 394.5zM590 450.9 599.3 449.9 613.7 450.1 700.1 455.4 781.7 463.5 822.1 466.5 859.7 470.3 910.1 473.9 956.9 475.7 992.9 476.1 992.9 485.7 590 485.7 590 450.9z" fill="#ff0a00" fill-rule="evenodd"/>
<path d="M833.3 394.5 992.9 394.5 992.9 464.1 957 460.5 929.3 456.6 859.7 449.8 833.3 446.1 833.3 394.5zM680 458.1 700.1 458.2 720.5 459.6 782.9 465.6 910.1 474.9 956.9 476.7 992.9 476.9 992.9 485.7 680 485.7 680 458.1z" fill="#dc0000" fill-rule="evenodd"/>
<path d="M860.6 394.5 992.9 394.5 992.9 461.8 954.5 456.6 875.2 449.7 871.7 448.8 860.7 448.5 860.6 394.5zM846.7 473.7 859.7 473.8 916.1 477.5 956.9 478.9 992.9 479 992.9 485.7 846.7 485.7 846.7 473.7z" fill="#b40000" fill-rule="evenodd"/>
<path d="M345 406L320 427M364.8 402.1L339.5 429M384.1 404.2L359 430.7M404 406.8L378.5 432.3M424.1 408.7L398 434M444.1 410.6L417.5 435.7M464.2 412.5L437 437.3M484.2 414.4L456.5 439M504.3 416.3L476 440.6M524.3 418.2L495.5 442.3M544.4 420.1L515 444M564.4 422L534.5 445.6M584.5 423.9L554 447.3M604.5 425.8L573.5 448.9M624.6 427.7L593 450.5M644.6 429.5L612.5 452.1M664.7 431.4L632 453.8M684.7 433.2L651.5 455.4M704.8 435.1L671 457M724.8 436.9L690.5 458.6M744.9 438.8L710 460.5M764.9 440.6L729.4 462.7M785 442.4L748.9 465M805.1 444L768.3 467.2M825.1 445.7L787.8 469.1M845.2 447.3L807.3 470.5M865.3 448.9L826.8 472M885.4 450.3L846.3 473.5M905.5 451.8L865.8 474.9M925.5 453.2L885.4 476.3M945.6 454.6L904.9 477.6M965.7 456.1L924.4 478.6M985.8 457.5L944 479.3M345 406L364.8 402.1L404 406.8L604.5 425.8L785 442.4L865.3 448.9L985.8 457.5M336.7 413L356.3 411.1L395.5 415.3L713.4 444.1L792.8 451.7L852.5 456.6L932 462.3L971.9 464.8M328.3 420L347.9 420L387 423.8L701.9 451.4L800.2 461.3L918.5 470L957.9 472M320 427L339.5 429L690.5 458.6L787.8 469.1L904.9 477.6L944 479.3" fill="none" stroke="#000" stroke-opacity="0.55" stroke-width="0.5"/>
</g>
<clipPath id="c15"><path d="M740 612 816.7 619.9 983.5 631.2 983.1 618.2 1000.3 619.5 967.9 643.1 816.7 629.6 739 626z"/></clipPath>
<g clip-path="url(#c15)">
<path d="M740 612 816.7 619.9 983.5 631.2 983.1 618.2 1000.3 619.5 967.9 643.1 816.7 629.6 739 626z" fill="#0a64ff" stroke="#0a64ff" stroke-width=".6"/>
<path d="M752.8 606 1006.6 606 1006.6 649.2 733 649.2 733 615.6 737.8 616.2 745 614.2 752.2 613.1 752.8 612 752.8 606z" fill="#00beff" fill-rule="evenodd"/>
<path d="M757 606 1006.6 606 1006.6 649.2 733 649.2 733 620.1 735.4 621.1 737.8 621 745 617.1 753.4 615.2 763 614.3 768.1 613.2 769.9 612 770.2 608.4 757 608.4 757 606z" fill="#00e6dc" fill-rule="evenodd"/>
<path d="M783.6 606 1006.6 606 1006.6 649.2 747.7 649.2 747.8 642 748.9 639.6 748.8 628.8 741.9 625.2 741.6 624 742.8 621.6 746.2 619.2 751 617.8 767.8 615.7 781 614.9 781.6 614.4 783.6 606z" fill="#00b48c" fill-rule="evenodd"/>
<path d="M784.4 606 1006.6 606 1006.6 649.2 748.5 649.2 748.5 643.2 749.6 639.6 749.7 628.8 748.6 626.9 745.6 625.2 745.3 624 745.9 622.8 749.8 620.3 753.4 619.1 771.4 616.9 787 616.6 794.5 615.6 792.8 614.4 783.4 614.3 782.7 613.2 784.4 606z" fill="#00823c" fill-rule="evenodd"/>
<path d="M788.2 606 1006.6 606 1006.6 649.2 748.9 649.2 748.9 643.2 750.1 639.6 750.1 628.8 749.8 626.7 748.6 625.2 748.9 624 751 622.5 755.8 620.3 774.3 618 797.8 618 806.2 617.1 816.7 614.4 819.2 612 819.4 610.8 821.8 610.8 820.6 609.6 788.2 609.6 788.2 606zM785.5 610.8 787 610 787.6 610.8 787 610.8 786.8 612 784.6 613.7 783.4 613.2 784.6 610.9 785.5 610.8z" fill="#287d0a" fill-rule="evenodd"/>
<path d="M831.1 606 1006.6 606 1006.6 649.2 749.3 649.2 749.3 643.2 750.5 639.6 750.5 627.6 751 625.8 753.4 623.9 760.6 621.1 778.6 619 809.8 619.6 821.5 619.2 822.3 618 829 616.3 829.7 610.8 831.1 606z" fill="#82b400" fill-rule="evenodd"/>
<path d="M831.8 606 1006.6 606 1006.6 649.2 749.7 649.2 749.7 643.2 750.8 639.6 751 627.6 752.2 626.5 761.8 622.6 784.6 620 842.2 622.2 850.3 621.6 841.3 619.2 840.1 618 842.4 616.8 831.4 616.3 829.9 613.2 831.8 606zM760.6 627.5 764.2 627.6 761.8 627.1 760.6 627.5z" fill="#d8e610" fill-rule="evenodd"/>
<path d="M832.3 606 838.3 606 847.3 614.4 839.8 615.7 831.4 615.5 830.5 614.4 830.4 612 832.3 606zM918.5 607.2 919.1 606 1006.6 606 1006.6 649.2 911.1 649.2 911.3 644.4 912.3 642 911.8 640.3 880.6 637.6 877.8 638.4 878.8 639.6 890.5 649.2 750.3 649.2 752 627.6 758.2 626.3 759.4 626.6 760.6 628.7 765.4 628.5 767.1 627.6 761.5 625.2 765.4 623.7 789.4 621 872.2 624.7 875.1 624 874.5 622.8 858.5 619.2 858 618 865.8 616.8 883 616.1 893.8 615.9 897.4 616.9 916.6 616.5 918.3 610.8 918.5 607.2z" fill="#ffee00" fill-rule="evenodd"/>
<path d="M832.3 607.2 833.4 606 835.7 606 843.2 613.2 842.1 614.4 839.8 615.2 831.4 615.1 830.6 612 832.3 607.2zM919.6 606 1006.6 606 1006.6 648.7 985 632.6 983.8 632.3 983.1 633.6 984 636 994.2 649.2 911.7 649.2 911.9 644.4 912.9 642 912.9 640.8 911.8 639.6 879.4 637 876.7 637.2 875.2 638.4 887.5 649.2 753.4 649.2 753.4 645.6 754.6 644.4 754.6 631.2 755.8 631.2 757 632.4 769 632.4 769.8 631.2 769.7 628.8 768.4 626.4 768.6 625.2 770.2 624.7 788.2 622.3 794.2 622.1 885.4 627.1 887.9 626.4 889.4 624 889.2 622.8 875.5 619.2 876.1 618 892.6 616.7 897.4 617.6 916.6 617.2 917.7 615.6 919.6 606zM776.2 628.8 773.8 632.4 772.6 632.4 773.8 633.6 775 633.6 775 632.4 776.2 632.3 776.5 631.2 780 628.8 777.4 628.2 776.2 628.8z" fill="#ffc800" fill-rule="evenodd"/>
<path d="M833.4 607.2 837.4 609.3 841.2 613.2 841.1 614.4 833.8 615.1 831.4 614.8 830.9 612 832.6 607.5 833.4 607.2zM920.1 606 1006.6 606 1006.6 647.8 983.8 631.1 981.5 633.6 981.3 637.2 989.8 649.2 912.1 649.2 912.1 645.6 913.2 640.8 911.8 639.3 878.2 636.6 872.2 636.7 871.6 637.2 874.6 640.3 883 646.5 885.2 649.2 777.1 649.2 777.2 643.2 778.3 639.6 778.4 631.2 779.8 629.4 783.6 628.8 778.6 627.3 773.1 627.6 772.9 626.4 773.8 626 790.6 623.4 797.8 623.2 824.2 625.2 849.4 626 885.4 629.2 898.6 629.4 900.6 628.8 903.9 622.8 902.2 621.6 892.6 619.2 893.8 618.4 897.4 618.8 916.6 617.8 917.9 616.8 920.1 606zM794.2 629.9 795.2 630 794.2 629.9zM823 632.1 822.1 632.4 823 633 824.7 632.4 823 632.1z" fill="#ffaa00" fill-rule="evenodd"/>
<path d="M919.8 607.2 920.5 606 1006.6 606 1006.6 647.4 983.8 630.5 982.4 631.2 979 635.2 978.5 637.2 987.2 649.2 912.3 649.2 912.4 645.6 913.5 640.8 913 639.4 911.8 638.9 872.2 635.8 870.5 636 870.5 637.2 884.5 649.2 777.8 649.2 777.8 643.2 778.9 639.6 779 631.2 779.8 629.9 781 629.5 786.8 628.8 781.6 626.4 793 624.6 797.8 624.2 829 626.6 850.6 627 894.4 631.2 911.8 631.7 913.2 631.2 914.1 630 918.3 622.8 917.7 621.6 911 619.2 917.8 618.2 919.8 607.2zM793 629.4 792.7 630 794.2 630.6 799.9 630 793 629.4zM808.6 631 814.6 632.2 815.8 632.2 816.4 631.2 809.8 630.6 808.6 631zM820.6 632.2 820.2 632.4 821.4 633.6 823 634.4 826.4 632.4 823 631.4 820.6 632.2zM833 608.4 833.8 607.9 837.4 610.2 840.3 613.2 839.8 614.4 832.6 614.9 831.4 614.4 831.2 612 833 608.4z" fill="#ff7800" fill-rule="evenodd"/>
<path d="M920.1 607.2 920.8 606 1006.6 606 1006.6 646.9 983.8 629.7 982.6 630.2 978.4 634.8 977.7 637.2 986.5 649.2 912.6 649.2 912.7 645.6 913.8 642 913 639 902.2 637.5 871 635.3 869.2 636 870.6 638.4 883.6 649.2 778.2 649.2 778.3 643.2 779.4 639.6 779.8 630.7 781 630 789.3 628.8 789.2 627.6 790.6 626.7 796.6 625.6 833.8 628 856.6 628.3 908.2 633.6 917.8 634.2 925 633.9 926.8 632.4 931.9 624 932.4 621.6 928.6 620.1 920.2 618.8 919 618 918.7 614.4 919.6 612 920.1 607.2zM793 628.1 792 628.8 792.1 630 794.2 631.1 805.4 630 793 628.1zM808.6 629.8 807.8 631.2 808.6 631.9 814.6 633.3 823 636.4 825.4 633.4 830 632.4 824.2 630.8 808.6 629.8zM842.2 633.2 841.4 633.6 842.2 633.8 844 633.6 842.2 633.2zM833.2 609.6 833.8 608.9 835.3 609.6 839.2 613.2 835.3 614.4 832.2 614.4 831.4 612.4 833.2 609.6z" fill="#ff4600" fill-rule="evenodd"/>
<path d="M921.1 606 1006.6 606 1006.6 646.3 983.8 628.9 982.6 629.4 977.5 634.8 977 637.2 979.9 642 985.6 649.2 912.9 649.2 912.9 645.6 914.1 640.8 913.9 639.6 911.8 638.1 871 634.8 867.4 635.9 865 634.8 857.8 633.9 856.6 634.2 856.6 635.1 861.4 635 867.4 637.6 880.5 649.2 778.9 649.2 778.9 643.2 780 639.6 780.1 632.4 781 630.7 790.6 629.7 793 631.6 794.2 631.8 806.2 631 808.6 632.7 813.4 633.6 823 637.8 824.2 637.3 824.8 634.8 826.6 633.4 835.8 632.4 825.4 630.3 807.4 628.9 805 627.9 797.8 627.4 839.8 629.5 856.6 629.3 922.6 636.1 932.2 636.6 938.2 636.1 947.1 621.6 945 620.4 937 619.7 933.4 618.3 920.2 617.7 919.1 616.8 918.9 614.4 921.1 606zM841 632 840.4 632.4 841 634.1 848.5 633.6 841 632zM832.3 612 833.8 611 835.6 612 836.1 613.2 832.6 614.1 831.9 613.2 832.3 612z" fill="#ff0a00" fill-rule="evenodd"/>
<path d="M921 607.2 921.6 606 1006.6 606 1006.6 645.7 988.7 632.4 983.8 628 981 630 976 636 976.6 642.2 981.3 649.2 913.4 649.2 913.5 645.6 914.6 640.8 913 637.6 905.5 637.2 903.4 636.4 890.9 636 886.6 635.1 862 633.6 857.8 632.7 854.2 633.2 848.5 631.2 860 631.2 938.2 638.8 946.6 639 951.2 638.4 960.8 622.8 961.5 621.6 960.9 620.4 952.7 619.2 937 618.6 933.4 617.3 920.2 617 919.5 614.4 921 607.2zM783.4 633.6 788.2 633.6 789.4 634.8 803.8 634.8 805 636 807.4 636 813.4 639.6 815.8 639.6 819.4 642 824.2 638.8 825.5 634.8 826.6 634.1 838.6 633.1 842.2 635 854.2 633.8 856.6 635.9 862.6 636.7 877.4 649.2 782.2 649.2 782.2 645.6 783.4 644.4 783.4 633.6z" fill="#dc0000" fill-rule="evenodd"/>
<path d="M922.4 606 1006.6 606 1006.6 644.4 998.2 635.3 992.2 627.3 991 626.6 983.8 626.6 976.3 633.6 971 640.8 976.7 649.2 914.1 649.2 915.4 638.3 919 638.4 921.4 640.8 922.6 640.9 928.6 639.4 934.6 640 938.2 641.6 941.8 640.6 950.2 641.4 952.6 642.2 963.4 641.2 975.5 621.6 973.2 619.2 970.6 618.8 937 617.4 933.4 616.2 920.2 615.8 921.4 607.9 922.4 606zM827.2 634.8 838.6 634.6 842.2 635.9 854.2 635.7 856.6 637.1 861 637.2 875.7 649.2 824.6 649.2 824.7 644.4 826.6 635.2 827.2 634.8z" fill="#b40000" fill-rule="evenodd"/>
<path d="M740 612L739 626M758.7 613.9L756.7 626.8M777.4 615.9L774.3 627.6M796.2 617.8L792 628.5M814.9 619.7L809.7 629.3M833.7 621.1L827.3 630.6M852.5 622.4L845 632.1M871.2 623.7L862.6 633.7M890 625L880.2 635.3M908.8 626.3L897.8 636.9M927.6 627.6L915.4 638.5M946.3 628.9L933.1 640M965.1 630.2L950.7 641.6M983.9 631.5L968.3 643.2M740 612L814.9 619.7L983.9 631.5M739 626L809.7 629.3L827.3 630.6L968.3 643.2M983.9 631.5L968.3 643.2" fill="none" stroke="#000" stroke-opacity="0.55" stroke-width="0.5"/>
</g>
<clipPath id="c16"><path d="M718.5 544.8 738.3 532.8 747 603.5 728.4 620z"/></clipPath>
<g clip-path="url(#c16)">
<path d="M718.5 544.8 738.3 532.8 747 603.5 728.4 620z" fill="#3c0aaa" stroke="#3c0aaa" stroke-width=".6"/>
<path d="M718.5 544.8L738.3 532.8M719 549L738.8 536.7M719.6 553.2L739.3 540.7M720.1 557.3L739.8 544.6M720.7 561.5L740.2 548.5M721.2 565.7L740.7 552.4M721.8 569.9L741.2 556.4M722.4 574L741.7 560.3M722.9 578.2L742.2 564.2M723.5 582.4L742.6 568.1M724 586.6L743.1 572.1M724.5 590.8L743.6 576M725.1 594.9L744.1 579.9M725.6 599.1L744.6 583.9M726.2 603.3L745.1 587.8M726.8 607.5L745.5 591.7M727.3 611.6L746 595.6M727.9 615.8L746.5 599.6M728.4 620L747 603.5M718.5 544.8L728.4 620M721.8 542.8L731.5 617.2M725.1 540.8L734.6 614.5M728.4 538.8L737.7 611.8M731.7 536.8L740.8 609M735 534.8L743.9 606.2M738.3 532.8L747 603.5" fill="none" stroke="#000" stroke-opacity="0.5" stroke-width="0.4"/>
</g>
<ellipse cx="313.7" cy="438.7" rx="2.9" ry="5.0" transform="rotate(16 313.7 438.7)" fill="#f01408" stroke="#400" stroke-width=".5"/>
<ellipse cx="312.7" cy="463" rx="2.9" ry="5.0" transform="rotate(16 312.7 463)" fill="#f01408" stroke="#400" stroke-width=".5"/>
<ellipse cx="311.5" cy="487.7" rx="2.9" ry="5.0" transform="rotate(16 311.5 487.7)" fill="#f01408" stroke="#400" stroke-width=".5"/>
<ellipse cx="308.9" cy="556.5" rx="2.6" ry="4.3" transform="rotate(16 308.9 556.5)" fill="#f0d000" stroke="#400" stroke-width=".5"/>
<ellipse cx="306.7" cy="595.3" rx="2.6" ry="4.3" transform="rotate(16 306.7 595.3)" fill="#f0d000" stroke="#400" stroke-width=".5"/>
<ellipse cx="303.7" cy="674.2" rx="2.8" ry="4.6" transform="rotate(16 303.7 674.2)" fill="#e81408" stroke="#400" stroke-width=".5"/>
<ellipse cx="302.9" cy="698.2" rx="2.8" ry="4.6" transform="rotate(16 302.9 698.2)" fill="#e81408" stroke="#400" stroke-width=".5"/>
<ellipse cx="301.5" cy="444" rx="1.2" ry="4" fill="#f02010"/>
<ellipse cx="300.5" cy="468" rx="1.2" ry="4" fill="#f02010"/>
<ellipse cx="299.5" cy="492" rx="1.2" ry="4" fill="#f02010"/>
<ellipse cx="297" cy="560" rx="1.300" ry="4.500" fill="#f0c000"/>
<ellipse cx="295.5" cy="598" rx="1.300" ry="4.500" fill="#f0c000"/>
<path d="M377.500 344.500c1.500-9 8-14.500 15.500-13.500 6.500 1 10.500 5 12.500 10.500l-3.500 8.500-3-7c-2-4-5-6.500-9-6.500-4.500 0-8 3-9.500 8.500l1.800 2.500-4 4z" fill="#7cfc00" stroke="#111" stroke-width=".8" stroke-linejoin="round"/>
<path d="M375 357.500l11.500-3 0 14.500-11.500 2.500z" fill="#7cfc00" stroke="#111" stroke-width=".6" fill-opacity=".9"/>
<path d="M373.500 372l8.500-1.500-7.500 6z" fill="#7cfc00" stroke="#111" stroke-width=".8" stroke-linejoin="round"/><path d="M365.500 340l7 1-.5 1.800z" fill="#111"/>
<path d="M386 355l16-8" stroke="#7cfc00" stroke-width="1.600"/>
<path d="M931.500 503l4.500-3 2 9 2.500 12-3.500 5-3-4z" fill="#7cfc00" stroke="#111" stroke-width=".8" stroke-linejoin="round" fill-opacity=".75"/>
<path d="M924 529l7-11-1 4.500 8-3.500 3 9-8 3.500 1.500 3z" fill="#7cfc00" stroke="#111" stroke-width=".8" stroke-linejoin="round"/>
<path d="M930.500 528l8-9 0 4 8-2.500 1 9-7.500 2.500 0.500 4z" fill="#7cfc00" stroke="#111" stroke-width=".8" stroke-linejoin="round"/>
<path d="M935 536l5.500-1.500 3.500-6 3 2-3.500 6.500 2.500 2-6 5z" fill="#7cfc00" stroke="#111" stroke-width=".8" stroke-linejoin="round"/>
<path d="M946 518c4 3 6 8 5 14l-5 2c1-6 0-10-3-14z" fill="#7cfc00" stroke="#111" stroke-width=".8" stroke-linejoin="round" fill-opacity=".7"/>
<path d="M958 536l7-14 5 9 4 2c4-3 4.500-8 3.500-13l6 .5c1.500 8-1 15-8 19-5 2-11 1-17.500-3.500z" fill="#7cfc00" stroke="#111" stroke-width=".8" stroke-linejoin="round"/>
<path d="M983 523.500l8 1.500" stroke="#7cfc00" stroke-width="2"/><circle cx="991" cy="525.300" r="1.300" fill="#2a5a00"/>
<path d="M232 902l5-3 13 4 12-6 4 2.500-13 8 3 4-6 1-4-5z" fill="#7cfc00" stroke="#111" stroke-width=".8" stroke-linejoin="round" fill-opacity=".85"/>
<path d="M252 899l13-2.500 2 4-7 3-1 5c4 1 7-1 9-5l5 1c-2 9-9 14-18 13.500-7-.5-12-4.500-14-10.500l5-2c2 4 5 6 9 6.500l2-6.500-7-1z" fill="#7cfc00" stroke="#111" stroke-width=".8" stroke-linejoin="round"/>
<path d="M253.200 966.600l0-27" stroke="#7cfc00" stroke-width="2.600" fill="none"/><path d="M253.200 928l-4.700 12h9.400z" fill="#7cfc00"/>
<path d="M244 945c8 2 17 1 24-2.500l-3-5.500 5.500 1.500-1 8.500c-.5 4-12 8-25.500 6z" fill="#7cfc00" stroke="#111" stroke-width=".8" stroke-linejoin="round"/>
<rect x="369" y="319" width="24" height="15" fill="#b4b4b4" fill-opacity=".78"/><text x="381.0" y="330" font-size="10.900" text-anchor="middle" fill="#000" font-family="Liberation Sans, sans-serif">-1.0</text>
<rect x="411" y="322" width="26" height="15" fill="#b4b4b4" fill-opacity=".78"/><text x="424.0" y="333" font-size="10.900" text-anchor="middle" fill="#000" font-family="Liberation Sans, sans-serif">10.7</text>
<rect x="403" y="337" width="19" height="15" fill="#b4b4b4" fill-opacity=".78"/><text x="412.5" y="348" font-size="10.900" text-anchor="middle" fill="#000" font-family="Liberation Sans, sans-serif">0.0</text>
<rect x="385.4" y="347.6" width="19.4" height="14.4" fill="#b4b4b4" fill-opacity=".78"/><text x="395.1" y="358" font-size="10.900" text-anchor="middle" fill="#000" font-family="Liberation Sans, sans-serif">0.2</text>
<rect x="375" y="354.7" width="20" height="14.9" fill="#b4b4b4" fill-opacity=".78"/><text x="385.0" y="365.6" font-size="10.900" text-anchor="middle" fill="#000" font-family="Liberation Sans, sans-serif">1.0</text>
<rect x="932.2" y="479.5" width="35.6" height="14.2" fill="#b4b4b4" fill-opacity=".78"/><text x="950.0" y="489.7" font-size="10.900" text-anchor="middle" fill="#000" font-family="Liberation Sans, sans-serif">-101.7</text>
<rect x="933.7" y="503.3" width="21.3" height="11.3" fill="#b4b4b4" fill-opacity=".78"/><text x="944.4" y="510.6" font-size="10.900" text-anchor="middle" fill="#000" font-family="Liberation Sans, sans-serif">-0.1</text>
<rect x="953.3" y="498.1" width="29.7" height="14.5" fill="#b4b4b4" fill-opacity=".78"/><text x="968.1" y="508.6" font-size="10.900" text-anchor="middle" fill="#000" font-family="Liberation Sans, sans-serif">-19.9</text>
<rect x="977" y="506.3" width="23.7" height="14.1" fill="#b4b4b4" fill-opacity=".78"/><text x="988.9" y="516.4" font-size="10.900" text-anchor="middle" fill="#000" font-family="Liberation Sans, sans-serif">-0.4</text>
<rect x="998" y="512" width="30" height="14.7" fill="#b4b4b4" fill-opacity=".78"/><text x="1013.0" y="522.7" font-size="10.900" text-anchor="middle" fill="#000" font-family="Liberation Sans, sans-serif">-62.9</text>
<rect x="948.9" y="521" width="27.8" height="14.6" fill="#b4b4b4" fill-opacity=".78"/><text x="962.8" y="531.6" font-size="10.900" text-anchor="middle" fill="#000" font-family="Liberation Sans, sans-serif">203.1</text>
<rect x="227.2" y="885.2" width="29.6" height="14.2" fill="#b4b4b4" fill-opacity=".78"/><text x="242.0" y="895.4" font-size="10.900" text-anchor="middle" fill="#000" font-family="Liberation Sans, sans-serif">-41.8</text>
<rect x="246" y="882" width="23" height="14.4" fill="#b4b4b4" fill-opacity=".78"/><text x="257.5" y="892.4" font-size="10.900" text-anchor="middle" fill="#000" font-family="Liberation Sans, sans-serif">-1.5</text>
<rect x="235.4" y="901.5" width="17.3" height="13.2" fill="#b4b4b4" fill-opacity=".78"/><text x="244.1" y="910.7" font-size="10.900" text-anchor="middle" fill="#000" font-family="Liberation Sans, sans-serif">9.2</text>
<rect x="268" y="904" width="31" height="14.8" fill="#b4b4b4" fill-opacity=".78"/><text x="283.5" y="914.8" font-size="10.900" text-anchor="middle" fill="#000" font-family="Liberation Sans, sans-serif">203.1</text>
<rect x="260.3" y="924.9" width="19.4" height="14.8" fill="#b4b4b4" fill-opacity=".78"/><text x="270.0" y="935.7" font-size="10.900" text-anchor="middle" fill="#000" font-family="Liberation Sans, sans-serif">0.0</text>
<rect x="253.2" y="960" width="31.6" height="14.8" fill="#b4b4b4" fill-opacity=".78"/><text x="269.0" y="970.8" font-size="10.900" text-anchor="middle" fill="#000" font-family="Liberation Sans, sans-serif">113.1</text>
<text x="10.300" y="215.7" font-family="Liberation Sans, sans-serif" font-size="11.700" fill="#222">Analysis</text><text x="91.4" y="215.7" font-family="Liberation Sans, sans-serif" font-size="11.700" fill="#222">100.0%</text>
<path d="M66 210.5l4.500 5.500 8.800-11.400" fill="none" stroke="#74c274" stroke-width="3.300"/>
<text x="10.300" y="236.7" font-family="Liberation Sans, sans-serif" font-size="11.700" fill="#222">Plates</text><text x="91" y="236.7" font-family="Liberation Sans, sans-serif" font-size="11.700" fill="#222">0.2 &lt; 5.0%</text>
<path d="M66 231.5l4.500 5.500 8.800-11.400" fill="none" stroke="#74c274" stroke-width="3.300"/>
<text x="10.300" y="257.7" font-family="Liberation Sans, sans-serif" font-size="11.700" fill="#222">Bolts</text><text x="94.5" y="257.7" font-family="Liberation Sans, sans-serif" font-size="11.700" fill="#222">64.6 &lt; 100%</text>
<path d="M66 252.5l4.500 5.500 8.800-11.400" fill="none" stroke="#74c274" stroke-width="3.300"/>
<text x="10.300" y="278.7" font-family="Liberation Sans, sans-serif" font-size="11.700" fill="#222">Welds</text><text x="94.5" y="278.7" font-family="Liberation Sans, sans-serif" font-size="11.700" fill="#222">86.0 &lt; 100%</text>
<path d="M66 273.5l4.500 5.500 8.800-11.400" fill="none" stroke="#74c274" stroke-width="3.300"/>
<text x="10.300" y="299.7" font-family="Liberation Sans, sans-serif" font-size="11.700" fill="#222">Buckling</text><text x="91" y="299.7" font-family="Liberation Sans, sans-serif" font-size="11.700" fill="#222">Not calculated</text>
<ellipse cx="1070" cy="261.700" rx="37" ry="18.500" fill="none" stroke="#dedede" stroke-width="9"/>
<path d="M1041.300 226.300L1065.400 217.500L1096.700 222.900L1094.600 256.700L1075.400 274.600L1044.200 261.700z" fill="#a8a8a8" fill-opacity=".92" stroke="#7e7e7e" stroke-width="1"/>
<path d="M1041.300 226.300L1076.700 233.800L1096.700 222.900M1076.700 233.800L1075.400 274.600M1065.400 217.500L1065.400 248.300L1044.200 261.700M1065.400 248.300L1094.600 256.700" fill="none" stroke="#7e7e7e" stroke-width="1"/>
<path d="M1036 280l9-7M1041 273l-1-5M1043.500 276.500l6-1.500" stroke="#8a8a8a" stroke-width="1.800" fill="none"/><path d="M1034 248h6M1100 270l10 3" stroke="#9a9a9a" stroke-width="1" stroke-dasharray="2 1.500"/>
<text x="1055" y="253" font-size="6.500" fill="#fff" font-family="Liberation Sans, sans-serif" font-style="italic" transform="rotate(12 1055 253)">+y</text><text x="1069" y="226.500" font-size="5" fill="#fff" font-family="Liberation Sans, sans-serif">z</text><text x="1086" y="251" font-size="5" fill="#fff" font-family="Liberation Sans, sans-serif" transform="rotate(-60 1086 251)">-x</text>
<text x="1080" y="314.400" font-size="15.500" text-anchor="middle" fill="#111" font-family="Liberation Sans, sans-serif">[MPa]</text>
<rect x="1073.500" y="635.91" width="26" height="15.49" fill="#4b0a82"/>
<rect x="1073.500" y="620.72" width="26" height="15.49" fill="#3c0aaa"/>
<rect x="1073.500" y="605.53" width="26" height="15.49" fill="#1e0adc"/>
<rect x="1073.500" y="590.34" width="26" height="15.49" fill="#0000ff"/>
<rect x="1073.500" y="575.15" width="26" height="15.49" fill="#0a64ff"/>
<rect x="1073.500" y="559.96" width="26" height="15.49" fill="#00beff"/>
<rect x="1073.500" y="544.77" width="26" height="15.49" fill="#00e6dc"/>
<rect x="1073.500" y="529.58" width="26" height="15.49" fill="#00b48c"/>
<rect x="1073.500" y="514.39" width="26" height="15.49" fill="#00823c"/>
<rect x="1073.500" y="499.2" width="26" height="15.49" fill="#287d0a"/>
<rect x="1073.500" y="484.01" width="26" height="15.49" fill="#82b400"/>
<rect x="1073.500" y="468.82" width="26" height="15.49" fill="#d8e610"/>
<rect x="1073.500" y="453.63" width="26" height="15.49" fill="#ffee00"/>
<rect x="1073.500" y="438.44" width="26" height="15.49" fill="#ffc800"/>
<rect x="1073.500" y="423.25" width="26" height="15.49" fill="#ffaa00"/>
<rect x="1073.500" y="408.06" width="26" height="15.49" fill="#ff7800"/>
<rect x="1073.500" y="392.87" width="26" height="15.49" fill="#ff4600"/>
<rect x="1073.500" y="377.68" width="26" height="15.49" fill="#ff0a00"/>
<rect x="1073.500" y="362.49" width="26" height="15.49" fill="#dc0000"/>
<rect x="1073.500" y="347.3" width="26" height="15.49" fill="#b40000"/>
<rect x="1073.500" y="347.3" width="26" height="303.8" fill="none" stroke="#111" stroke-width="1"/>
<path d="M1065.500 651.1h8" stroke="#111" stroke-width="1"/>
<text x="1058" y="663.1" font-size="12" text-anchor="end" fill="#111" font-family="Liberation Sans, sans-serif">0.0</text>
<path d="M1065.500 610.2h8" stroke="#111" stroke-width="1"/>
<text x="1058" y="607.7" font-size="12" text-anchor="end" fill="#111" font-family="Liberation Sans, sans-serif">20</text>
<path d="M1065.500 569.3h8" stroke="#111" stroke-width="1"/>
<text x="1058" y="566.8" font-size="12" text-anchor="end" fill="#111" font-family="Liberation Sans, sans-serif">40</text>
<path d="M1065.500 528.4h8" stroke="#111" stroke-width="1"/>
<text x="1058" y="525.9" font-size="12" text-anchor="end" fill="#111" font-family="Liberation Sans, sans-serif">60</text>
<path d="M1065.500 487.5h8" stroke="#111" stroke-width="1"/>
<text x="1058" y="485.0" font-size="12" text-anchor="end" fill="#111" font-family="Liberation Sans, sans-serif">80</text>
<path d="M1065.500 446.6h8" stroke="#111" stroke-width="1"/>
<text x="1058" y="444.1" font-size="12" text-anchor="end" fill="#111" font-family="Liberation Sans, sans-serif">100</text>
<path d="M1065.500 405.8h8" stroke="#111" stroke-width="1"/>
<text x="1058" y="403.3" font-size="12" text-anchor="end" fill="#111" font-family="Liberation Sans, sans-serif">120</text>
<path d="M1065.500 364.9h8" stroke="#111" stroke-width="1"/>
<text x="1058" y="362.4" font-size="12" text-anchor="end" fill="#111" font-family="Liberation Sans, sans-serif">140</text>
<path d="M1065.500 347.3h8" stroke="#111" stroke-width="1"/><text x="1058" y="344.90000000000003" font-size="12" text-anchor="end" fill="#111" font-family="Liberation Sans, sans-serif">148.6</text></svg>
</div></div>
<!-- 2D plate -->
<svg style="left:1136px;top:583px" width="722" height="465" viewBox="1136 583 722 465"><clipPath id="c501"><path d="M1373.2 606.2 1472.8 606.2 1472.8 1023.2 1373.2 1023.2z"/></clipPath>
<g clip-path="url(#c501)">
<path d="M1373.2 606.2 1472.8 606.2 1472.8 1023.2 1373.2 1023.2z" fill="#0000ff" stroke="#0000ff" stroke-width=".6"/>
<path d="M1369.2 602.2 1477.2 602.2 1477.2 654 1474.2 654.8 1472.7 656.9 1469.2 671.2 1469.7 673 1472.1 675.7 1474.2 676.7 1477.2 676.9 1477.2 1028.2 1369.2 1028.2 1369.2 680 1373.7 678.7 1376.7 674.6 1377.7 671.2 1373.7 652.5 1372.2 649.3 1369.2 647.8 1369.2 602.2z" fill="#0a64ff" fill-rule="evenodd"/>
<path d="M1378.2 602.2 1477.2 602.2 1477.2 617.4 1472.7 625 1465.6 662.2 1462.1 671.2 1463.4 675.7 1468.2 681.4 1472.7 684.7 1477.2 685.3 1477.2 1028.2 1369.2 1028.2 1369.2 694.4 1372.2 693.9 1375.2 691.2 1382.6 677.2 1384.3 671.2 1383.4 663.7 1378 639.7 1376.8 621.7 1378.2 602.2z" fill="#00beff" fill-rule="evenodd"/>
<path d="M1382.5 602.2 1465.7 602.2 1464.7 618.7 1459.5 657.7 1454.9 672.7 1456.9 680.2 1464.3 692.2 1470.8 696.7 1477.2 697.6 1477.2 1028.2 1369.2 1028.2 1369.2 730.3 1372.2 730 1375.2 728 1379.7 720.7 1384.2 705.2 1391.3 672.7 1389.9 662.2 1384.6 641.2 1382.5 602.2z" fill="#00e6dc" fill-rule="evenodd"/>
<path d="M1385 602.2 1462.4 602.2 1461.8 611.2 1455.5 651.7 1453.6 660.7 1450.1 671.2 1449.9 677.2 1451.7 699.7 1454.7 704.8 1461.1 711.7 1465.1 717.7 1466.2 720.7 1467.9 734.2 1468.9 737.2 1472.7 740.9 1477.2 741.7 1477.2 1028.2 1369.2 1028.2 1369.2 746.7 1375.2 746.3 1387.2 743.3 1390.2 741.1 1391.7 738.7 1390 719.2 1394.7 698.2 1396.2 676.4 1395.7 669.7 1389 641.2 1385 602.2z" fill="#00b48c" fill-rule="evenodd"/>
<path d="M1386.8 602.2 1460.2 602.2 1459.8 608.2 1453 648.7 1446.8 672.7 1444.8 698.2 1445.7 701.2 1455.1 717.7 1455.9 720.7 1454 729.7 1450.1 737.2 1450 738.7 1451.3 740.2 1463.7 747.8 1472.7 758.9 1477.2 759.8 1477.2 1028.2 1369.2 1028.2 1369.2 761.5 1376.7 760.7 1393.2 756.4 1396.2 753.9 1398.6 750.7 1400.7 745.2 1401.6 740.2 1400.7 737.2 1396.6 729.7 1394.8 722.2 1394.8 717.7 1396.5 710.2 1401 699.7 1400.6 686.2 1399.2 672.7 1391.5 639.7 1387.3 609.7 1386.8 602.2z" fill="#00823c" fill-rule="evenodd"/>
<path d="M1388.4 602.2 1458.2 602.2 1457.8 608.2 1451.6 642.7 1446.9 663.7 1444.2 672.7 1439.7 698.2 1440.2 701.2 1444.3 707.2 1448.8 716.2 1450 720.7 1449.3 723.7 1446.3 729.7 1442.7 734.1 1438.2 737.3 1437.2 738.7 1436.8 741.7 1438.4 753.7 1440.7 758.2 1442.7 760.1 1445.7 760.4 1451.7 757.1 1453.2 757.1 1458.7 767.2 1460.7 769.2 1469.7 773.3 1477.2 774.3 1477.2 1028.2 1369.2 1028.2 1369.2 777.5 1388.7 775.4 1402.2 772.9 1404.5 770.2 1405.7 767.2 1408.4 755.2 1409.1 747.7 1408.9 738.7 1401.7 731.2 1398.8 725.2 1397.7 720.7 1397.9 717.7 1399.7 711.7 1401.7 707.2 1405.8 701.2 1406.3 698.2 1401.8 672.7 1399.1 663.7 1393.9 639.7 1388.8 608.2 1388.4 602.2z" fill="#287d0a" fill-rule="evenodd"/>
<path d="M1390 602.2 1456.4 602.2 1456.2 606.7 1453.2 619.5 1445.4 662.2 1442 672.7 1435.6 699.7 1436.7 703.1 1443 711.7 1445.5 717.7 1445.8 720.7 1442.6 728.2 1439.7 731.1 1435.2 733.2 1432.4 737.2 1431.8 755.2 1432.9 768.7 1433.7 771.5 1435.2 773.4 1468.2 783.7 1477.2 784.8 1477.2 1028.2 1369.2 1028.2 1369.2 793.3 1373.7 793.1 1391.7 789.9 1402.2 787.3 1405.9 785.2 1409.7 780.4 1412.7 772.8 1414.2 756.6 1413.5 737.2 1411.2 733.5 1406.7 731.2 1403.7 728.3 1400.5 720.7 1400.7 717.7 1402.3 713.2 1404.8 708.7 1409.6 702.7 1410.4 699.7 1404 672.7 1400.6 662.2 1390.5 608.2 1390 602.2z" fill="#82b400" fill-rule="evenodd"/>
<path d="M1392.2 602.2 1454 602.2 1443.6 662.2 1432.1 699.7 1432.2 702.7 1433.7 707.1 1435.2 709.3 1439.7 712.6 1441.2 714.6 1442.7 717.7 1443 720.7 1441.9 723.7 1439.7 726.2 1433.3 728.2 1430.1 734.2 1429.1 738.7 1428.5 750.7 1428.7 768.7 1431.4 782.2 1433.2 785.2 1435.2 786.5 1471.2 793 1477.2 793.3 1477.2 1028.2 1369.2 1028.2 1369.2 805.5 1375.2 805 1393.2 801 1408.2 791.8 1412.7 788 1414.5 785.2 1417.3 768.7 1417.5 750.7 1416.9 738.7 1415.9 734.2 1412.7 728.1 1406.7 726.3 1404.3 723.7 1403.1 720.7 1403.4 717.7 1405.2 714 1411.2 708.9 1412.2 707.2 1413.7 702.7 1413.9 699.7 1402.4 662.2 1392.2 602.2z" fill="#d8e610" fill-rule="evenodd"/>
<path d="M1396.4 602.2 1449.6 602.2 1448.3 620.2 1441.7 662.2 1428.9 699.7 1430.1 711.7 1431.5 716.2 1433.3 719.2 1429.2 725.5 1425.5 737.2 1424.7 752.2 1424.9 768.7 1427.6 785.2 1430.7 790.6 1433.7 793.2 1439.7 796 1471.2 801.9 1477.2 802.2 1477.2 1028.2 1400.6 1028.2 1400 1022.2 1396.2 1014.3 1390.2 1004.3 1384.2 998.2 1382.8 995.2 1378.7 975.7 1375.2 963.7 1372.2 958.7 1369.2 957.9 1369.2 817 1373.7 816.4 1382.5 812.2 1396.2 807.6 1402.2 804.6 1406.7 801.1 1414.2 793.3 1418.1 786.7 1421.2 768.7 1421.4 752.2 1420.8 738.7 1417.3 726.7 1412.9 719.2 1415.9 711.7 1417.1 699.7 1404 660.7 1400.7 636.4 1397.7 620.6 1396.4 602.2zM1406.6 719.2 1408.2 718 1411 719.2 1410.1 720.7 1408.2 721.3 1406.8 720.7 1406.6 719.2zM1434.7 719.2 1438.2 718 1439.4 719.2 1439.2 720.7 1438.2 721.3 1435.8 720.7 1434.7 719.2zM1369.2 1011.7 1369.2 1010.6 1372.2 1011.1 1373.7 1012.1 1375.2 1014.7 1376.5 1020.7 1376.8 1028.2 1369.2 1028.2 1369.2 1011.7z" fill="#ffee00" fill-rule="evenodd"/>
<path d="M1401.1 602.2 1445 602.2 1444.9 620.2 1439.7 662.2 1427.7 694 1426.1 696.7 1423.2 698.7 1420.2 697.1 1418.7 694.8 1406.3 662.2 1401.1 620.2 1401.1 602.2zM1421.6 788.2 1423.2 787 1424.7 788.5 1429.2 796.6 1434.6 801.7 1439.7 808.5 1441.2 809.6 1453.2 808.9 1472.7 812.6 1477.2 812.8 1477.2 1028.2 1425.5 1028.2 1424.8 1022.2 1408.2 986 1395.1 942.7 1385.3 897.7 1379 845.2 1378.6 834.7 1381.5 828.7 1387.5 822.7 1391.7 820.1 1402.2 815.4 1405.2 813.2 1417.2 796.6 1421.6 788.2z" fill="#ffc800" fill-rule="evenodd"/>
<path d="M1405.1 602.2 1440.9 602.2 1441.8 621.7 1437.9 662.2 1426.2 690.5 1424.7 692.7 1423.2 693.6 1421.7 693.1 1419.9 690.7 1408.1 662.2 1404.2 621.7 1405.1 602.2zM1421.6 797.2 1423.2 796.1 1424.7 797.5 1427.7 802.4 1439.7 817.9 1442.7 818 1453.2 815.3 1471.2 819.9 1477.2 820.3 1477.2 1028.2 1440.7 1028.2 1439.8 1020.7 1418 965.2 1411.6 944.2 1403.4 902.2 1397.3 884.2 1389.7 849.7 1387.6 836.2 1389.8 830.2 1393.2 825.9 1397.7 823.4 1405.2 821.2 1407.2 819.7 1421.6 797.2z" fill="#ffaa00" fill-rule="evenodd"/>
<path d="M1408.8 602.2 1437.2 602.2 1439.4 621.7 1436.4 660.7 1435 665.2 1425.4 686.2 1423.2 688.8 1421.7 688 1420.2 685.3 1411.2 665.8 1409.6 660.7 1406.6 621.7 1408.8 602.2zM1422.2 804.7 1423.2 804.3 1424.7 805.3 1435.7 819.7 1439.7 822.2 1442.7 822.2 1453.2 820.2 1471.2 823.9 1477.2 824.3 1477.2 1028.2 1449.3 1028.2 1448.6 1020.7 1444.2 1005.1 1423.3 945.7 1413.4 902.2 1406 888.7 1400.2 872.2 1397.3 857.2 1392.2 839.2 1392 834.7 1393.3 831.7 1396.2 828.6 1406.7 823.9 1410.1 821.2 1422.2 804.7z" fill="#ff7800" fill-rule="evenodd"/>
<path d="M1412.1 602.2 1433.9 602.2 1434.2 606.7 1436.7 618.7 1436.9 624.7 1434.5 660.7 1433.6 663.7 1424.7 681.5 1423.2 683.4 1421.7 682.2 1412.7 664.4 1411.5 660.7 1409 621.7 1411.8 606.7 1412.1 602.2zM1422.1 812.2 1423.2 811.8 1424.7 812.7 1432.3 821.2 1438.2 824.8 1441.2 825.4 1453.2 824.4 1471.2 827.6 1477.2 827.9 1477.2 1028.2 1456.5 1028.2 1456.3 1022.2 1454.7 1013.9 1445.6 977.2 1431.4 935.2 1423.4 902.2 1421.2 897.7 1410.4 884.2 1404.8 872.2 1402.2 864.7 1399.2 850.3 1395.6 837.7 1395.6 834.7 1399.2 830.6 1406.7 827.1 1410.9 824.2 1422.1 812.2z" fill="#ff4600" fill-rule="evenodd"/>
<path d="M1416.3 602.2 1429.7 602.2 1430 606.7 1433.8 621.7 1431.8 660.7 1424.7 674.5 1423.2 676.1 1421.7 675.1 1415.4 663.7 1413.9 659.2 1412.2 621.7 1416 606.7 1416.3 602.2zM1422.2 819.7 1424.7 820.1 1432.2 825.4 1438.2 827.9 1453.2 828.5 1471.2 831.2 1477.2 831.4 1477.2 1028.2 1463.7 1028.2 1463.4 1020.7 1461.7 1007.2 1455.1 969.7 1449.6 948.7 1437.8 912.7 1431.7 897.7 1426.2 890.1 1411.2 873.9 1406.7 865.1 1403.7 857.2 1399.5 837.7 1399.8 834.7 1402.2 832.6 1411.2 827.7 1422.2 819.7z" fill="#ff0a00" fill-rule="evenodd"/>
<path d="M1422.2 617.2 1423.2 616.7 1424.7 617.9 1426.2 621.7 1427 639.7 1426.6 660.7 1424.7 665 1423.2 666.6 1421.7 665.6 1419.9 662.2 1419.2 656.2 1419.6 623.2 1420.2 620.1 1422.2 617.2zM1420.5 827.2 1423.2 826.5 1438.2 831 1477.2 835.5 1477.2 941.3 1472.7 940.4 1466.7 933.7 1458.2 918.7 1450.9 902.2 1448.8 899.2 1430.7 879.1 1415.7 867.9 1412.7 864.9 1409.7 860.3 1407.8 855.7 1406 848.2 1404.6 836.2 1407.8 833.2 1420.5 827.2z" fill="#dc0000" fill-rule="evenodd"/>
<path d="M1415.2 834.7 1423.2 833.7 1442.7 835 1446.4 836.2 1450.2 839.2 1453.7 840.7 1477.2 842.2 1477.2 903.7 1474.2 903.6 1471.2 902.2 1469.7 900 1466.3 891.7 1462.8 887.2 1457.7 884.4 1448.7 881.2 1447.2 879.7 1442.8 869.2 1438.6 864.7 1432.2 861.8 1420.2 859.3 1416.8 857.2 1411 843.7 1411.5 837.7 1412.3 836.2 1415.2 834.7z" fill="#b40000" fill-rule="evenodd"/>
<path d="M1373.2 606.2V1023.2M1385.7 606.2V1023.2M1398.1 606.2V1023.2M1410.5 606.2V1023.2M1423 606.2V1023.2M1435.5 606.2V1023.2M1447.9 606.2V1023.2M1460.3 606.2V1023.2M1472.8 606.2V1023.2M1373.2 606.2H1472.8M1373.2 620.1H1472.8M1373.2 634H1472.8M1373.2 647.9H1472.8M1373.2 661.8H1472.8M1373.2 675.7H1472.8M1373.2 689.6H1472.8M1373.2 703.5H1472.8M1373.2 717.4H1472.8M1373.2 731.3H1472.8M1373.2 745.2H1472.8M1373.2 759.1H1472.8M1373.2 773H1472.8M1373.2 786.9H1472.8M1373.2 800.8H1472.8M1373.2 814.7H1472.8M1373.2 828.6H1472.8M1373.2 842.5H1472.8M1373.2 856.4H1472.8M1373.2 870.3H1472.8M1373.2 884.2H1472.8M1373.2 898.1H1472.8M1373.2 912H1472.8M1373.2 925.9H1472.8M1373.2 939.8H1472.8M1373.2 953.7H1472.8M1373.2 967.6H1472.8M1373.2 981.5H1472.8M1373.2 995.4H1472.8M1373.2 1009.3H1472.8M1373.2 1023.2H1472.8M1406.7 621.5l-12.4 -13.9M1406.7 621.5l12.4 -13.9M1406.7 621.5l-12.4 13.9M1406.7 621.5l12.4 13.9M1406.7 621.5l-16 0M1406.7 621.5l16 0M1439.7 621.5l-12.4 -13.9M1439.7 621.5l12.4 -13.9M1439.7 621.5l-12.4 13.9M1439.7 621.5l12.4 13.9M1439.7 621.5l-16 0M1439.7 621.5l16 0M1406.7 641.9l-12.4 -13.9M1406.7 641.9l12.4 -13.9M1406.7 641.9l-12.4 13.9M1406.7 641.9l12.4 13.9M1406.7 641.9l-16 0M1406.7 641.9l16 0M1439.7 641.9l-12.4 -13.9M1439.7 641.9l12.4 -13.9M1439.7 641.9l-12.4 13.9M1439.7 641.9l12.4 13.9M1439.7 641.9l-16 0M1439.7 641.9l16 0M1406.7 662.2l-12.4 -13.9M1406.7 662.2l12.4 -13.9M1406.7 662.2l-12.4 13.9M1406.7 662.2l12.4 13.9M1406.7 662.2l-16 0M1406.7 662.2l16 0M1439.7 662.2l-12.4 -13.9M1439.7 662.2l12.4 -13.9M1439.7 662.2l-12.4 13.9M1439.7 662.2l12.4 13.9M1439.7 662.2l-16 0M1439.7 662.2l16 0M1406.7 720.3l-12.4 -13.9M1406.7 720.3l12.4 -13.9M1406.7 720.3l-12.4 13.9M1406.7 720.3l12.4 13.9M1406.7 720.3l-16 0M1406.7 720.3l16 0M1439.7 720.3l-12.4 -13.9M1439.7 720.3l12.4 -13.9M1439.7 720.3l-12.4 13.9M1439.7 720.3l12.4 13.9M1439.7 720.3l-16 0M1439.7 720.3l16 0M1406.7 753.5l-12.4 -13.9M1406.7 753.5l12.4 -13.9M1406.7 753.5l-12.4 13.9M1406.7 753.5l12.4 13.9M1406.7 753.5l-16 0M1406.7 753.5l16 0M1439.7 753.5l-12.4 -13.9M1439.7 753.5l12.4 -13.9M1439.7 753.5l-12.4 13.9M1439.7 753.5l12.4 13.9M1439.7 753.5l-16 0M1439.7 753.5l16 0M1406.5 818.9l-12.4 -13.9M1406.5 818.9l12.4 -13.9M1406.5 818.9l-12.4 13.9M1406.5 818.9l12.4 13.9M1406.5 818.9l-16 0M1406.5 818.9l16 0M1439.3 818.9l-12.4 -13.9M1439.3 818.9l12.4 -13.9M1439.3 818.9l-12.4 13.9M1439.3 818.9l12.4 13.9M1439.3 818.9l-16 0M1439.3 818.9l16 0M1406.5 840l-12.4 -13.9M1406.5 840l12.4 -13.9M1406.5 840l-12.4 13.9M1406.5 840l12.4 13.9M1406.5 840l-16 0M1406.5 840l16 0M1439.3 840l-12.4 -13.9M1439.3 840l12.4 -13.9M1439.3 840l-12.4 13.9M1439.3 840l12.4 13.9M1439.3 840l-16 0M1439.3 840l16 0M1423 650l-25 14M1423 650l25 14M1423 650l-25 -14M1423 650l25 -14M1423 682l-25 14M1423 682l25 14M1423 682l-25 -14M1423 682l25 -14M1423 700l-25 14M1423 700l25 14M1423 700l-25 -14M1423 700l25 -14M1423 735l-25 14M1423 735l25 14M1423 735l-25 -14M1423 735l25 -14M1423 770l-25 14M1423 770l25 14M1423 770l-25 -14M1423 770l25 -14M1423 800l-25 14M1423 800l25 14M1423 800l-25 -14M1423 800l25 -14M1423 830l-25 14M1423 830l25 14M1423 830l-25 -14M1423 830l25 -14M1423 856l-25 14M1423 856l25 14M1423 856l-25 -14M1423 856l25 -14" fill="none" stroke="#000" stroke-opacity="0.6" stroke-width="0.5"/>
</g><rect x="1373.2" y="606.2" width="99.6" height="417.0" fill="#fff" fill-opacity=".16"/><path d="M1423 606.2V1023.2" stroke="#333" stroke-width="1" stroke-opacity=".7"/><rect x="1373.2" y="606.2" width="99.6" height="417.0" fill="none" stroke="#444" stroke-width=".8"/><circle cx="1406.7" cy="621.5" r="4.300" fill="#a8a8a8" stroke="#888" stroke-width=".5"/><text x="1406.7" y="623.3" font-size="5" text-anchor="middle" fill="#111" font-family="Liberation Sans, sans-serif">2</text><circle cx="1439.7" cy="621.5" r="4.300" fill="#a8a8a8" stroke="#888" stroke-width=".5"/><text x="1439.7" y="623.3" font-size="5" text-anchor="middle" fill="#111" font-family="Liberation Sans, sans-serif">8</text><circle cx="1406.7" cy="641.9" r="4.300" fill="#a8a8a8" stroke="#888" stroke-width=".5"/><text x="1406.7" y="643.6999999999999" font-size="5" text-anchor="middle" fill="#111" font-family="Liberation Sans, sans-serif">4</text><circle cx="1439.7" cy="641.9" r="4.300" fill="#a8a8a8" stroke="#888" stroke-width=".5"/><text x="1439.7" y="643.6999999999999" font-size="5" text-anchor="middle" fill="#111" font-family="Liberation Sans, sans-serif">10</text><circle cx="1406.7" cy="662.2" r="4.300" fill="#a8a8a8" stroke="#888" stroke-width=".5"/><text x="1406.7" y="664.0" font-size="5" text-anchor="middle" fill="#111" font-family="Liberation Sans, sans-serif">6</text><circle cx="1439.7" cy="662.2" r="4.300" fill="#a8a8a8" stroke="#888" stroke-width=".5"/><text x="1439.7" y="664.0" font-size="5" text-anchor="middle" fill="#111" font-family="Liberation Sans, sans-serif">12</text><circle cx="1406.7" cy="720.3" r="4.300" fill="#a8a8a8" stroke="#888" stroke-width=".5"/><text x="1406.7" y="722.0999999999999" font-size="5" text-anchor="middle" fill="#111" font-family="Liberation Sans, sans-serif">14</text><circle cx="1439.7" cy="720.3" r="4.300" fill="#a8a8a8" stroke="#888" stroke-width=".5"/><text x="1439.7" y="722.0999999999999" font-size="5" text-anchor="middle" fill="#111" font-family="Liberation Sans, sans-serif">18</text><circle cx="1406.7" cy="753.5" r="4.300" fill="#a8a8a8" stroke="#888" stroke-width=".5"/><text x="1406.7" y="755.3" font-size="5" text-anchor="middle" fill="#111" font-family="Liberation Sans, sans-serif">16</text><circle cx="1439.7" cy="753.5" r="4.300" fill="#a8a8a8" stroke="#888" stroke-width=".5"/><text x="1439.7" y="755.3" font-size="5" text-anchor="middle" fill="#111" font-family="Liberation Sans, sans-serif">20</text><circle cx="1406.5" cy="818.9" r="4.300" fill="#a8a8a8" stroke="#888" stroke-width=".5"/><text x="1406.5" y="820.6999999999999" font-size="5" text-anchor="middle" fill="#111" font-family="Liberation Sans, sans-serif">22</text><circle cx="1439.3" cy="818.9" r="4.300" fill="#a8a8a8" stroke="#888" stroke-width=".5"/><text x="1439.3" y="820.6999999999999" font-size="5" text-anchor="middle" fill="#111" font-family="Liberation Sans, sans-serif">26</text><circle cx="1406.5" cy="840" r="4.300" fill="#a8a8a8" stroke="#888" stroke-width=".5"/><text x="1406.5" y="841.8" font-size="5" text-anchor="middle" fill="#111" font-family="Liberation Sans, sans-serif">24</text><circle cx="1439.3" cy="840" r="4.300" fill="#a8a8a8" stroke="#888" stroke-width=".5"/><text x="1439.3" y="841.8" font-size="5" text-anchor="middle" fill="#111" font-family="Liberation Sans, sans-serif">28</text></svg>
<div id="leftedge"></div>
</body></html>
